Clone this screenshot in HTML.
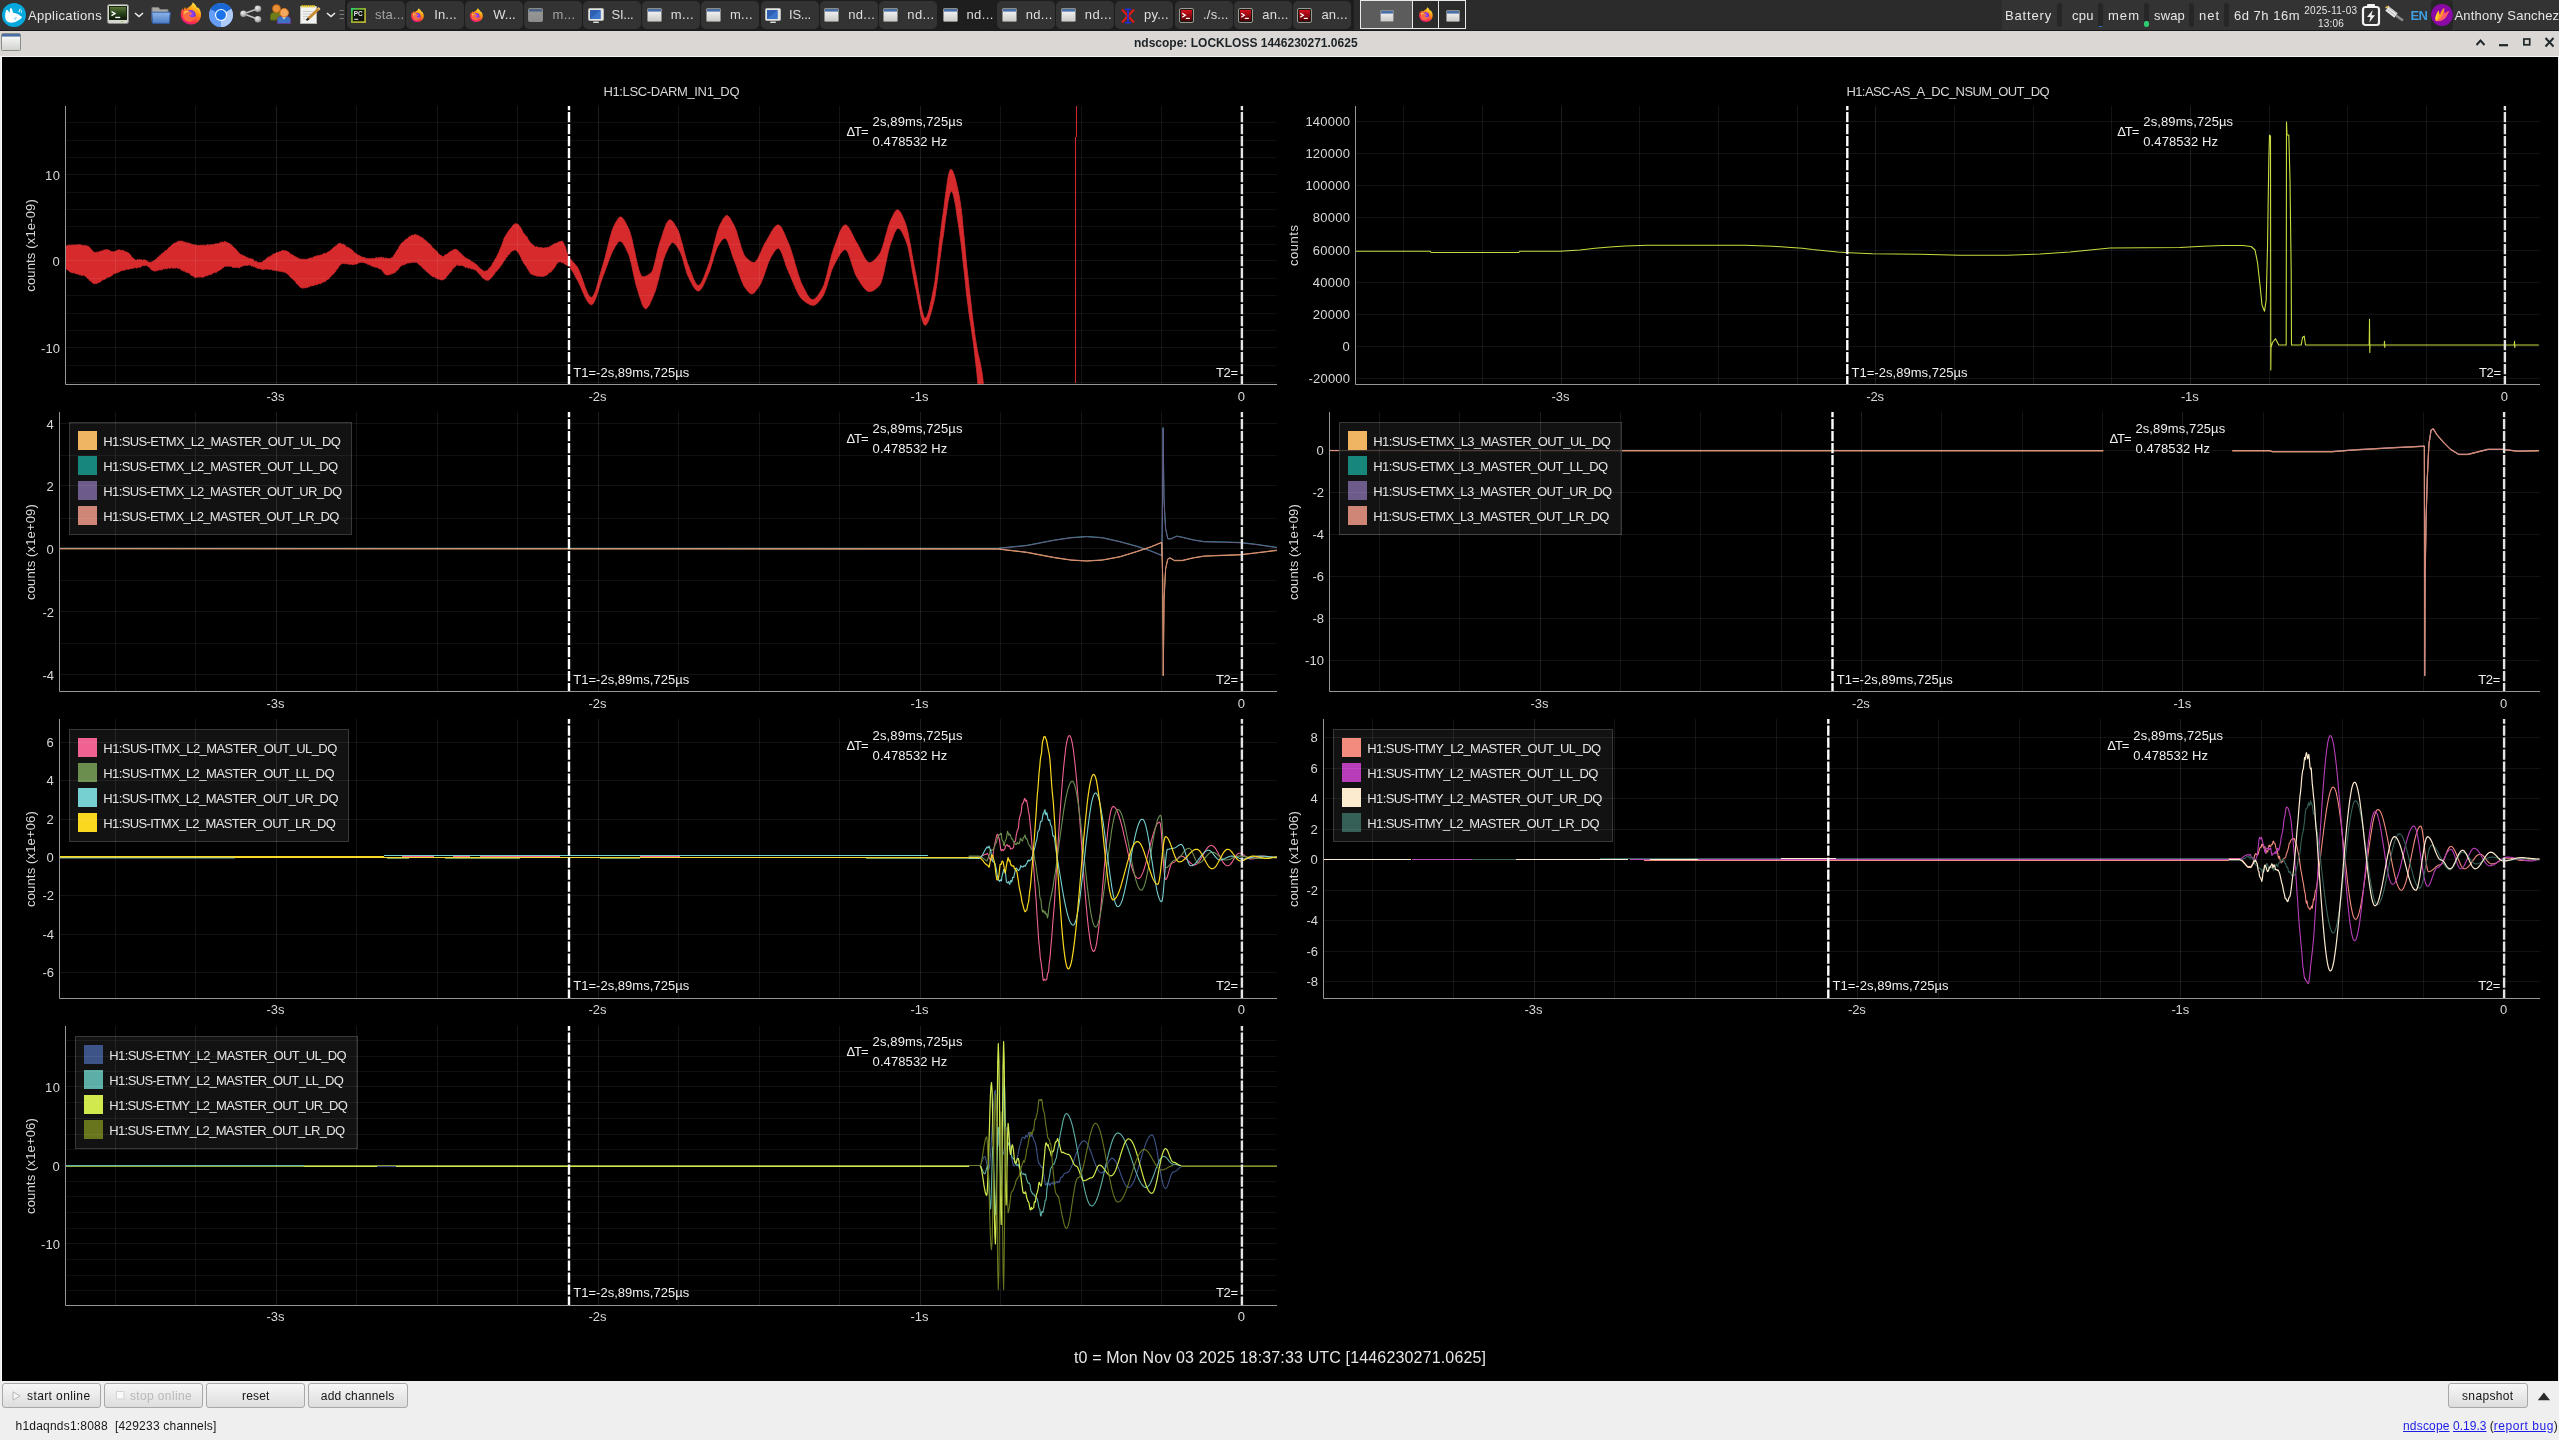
<!DOCTYPE html>
<html lang="en"><head><meta charset="utf-8"><title>ndscope: LOCKLOSS 1446230271.0625</title>
<style>
html,body{margin:0;padding:0;background:#efefef;}
body{width:2559px;height:1440px;position:relative;overflow:hidden;font-family:"Liberation Sans",Arial,sans-serif;}
#panel{will-change:transform;position:absolute;left:0;top:0;width:2559px;height:31px;background:#333;overflow:hidden;white-space:nowrap}
#panel .tl{position:absolute;left:345px;top:0;width:1657px;height:30px;background:#2b2b2b}
#panel .tl2{position:absolute;left:345px;top:0;width:1009px;height:30px;background:#1d1d1d}
.tb{position:absolute;top:1px;height:28px;width:58px;background:#333;border-radius:5px;box-sizing:border-box}
.tb.act{background:#1e1e1e}
.tb span{position:absolute;top:6px;color:#dedede;line-height:16px}

.pt{position:absolute;color:#e6e6e6;line-height:16px;white-space:nowrap}
.bar{position:absolute;top:3px;width:5px;height:24px;background:#262626;border-radius:2.5px;overflow:hidden}
#titlebar{will-change:transform;position:absolute;left:0;top:31px;width:2559px;height:26px;background:#dad7d4;border-bottom:1px solid #f6f5f4;box-sizing:border-box}
#titlebar .t{position:absolute;left:1134px;top:2.5px;line-height:16px;color:#1c2226;font-weight:bold;white-space:nowrap}
#bottom{will-change:transform;position:absolute;left:0;top:1381px;width:2559px;height:59px;background:#efefef}
.btn{position:absolute;top:2px;height:25px;box-sizing:border-box;border:1px solid #a8a8a8;border-radius:3px;background:linear-gradient(#f7f7f7,#dddddd);color:#111;line-height:16px}
.btn span{position:absolute;top:4px;white-space:nowrap}
.st{position:absolute;line-height:16px;white-space:nowrap;color:#161616}
a{color:#1c1ce8}
#edgeL{position:absolute;left:0;top:57px;width:2px;height:1324px;background:linear-gradient(90deg,#ededed 50%,#fbfbfb 50%)}
#edgeR{position:absolute;left:2558px;top:57px;width:1px;height:1324px;background:#e8e8e8}
</style></head>
<body>
<div id="panel">
<div class="tl"></div><div class="tl2"></div>
<svg style="position:absolute;left:2px;top:3px" width="24" height="24" viewBox="0 0 24 24"><circle cx="12" cy="12" r="12" fill="#05a9dd"/>
<path d="M3.200 13.500C3 11 3.600 8.200 4.400 7C5.200 6.400 6.400 7.600 7.200 9.600L7.800 9.200C7.600 7.400 7.800 5.400 8.800 5.100C10 4.900 10.600 7.400 11 9.800C14 10.200 17.500 11.600 20.100 14.100C19.600 16 16.500 17.200 14.200 18.600C12 19.800 8.600 20.200 6 18.900C4 17.800 3 15.600 3.200 13.500Z" fill="#fff"/>
<path d="M11.600 15.400l2.200-1.700 1 1-1.800 2.600z" fill="#2fb6e2" fill-opacity=".7"/><path d="M12.200 14.400l2.400 2M13.800 13.900l-1.800 2.500" stroke="#fff" stroke-width=".45"/>
<path d="M16.400 8.600l1.500-3.300.9.900-1.300 3.300zM18.600 9.700l.9-2.600.7.600-.8 2.500z" fill="#fff" fill-opacity=".8"/></svg>
<div class="pt" style="left:28px;top:7px"><span style="font-size:13px;letter-spacing:0.323px;">Applications</span></div>
<svg style="position:absolute;left:107px;top:4px" width="22" height="20" viewBox="0 0 22 20"><defs><linearGradient id="tg" x1="0" y1="0" x2="0" y2="1"><stop offset="0" stop-color="#5d7a3a"/><stop offset=".45" stop-color="#2f4a20"/><stop offset="1" stop-color="#0e1a08"/></linearGradient></defs>
<rect x="0.500" y="0.500" width="21" height="19" rx="2" fill="#d6d6d0" stroke="#8e8e88"/><rect x="2.500" y="2.500" width="17" height="13" fill="url(#tg)" stroke="#1c2414"/>
<path d="M4.500 7.500L8 9.600L4.500 11.700" stroke="#fff" stroke-width="1.400" fill="none"/><rect x="8.200" y="12.800" width="5" height="1.300" fill="#fff"/><rect x="14.500" y="17" width="1.200" height="1.200" fill="#7ad020"/></svg>
<svg style="position:absolute;left:134px;top:12px" width="10" height="6" viewBox="0 0 10 6"><path d="M1 1L5 4.600L9 1" stroke="#f0f0f0" stroke-width="1.500" fill="none"/></svg>
<svg style="position:absolute;left:151px;top:6px" width="20" height="18" viewBox="0 0 20 18"><defs><linearGradient id="fg" x1="0" y1="0" x2="0" y2="1"><stop offset="0" stop-color="#8fb4e8"/><stop offset="1" stop-color="#4f7fc8"/></linearGradient></defs>
<path d="M1 1.500h6.500l1.500 2H17v12H1z" fill="#a8a8a4" stroke="#7c7c78"/><path d="M.7 6.200H19.300L18.300 17.300H1.700z" fill="url(#fg)" stroke="#3560a8"/></svg>
<div style="position:absolute;left:179px;top:2px;width:24px;height:24px"><svg width="24" height="24" viewBox="0 0 24 24"><defs>
<linearGradient id="ffa" x1="0.8" y1="0.05" x2="0.25" y2="1"><stop offset="0" stop-color="#fff44f"/><stop offset="0.35" stop-color="#ff980e"/><stop offset="0.7" stop-color="#ff3647"/><stop offset="1" stop-color="#e31587"/></linearGradient>
<radialGradient id="ffb" cx="0.5" cy="0.4" r="0.6"><stop offset="0" stop-color="#b04cff"/><stop offset="1" stop-color="#5b2bd6"/></radialGradient></defs>
<path d="M12.3 3.2c1-1.2 1.2-2 1.3-2.9 2.2 1.4 3.6 3.3 4.2 5.2 1.5-.4 2.4.9 2.6 1.6 2.2 3.4 2.3 8.100-.2 11.4-2.3 3.200-6.600 4.700-10.500 3.800C5.600 21.400 2.200 18.200 1.800 13.800c-.3-3 .6-5.500 1.700-7.500.2 1 .500 1.600 1 2.200.2-1.600.8-2.700 1.700-3.600.1.900.5 1.500 1.200 2 1.200-1.200 2.900-2.400 4.900-3.700z" fill="url(#ffa)"/>
<circle cx="11.700" cy="13" r="5.100" fill="url(#ffb)"/>
<path d="M6 11c1.500-1.300 3.600-1.600 5.400-.9 1 .4 1.500 1 1.300 1.800-.3.900-1.600 1-2.400 1.100.4 1.400 1.600 2.300 3.100 2.300 1.300 0 2.500-.6 3.300-1.700-.2 3.400-2.700 6-6.200 6.200-3.400.1-6.300-2.400-6.500-5.700-.1-1.200.5-2.300 2-3.100z" fill="#ff7139" fill-opacity=".92"/>
<path d="M5 9.500c.9-.9 2.500-1 3.700-.6 1.300.4 2.100 1 2.700 1.200-1.800-.4-3.500-.2-5 .9-.8.6-1.400 1.400-1.600 2.300-.3-1.500-.4-2.900.2-3.800z" fill="#ffbd4f"/></svg></div>
<svg style="position:absolute;left:209px;top:3px" width="24" height="24" viewBox="0 0 24 24"><circle cx="12" cy="12" r="12" fill="#669df6"/>
<path d="M12 12L1.610 6A12 12 0 0 1 22.390 6z" fill="#1967d2"/><path d="M12 12L22.390 6A12 12 0 0 1 12 24z" fill="#aecbfa"/><path d="M12 12L12 24A12 12 0 0 1 1.610 6z" fill="#669df6"/>
<path d="M1.610 6H12V12z" fill="#1967d2"/><path d="M22.390 6L17.200 15 12 12z" fill="#aecbfa"/><path d="M12 24l-5.200-9L12 12z" fill="#669df6"/>
<circle cx="12" cy="12" r="6" fill="#fff"/><circle cx="12" cy="12" r="4.900" fill="#1a73e8"/></svg>
<svg style="position:absolute;left:239px;top:4px" width="24" height="22" viewBox="0 0 24 22"><defs><radialGradient id="sg" cx=".4" cy=".35" r=".7"><stop offset="0" stop-color="#f4f4f4"/><stop offset="1" stop-color="#8c8c8c"/></radialGradient></defs>
<path d="M18.900 4.800L4.500 9.700L18.900 15.300" stroke="#c4c4c4" stroke-width="1.500" fill="none"/><circle cx="4.500" cy="9.700" r="3.300" fill="url(#sg)"/><circle cx="18.900" cy="4.800" r="3.300" fill="url(#sg)"/><circle cx="18.900" cy="15.300" r="3.300" fill="url(#sg)"/></svg>
<svg style="position:absolute;left:269px;top:4px" width="23" height="21" viewBox="0 0 23 21"><path d="M1.500 16v-4.500c0-2 1.600-3 3.500-3h5c1.900 0 3.500 1 3.500 3V16z" fill="#6d7d1c" stroke="#56640f"/><circle cx="7.500" cy="4.600" r="3.900" fill="#e89038" stroke="#c86a10"/>
<path d="M8.500 19.500v-4c0-2 1.600-3 3.500-3h6c1.900 0 3.500 1 3.500 3v4z" fill="#3a74c0" stroke="#6a3a9a"/><path d="M13 12.500l2 3 2-3z" fill="#e8eef8"/><circle cx="15.200" cy="8.800" r="4.300" fill="#f4a860" stroke="#d87818"/></svg>
<svg style="position:absolute;left:299px;top:3px" width="22" height="22" viewBox="0 0 22 22"><rect x="1.500" y="3.500" width="16" height="17" fill="#f2f2f0" stroke="#b4b4b0"/><path d="M4 8.500h10M4 11h10M4 13.500h8M4 16h7" stroke="#c8c8c8" stroke-width=".9"/>
<path d="M2.500 3.200h14" stroke="#f0d020" stroke-width="2.600" stroke-dasharray="1.300 .7"/><path d="M20 5.500L9 16" stroke="#c88a30" stroke-width="2.800"/><path d="M20.600 4.900L19.300 6.200" stroke="#e8c078" stroke-width="2.800"/><path d="M9.600 15.400L7.600 17.400" stroke="#202020" stroke-width="2"/></svg>
<svg style="position:absolute;left:326px;top:12px" width="10" height="6" viewBox="0 0 10 6"><path d="M1 1L5 4.600L9 1" stroke="#f0f0f0" stroke-width="1.500" fill="none"/></svg>
<svg style="position:absolute;left:339px;top:9px" width="6" height="12"><path d="M.5 1.500h4.500M.5 5.500h4.500M.5 9.500h4.500" stroke="#7a7a7a" stroke-width="1.200"/></svg>
<div class="tb" style="left:346.5px"><div style="position:absolute;left:4.500px;top:6.500px;width:16px;height:16px"><svg width="15" height="15" viewBox="0 0 15 15"><defs><linearGradient id="pcg" x1="0" y1="0" x2="1" y2="1"><stop offset="0" stop-color="#21d789"/><stop offset=".25" stop-color="#5fb832"/><stop offset=".6" stop-color="#a8a82c"/><stop offset="1" stop-color="#b3b030"/></linearGradient></defs><rect width="15" height="15" fill="url(#pcg)"/><rect x="1.800" y="1.800" width="11.400" height="11.400" fill="#10160f"/><text x="2.800" y="8" font-size="6.400" font-weight="bold" fill="#e8e8e8" font-family="Liberation Sans, sans-serif" textLength="9" lengthAdjust="spacingAndGlyphs">PC</text><rect x="3.200" y="10.800" width="4" height="1" fill="#e8e8e8"/></svg></div><span style="font-size:13px;letter-spacing:0.178px;color:#a4a4a4;left:28.5px">sta...</span></div>
<div class="tb" style="left:405.65px"><div style="position:absolute;left:4.500px;top:6.500px;width:16px;height:16px"><svg width="15" height="15" viewBox="0 0 24 24"><defs>
<linearGradient id="ffa" x1="0.8" y1="0.05" x2="0.25" y2="1"><stop offset="0" stop-color="#fff44f"/><stop offset="0.35" stop-color="#ff980e"/><stop offset="0.7" stop-color="#ff3647"/><stop offset="1" stop-color="#e31587"/></linearGradient>
<radialGradient id="ffb" cx="0.5" cy="0.4" r="0.6"><stop offset="0" stop-color="#b04cff"/><stop offset="1" stop-color="#5b2bd6"/></radialGradient></defs>
<path d="M12.3 3.2c1-1.2 1.2-2 1.3-2.9 2.2 1.4 3.6 3.3 4.2 5.2 1.5-.4 2.4.9 2.6 1.6 2.2 3.4 2.3 8.100-.2 11.4-2.3 3.200-6.600 4.700-10.500 3.800C5.600 21.400 2.200 18.200 1.800 13.800c-.3-3 .6-5.500 1.700-7.500.2 1 .500 1.600 1 2.200.2-1.600.8-2.700 1.700-3.600.1.900.5 1.500 1.200 2 1.200-1.200 2.900-2.400 4.900-3.700z" fill="url(#ffa)"/>
<circle cx="11.700" cy="13" r="5.100" fill="url(#ffb)"/>
<path d="M6 11c1.500-1.300 3.600-1.600 5.400-.9 1 .4 1.500 1 1.300 1.800-.3.900-1.600 1-2.400 1.100.4 1.400 1.600 2.300 3.100 2.300 1.300 0 2.500-.6 3.300-1.700-.2 3.400-2.700 6-6.200 6.200-3.400.1-6.300-2.400-6.500-5.700-.1-1.200.5-2.300 2-3.100z" fill="#ff7139" fill-opacity=".92"/>
<path d="M5 9.500c.9-.9 2.500-1 3.700-.6 1.300.4 2.100 1 2.700 1.200-1.800-.4-3.500-.2-5 .9-.8.6-1.400 1.400-1.600 2.300-.3-1.500-.4-2.900.2-3.800z" fill="#ffbd4f"/></svg></div><span style="font-size:13px;letter-spacing:0.191px;left:28.5px">In...</span></div>
<div class="tb" style="left:464.8px"><div style="position:absolute;left:4.500px;top:6.500px;width:16px;height:16px"><svg width="15" height="15" viewBox="0 0 24 24"><defs>
<linearGradient id="ffa" x1="0.8" y1="0.05" x2="0.25" y2="1"><stop offset="0" stop-color="#fff44f"/><stop offset="0.35" stop-color="#ff980e"/><stop offset="0.7" stop-color="#ff3647"/><stop offset="1" stop-color="#e31587"/></linearGradient>
<radialGradient id="ffb" cx="0.5" cy="0.4" r="0.6"><stop offset="0" stop-color="#b04cff"/><stop offset="1" stop-color="#5b2bd6"/></radialGradient></defs>
<path d="M12.3 3.2c1-1.2 1.2-2 1.3-2.9 2.2 1.4 3.6 3.3 4.2 5.2 1.5-.4 2.4.9 2.6 1.6 2.2 3.4 2.3 8.100-.2 11.4-2.3 3.200-6.600 4.700-10.500 3.800C5.600 21.400 2.200 18.200 1.800 13.800c-.3-3 .6-5.500 1.700-7.500.2 1 .500 1.600 1 2.200.2-1.600.8-2.700 1.700-3.600.1.900.5 1.500 1.200 2 1.200-1.200 2.900-2.400 4.900-3.700z" fill="url(#ffa)"/>
<circle cx="11.700" cy="13" r="5.100" fill="url(#ffb)"/>
<path d="M6 11c1.500-1.300 3.600-1.600 5.400-.9 1 .4 1.500 1 1.300 1.800-.3.900-1.600 1-2.400 1.100.4 1.400 1.600 2.300 3.100 2.300 1.300 0 2.500-.6 3.300-1.700-.2 3.400-2.700 6-6.200 6.200-3.400.1-6.300-2.400-6.500-5.700-.1-1.200.5-2.300 2-3.100z" fill="#ff7139" fill-opacity=".92"/>
<path d="M5 9.500c.9-.9 2.500-1 3.700-.6 1.300.4 2.100 1 2.700 1.200-1.800-.4-3.500-.2-5 .9-.8.6-1.400 1.400-1.600 2.300-.3-1.500-.4-2.900.2-3.800z" fill="#ffbd4f"/></svg></div><span style="font-size:13px;letter-spacing:0.007px;left:28.5px">W...</span></div>
<div class="tb" style="left:523.95px"><div style="position:absolute;left:4.500px;top:6.500px;width:16px;height:16px"><svg width="15" height="14" viewBox="0 0 15 14"><defs><linearGradient id="wg15149a9a9a" x1="0" y1="0" x2="0" y2="1"><stop offset="0" stop-color="#9a9a9a"/><stop offset="1" stop-color="#8c8c8c"/></linearGradient></defs>
<rect x="0.5" y="0.5" width="14" height="13" rx="1" fill="url(#wg15149a9a9a)" stroke="#8a8c88"/><rect x="1" y="1" width="13" height="2.600" fill="#4f6388"/></svg></div><span style="font-size:13px;letter-spacing:0.368px;color:#a4a4a4;left:28.5px">m...</span></div>
<div class="tb" style="left:583.1px"><div style="position:absolute;left:4.500px;top:6.500px;width:16px;height:16px"><svg width="16" height="16" viewBox="0 0 16 16"><rect x="0.500" y="0.500" width="15" height="12" rx="1.200" fill="#e4e4e0" stroke="#b8b8b4"/><rect x="2" y="2" width="10.500" height="9" fill="#2f5fb0"/><path d="M2 11L12.500 2V11z" fill="#3c74cc"/><rect x="5" y="13.500" width="6" height="1.600" rx=".8" fill="#d8d8d4"/></svg></div><span style="font-size:13px;letter-spacing:-0.270px;left:28.5px">SI...</span></div>
<div class="tb" style="left:642.25px"><div style="position:absolute;left:4.500px;top:6.500px;width:16px;height:16px"><svg width="15" height="14" viewBox="0 0 15 14"><defs><linearGradient id="wg1514fafafa" x1="0" y1="0" x2="0" y2="1"><stop offset="0" stop-color="#fafafa"/><stop offset="1" stop-color="#c9cbc8"/></linearGradient></defs>
<rect x="0.5" y="0.5" width="14" height="13" rx="1" fill="url(#wg1514fafafa)" stroke="#8a8c88"/><rect x="1" y="1" width="13" height="2.600" fill="#4a6ea8"/></svg></div><span style="font-size:13px;letter-spacing:0.368px;left:28.5px">m...</span></div>
<div class="tb" style="left:701.4px"><div style="position:absolute;left:4.500px;top:6.500px;width:16px;height:16px"><svg width="15" height="14" viewBox="0 0 15 14"><defs><linearGradient id="wg1514fafafa" x1="0" y1="0" x2="0" y2="1"><stop offset="0" stop-color="#fafafa"/><stop offset="1" stop-color="#c9cbc8"/></linearGradient></defs>
<rect x="0.5" y="0.5" width="14" height="13" rx="1" fill="url(#wg1514fafafa)" stroke="#8a8c88"/><rect x="1" y="1" width="13" height="2.600" fill="#4a6ea8"/></svg></div><span style="font-size:13px;letter-spacing:0.368px;left:28.5px">m...</span></div>
<div class="tb" style="left:760.55px"><div style="position:absolute;left:4.500px;top:6.500px;width:16px;height:16px"><svg width="16" height="16" viewBox="0 0 16 16"><rect x="0.500" y="0.500" width="15" height="12" rx="1.200" fill="#e4e4e0" stroke="#b8b8b4"/><rect x="2" y="2" width="10.500" height="9" fill="#2f5fb0"/><path d="M2 11L12.500 2V11z" fill="#3c74cc"/><rect x="5" y="13.500" width="6" height="1.600" rx=".8" fill="#d8d8d4"/></svg></div><span style="font-size:13px;letter-spacing:-0.270px;left:28.5px">IS...</span></div>
<div class="tb" style="left:819.7px"><div style="position:absolute;left:4.500px;top:6.500px;width:16px;height:16px"><svg width="15" height="14" viewBox="0 0 15 14"><defs><linearGradient id="wg1514fafafa" x1="0" y1="0" x2="0" y2="1"><stop offset="0" stop-color="#fafafa"/><stop offset="1" stop-color="#c9cbc8"/></linearGradient></defs>
<rect x="0.5" y="0.5" width="14" height="13" rx="1" fill="url(#wg1514fafafa)" stroke="#8a8c88"/><rect x="1" y="1" width="13" height="2.600" fill="#4a6ea8"/></svg></div><span style="font-size:13px;letter-spacing:0.361px;left:28.5px">nd...</span></div>
<div class="tb" style="left:878.85px"><div style="position:absolute;left:4.500px;top:6.500px;width:16px;height:16px"><svg width="15" height="14" viewBox="0 0 15 14"><defs><linearGradient id="wg1514fafafa" x1="0" y1="0" x2="0" y2="1"><stop offset="0" stop-color="#fafafa"/><stop offset="1" stop-color="#c9cbc8"/></linearGradient></defs>
<rect x="0.5" y="0.5" width="14" height="13" rx="1" fill="url(#wg1514fafafa)" stroke="#8a8c88"/><rect x="1" y="1" width="13" height="2.600" fill="#4a6ea8"/></svg></div><span style="font-size:13px;letter-spacing:0.361px;left:28.5px">nd...</span></div>
<div class="tb act" style="left:938.0px"><div style="position:absolute;left:4.500px;top:6.500px;width:16px;height:16px"><svg width="15" height="14" viewBox="0 0 15 14"><defs><linearGradient id="wg1514fafafa" x1="0" y1="0" x2="0" y2="1"><stop offset="0" stop-color="#fafafa"/><stop offset="1" stop-color="#c9cbc8"/></linearGradient></defs>
<rect x="0.5" y="0.5" width="14" height="13" rx="1" fill="url(#wg1514fafafa)" stroke="#8a8c88"/><rect x="1" y="1" width="13" height="2.600" fill="#4a6ea8"/></svg></div><span style="font-size:13px;letter-spacing:0.361px;left:28.5px">nd...</span></div>
<div class="tb" style="left:997.15px"><div style="position:absolute;left:4.500px;top:6.500px;width:16px;height:16px"><svg width="15" height="14" viewBox="0 0 15 14"><defs><linearGradient id="wg1514fafafa" x1="0" y1="0" x2="0" y2="1"><stop offset="0" stop-color="#fafafa"/><stop offset="1" stop-color="#c9cbc8"/></linearGradient></defs>
<rect x="0.5" y="0.5" width="14" height="13" rx="1" fill="url(#wg1514fafafa)" stroke="#8a8c88"/><rect x="1" y="1" width="13" height="2.600" fill="#4a6ea8"/></svg></div><span style="font-size:13px;letter-spacing:0.361px;left:28.5px">nd...</span></div>
<div class="tb" style="left:1056.3px"><div style="position:absolute;left:4.500px;top:6.500px;width:16px;height:16px"><svg width="15" height="14" viewBox="0 0 15 14"><defs><linearGradient id="wg1514fafafa" x1="0" y1="0" x2="0" y2="1"><stop offset="0" stop-color="#fafafa"/><stop offset="1" stop-color="#c9cbc8"/></linearGradient></defs>
<rect x="0.5" y="0.5" width="14" height="13" rx="1" fill="url(#wg1514fafafa)" stroke="#8a8c88"/><rect x="1" y="1" width="13" height="2.600" fill="#4a6ea8"/></svg></div><span style="font-size:13px;letter-spacing:0.361px;left:28.5px">nd...</span></div>
<div class="tb" style="left:1115.4499999999998px"><div style="position:absolute;left:4.500px;top:6.500px;width:16px;height:16px"><svg width="16" height="16" viewBox="0 0 16 16"><path d="M2 1.500L14 14.500M14 1.500L2 14.500" stroke="#e01818" stroke-width="2.200"/><path d="M8 1V15M5 1.200H11M5 14.800H11" stroke="#2030d8" stroke-width="1.600"/></svg></div><span style="font-size:13px;letter-spacing:0.245px;left:28.5px">py...</span></div>
<div class="tb" style="left:1174.6px"><div style="position:absolute;left:4.500px;top:6.500px;width:16px;height:16px"><svg width="15" height="15" viewBox="0 0 15 15"><defs><linearGradient id="trg" x1="0" y1="0" x2="0" y2="1"><stop offset="0" stop-color="#d8101c"/><stop offset="1" stop-color="#4c0004"/></linearGradient></defs><rect x="0.500" y="0.500" width="14" height="14" rx="1.500" fill="#1a1a1a" stroke="#9a9a90"/><rect x="2" y="2" width="11" height="11" fill="url(#trg)"/><path d="M3.300 5.200L6.300 7.200L3.300 9.200" stroke="#fff" stroke-width="1.300" fill="none"/><rect x="6.800" y="9.800" width="4" height="1.200" fill="#fff"/></svg></div><span style="font-size:13px;letter-spacing:0.166px;left:28.5px">./s...</span></div>
<div class="tb" style="left:1233.75px"><div style="position:absolute;left:4.500px;top:6.500px;width:16px;height:16px"><svg width="15" height="15" viewBox="0 0 15 15"><defs><linearGradient id="trg" x1="0" y1="0" x2="0" y2="1"><stop offset="0" stop-color="#d8101c"/><stop offset="1" stop-color="#4c0004"/></linearGradient></defs><rect x="0.500" y="0.500" width="14" height="14" rx="1.500" fill="#1a1a1a" stroke="#9a9a90"/><rect x="2" y="2" width="11" height="11" fill="url(#trg)"/><path d="M3.300 5.200L6.300 7.200L3.300 9.200" stroke="#fff" stroke-width="1.300" fill="none"/><rect x="6.800" y="9.800" width="4" height="1.200" fill="#fff"/></svg></div><span style="font-size:13px;letter-spacing:0.210px;left:28.5px">an...</span></div>
<div class="tb" style="left:1292.9px"><div style="position:absolute;left:4.500px;top:6.500px;width:16px;height:16px"><svg width="15" height="15" viewBox="0 0 15 15"><defs><linearGradient id="trg" x1="0" y1="0" x2="0" y2="1"><stop offset="0" stop-color="#d8101c"/><stop offset="1" stop-color="#4c0004"/></linearGradient></defs><rect x="0.500" y="0.500" width="14" height="14" rx="1.500" fill="#1a1a1a" stroke="#9a9a90"/><rect x="2" y="2" width="11" height="11" fill="url(#trg)"/><path d="M3.300 5.200L6.300 7.200L3.300 9.200" stroke="#fff" stroke-width="1.300" fill="none"/><rect x="6.800" y="9.800" width="4" height="1.200" fill="#fff"/></svg></div><span style="font-size:13px;letter-spacing:0.210px;left:28.5px">an...</span></div>
<div style="position:absolute;left:1360px;top:0;width:106px;height:29px;box-sizing:border-box;border:1px solid #e8e8e8;background:#2b2b2b"><div style="position:absolute;left:0;top:0;width:51px;height:27px;background:#5c5c5c;border-right:1px solid #e8e8e8"></div><div style="position:absolute;left:52px;top:0;width:25px;height:27px;border-right:1px solid #e8e8e8"></div><div style="position:absolute;left:19px;top:6.500px"><svg width="14" height="12" viewBox="0 0 14 12"><defs><linearGradient id="wg1412fafafa" x1="0" y1="0" x2="0" y2="1"><stop offset="0" stop-color="#fafafa"/><stop offset="1" stop-color="#c9cbc8"/></linearGradient></defs>
<rect x="0.5" y="0.5" width="13" height="11" rx="1" fill="url(#wg1412fafafa)" stroke="#8a8c88"/><rect x="1" y="1" width="12" height="2.600" fill="#4a6ea8"/></svg></div><div style="position:absolute;left:57px;top:5.500px"><svg width="16" height="16" viewBox="0 0 24 24"><defs>
<linearGradient id="ffa" x1="0.8" y1="0.05" x2="0.25" y2="1"><stop offset="0" stop-color="#fff44f"/><stop offset="0.35" stop-color="#ff980e"/><stop offset="0.7" stop-color="#ff3647"/><stop offset="1" stop-color="#e31587"/></linearGradient>
<radialGradient id="ffb" cx="0.5" cy="0.4" r="0.6"><stop offset="0" stop-color="#b04cff"/><stop offset="1" stop-color="#5b2bd6"/></radialGradient></defs>
<path d="M12.3 3.2c1-1.2 1.2-2 1.3-2.9 2.2 1.4 3.6 3.3 4.2 5.2 1.5-.4 2.4.9 2.6 1.6 2.2 3.4 2.3 8.100-.2 11.4-2.3 3.200-6.600 4.700-10.500 3.800C5.600 21.400 2.200 18.200 1.800 13.800c-.3-3 .6-5.500 1.700-7.500.2 1 .500 1.600 1 2.200.2-1.600.8-2.700 1.700-3.600.1.900.5 1.500 1.200 2 1.200-1.200 2.900-2.400 4.900-3.700z" fill="url(#ffa)"/>
<circle cx="11.700" cy="13" r="5.100" fill="url(#ffb)"/>
<path d="M6 11c1.500-1.300 3.600-1.600 5.400-.9 1 .4 1.500 1 1.300 1.800-.3.900-1.600 1-2.400 1.100.4 1.400 1.600 2.300 3.100 2.300 1.300 0 2.500-.6 3.300-1.700-.2 3.400-2.700 6-6.200 6.200-3.400.1-6.300-2.400-6.500-5.700-.1-1.200.5-2.300 2-3.100z" fill="#ff7139" fill-opacity=".92"/>
<path d="M5 9.500c.9-.9 2.500-1 3.700-.6 1.300.4 2.100 1 2.700 1.200-1.800-.4-3.500-.2-5 .9-.8.6-1.400 1.400-1.600 2.300-.3-1.500-.4-2.900.2-3.800z" fill="#ffbd4f"/></svg></div><div style="position:absolute;left:85px;top:6.500px"><svg width="14" height="12" viewBox="0 0 14 12"><defs><linearGradient id="wg1412fafafa" x1="0" y1="0" x2="0" y2="1"><stop offset="0" stop-color="#fafafa"/><stop offset="1" stop-color="#c9cbc8"/></linearGradient></defs>
<rect x="0.5" y="0.5" width="13" height="11" rx="1" fill="url(#wg1412fafafa)" stroke="#8a8c88"/><rect x="1" y="1" width="12" height="2.600" fill="#4a6ea8"/></svg></div></div>
<div class="pt" style="left:2005px;top:7px"><span style="font-size:13px;letter-spacing:0.830px;">Battery</span></div>
<div class="bar" style="left:2056.500px"></div>
<div class="pt" style="left:2072px;top:7px"><span style="font-size:13px;letter-spacing:0.210px;">cpu</span></div>
<div class="bar" style="left:2097.500px"><div style="position:absolute;left:0;bottom:0;width:5px;height:1.500px;background:#2a7fe0"></div></div>
<div class="pt" style="left:2108px;top:7px"><span style="font-size:13px;letter-spacing:1.036px;">mem</span></div>
<div class="bar" style="left:2143.500px"><div style="position:absolute;left:0;bottom:0;width:5px;height:6.500px;background:#2ecc71;border-radius:2px 2px 0 0"></div></div>
<div class="pt" style="left:2154px;top:7px"><span style="font-size:13px;letter-spacing:0.160px;">swap</span></div>
<div class="bar" style="left:2188.500px"></div>
<div class="pt" style="left:2199px;top:7px"><span style="font-size:13px;letter-spacing:0.974px;">net</span></div>
<div class="bar" style="left:2223.500px"></div>
<div class="pt" style="left:2234px;top:7px"><span style="font-size:13px;letter-spacing:0.505px;">6d 7h 16m</span></div>
<div class="pt" style="left:2304.300px;top:1.500px;line-height:13px"><span style="font-size:10px;letter-spacing:0.258px;">2025-11-03</span></div>
<div class="pt" style="left:2318px;top:14.500px;line-height:13px"><span style="font-size:10px;letter-spacing:0.194px;">13:06</span></div>
<svg style="position:absolute;left:2361px;top:3px" width="20" height="24" viewBox="0 0 20 24"><rect x="6" y="1" width="8" height="3" rx="1" fill="#f4f4f4"/><rect x="2" y="4" width="16" height="18" rx="2.500" fill="none" stroke="#f4f4f4" stroke-width="2.200"/><path d="M11.800 7L6 14h3.600L8.200 19.500 14 12.300h-3.600z" fill="#f4f4f4"/></svg>
<svg style="position:absolute;left:2384px;top:5px" width="22" height="18" viewBox="0 0 22 18"><path d="M3 3.500L12 10.500" stroke="#e8e8e8" stroke-width="5.500"/><path d="M1.500 2.800L5 1.200" stroke="#e8c060" stroke-width="1.600"/><path d="M12 10.500L19 15.500" stroke="#8c8c8c" stroke-width="2.600"/><path d="M3.500 4.500L11 10.300M5 2.600L12.800 8.600" stroke="#a8a8a8" stroke-width=".8"/></svg>
<div class="pt" style="left:2410.500px;top:7px;color:#3d9ee0;font-weight:bold"><span style="font-size:13px;letter-spacing:-0.781px;">EN</span></div>
<div style="position:absolute;left:2431px;top:0;width:22px;height:30px;background:#262626;border-radius:4px"></div>
<svg style="position:absolute;left:2431px;top:4px" width="22" height="22" viewBox="0 0 22 22"><circle cx="11" cy="11" r="10.900" fill="#8a0aa8"/><path d="M5 17c-1.500-3.500.5-7 2.600-10.500.2 2.500.9 3.600 1.600 4.400C9.700 8 11 5.500 13.300 4c-.3 2.600.2 4.400.7 5.700 1.300-1.500 3-2.300 4.600-2.600-2 2.600-2.300 5.500-5.600 8.200-2 1.600-5 2.400-8 1.700z" fill="#ff5a6a"/><path d="M5 17c-1.500-3.500.5-7 2.600-10.500.2 2.500.9 3.600 1.600 4.400C9.700 8 11 5.500 13.300 4c-.6 3.600-.9 6.500-3.300 9.500C8.700 15.200 7 16.500 5 17z" fill="#ff9a2a"/><path d="M5 17c-1.500-3.500.5-7 2.600-10.500.3 3.300.3 6-.6 8C6.500 15.600 5.800 16.500 5 17z" fill="#ffd028"/></svg>
<div class="pt" style="left:2454.500px;top:7px"><span style="font-size:13px;letter-spacing:0.191px;">Anthony Sanchez</span></div>
<div style="position:absolute;left:0;top:30px;width:2559px;height:1px;background:#1a1a1a"></div>
</div>
<div id="titlebar">
<div style="position:absolute;left:1px;top:1.500px"><svg width="20" height="18" viewBox="0 0 20 18"><defs><linearGradient id="wg2018ffffff" x1="0" y1="0" x2="0" y2="1"><stop offset="0" stop-color="#ffffff"/><stop offset="1" stop-color="#d0d2ce"/></linearGradient></defs>
<rect x="0.5" y="0.5" width="19" height="17" rx="1" fill="url(#wg2018ffffff)" stroke="#8a8c88"/><rect x="1" y="1" width="18" height="2.600" fill="#4a6ea8"/></svg></div>
<div class="t"><span style="font-size:12px;letter-spacing:0.004px;">ndscope: LOCKLOSS 1446230271.0625</span></div>
<svg style="position:absolute;left:2470px;top:4.500px" width="89" height="14" viewBox="0 0 89 14"><g stroke="#1f272b" fill="none" stroke-width="1.900"><path d="M6.500 9L10.500 4.500L14.500 9"/><path d="M29 9.200H38" stroke-width="2.200"/><rect x="53.900" y="3" width="5.800" height="5.800" stroke-width="1.700"/><path d="M75.500 2L83.500 10.500M83.500 2L75.500 10.500" stroke-width="2"/></g></svg>
</div>
<div id="edgeL"></div><div id="edgeR"></div>
<svg width="2559" height="1440" viewBox="0 0 2559 1440" font-family="Liberation Sans, Arial, sans-serif" style="position:absolute;left:0;top:0;will-change:transform" shape-rendering="auto">
<rect x="2" y="57" width="2556" height="1324" fill="#000"/>
<g id="plot1">
<clipPath id="c0"><rect x="66" y="106" width="1211" height="278"/></clipPath>
<g clip-path="url(#c0)"><path d="M65.5 246.3L66.2 246.2L67.0 245.8L67.8 245.4L68.5 245.3L69.2 245.0L70.0 245.2L70.8 245.6L71.5 244.9L72.2 244.8L73.0 245.2L73.8 245.1L74.5 245.1L75.2 244.7L76.0 245.1L76.8 245.3L77.5 244.7L78.2 245.0L79.0 244.6L79.8 244.8L80.5 244.7L81.2 245.3L82.0 245.1L82.8 245.7L83.5 245.7L84.2 245.7L85.0 245.0L85.8 245.8L86.5 246.1L87.2 246.2L88.0 245.9L88.8 246.7L89.5 247.2L90.2 248.1L91.0 249.6L91.8 249.8L92.5 251.0L93.2 252.0L94.0 252.0L94.8 252.4L95.5 252.5L96.2 252.4L97.0 251.9L97.8 252.2L98.5 252.4L99.2 251.2L100.0 251.7L100.8 251.2L101.5 250.7L102.2 251.3L103.0 250.7L103.8 249.7L104.5 250.0L105.2 250.0L106.0 249.6L106.8 249.8L107.5 249.5L108.2 249.9L109.0 250.5L109.8 250.3L110.5 251.2L111.2 251.4L112.0 252.0L112.8 251.6L113.5 251.7L114.2 251.7L115.0 251.8L115.8 251.6L116.5 250.4L117.2 250.3L118.0 250.6L118.8 249.5L119.5 249.9L120.2 250.0L121.0 250.5L121.8 250.4L122.5 250.3L123.2 250.5L124.0 250.8L124.8 251.7L125.5 251.4L126.2 251.8L127.0 252.4L127.8 252.6L128.5 253.1L129.2 253.4L130.0 254.6L130.8 255.3L131.5 256.7L132.2 257.4L133.0 258.0L133.8 259.0L134.5 259.2L135.2 260.1L136.0 260.0L136.8 260.2L137.5 259.5L138.2 260.1L139.0 259.4L139.8 259.3L140.5 259.9L141.2 259.7L142.0 260.1L142.8 260.8L143.5 259.7L144.2 259.8L145.0 260.1L145.8 260.3L146.5 260.5L147.2 261.0L148.0 261.9L148.8 262.3L149.5 262.1L150.2 262.5L151.0 262.4L151.8 261.7L152.5 261.7L153.2 260.9L154.0 261.0L154.8 260.2L155.5 259.7L156.2 258.9L157.0 258.5L157.8 257.2L158.5 256.8L159.2 256.7L160.0 255.1L160.8 255.4L161.5 253.7L162.2 253.9L163.0 252.6L163.8 252.5L164.5 251.7L165.2 250.5L166.0 250.9L166.8 250.3L167.5 249.2L168.2 248.4L169.0 247.8L169.8 246.8L170.5 246.9L171.2 245.7L172.0 245.2L172.8 244.3L173.5 243.8L174.2 243.0L175.0 243.4L175.8 242.5L176.5 242.5L177.2 241.8L178.0 241.3L178.8 241.3L179.5 241.1L180.2 241.3L181.0 241.2L181.8 241.3L182.5 241.0L183.2 241.4L184.0 242.5L184.8 241.9L185.5 242.0L186.2 242.7L187.0 243.3L187.8 242.6L188.5 243.3L189.2 243.3L190.0 243.1L190.8 244.2L191.5 244.2L192.2 244.4L193.0 244.4L193.8 245.0L194.5 244.9L195.2 245.2L196.0 245.0L196.8 245.0L197.5 246.0L198.2 245.3L199.0 245.6L199.8 245.5L200.5 245.3L201.2 245.2L202.0 245.6L202.8 245.2L203.5 245.2L204.2 245.3L205.0 245.6L205.8 245.4L206.5 245.2L207.2 244.8L208.0 244.5L208.8 245.2L209.5 245.1L210.2 244.7L211.0 244.8L211.8 244.8L212.5 244.8L213.2 244.7L214.0 244.1L214.8 244.7L215.5 243.5L216.2 244.1L217.0 243.7L217.8 243.7L218.5 243.8L219.2 243.5L220.0 242.4L220.8 242.0L221.5 242.7L222.2 241.9L223.0 242.1L223.8 242.4L224.5 241.4L225.2 241.3L226.0 242.2L226.8 242.4L227.5 242.6L228.2 243.1L229.0 243.3L229.8 243.6L230.5 244.7L231.2 245.0L232.0 245.3L232.8 246.6L233.5 247.1L234.2 248.0L235.0 248.3L235.8 249.2L236.5 250.0L237.2 250.9L238.0 252.1L238.8 252.5L239.5 253.5L240.2 254.0L241.0 255.1L241.8 254.4L242.5 255.6L243.2 255.7L244.0 256.1L244.8 255.9L245.5 256.6L246.2 257.4L247.0 257.4L247.8 257.8L248.5 258.0L249.2 258.8L250.0 258.7L250.8 258.3L251.5 259.2L252.2 259.1L253.0 259.1L253.8 260.4L254.5 261.4L255.2 261.3L256.0 261.2L256.8 261.5L257.5 262.5L258.2 262.4L259.0 262.5L259.8 262.5L260.5 262.5L261.2 262.6L262.0 262.2L262.8 261.7L263.5 260.8L264.2 260.8L265.0 259.7L265.8 259.7L266.5 258.3L267.2 258.1L268.0 257.5L268.8 256.5L269.5 257.1L270.2 256.6L271.0 255.6L271.8 255.6L272.5 255.1L273.2 253.7L274.0 254.3L274.8 253.8L275.5 253.5L276.2 252.7L277.0 252.6L277.8 252.3L278.5 252.4L279.2 251.8L280.0 251.5L280.8 251.7L281.5 250.8L282.2 250.7L283.0 250.0L283.8 251.1L284.5 250.8L285.2 250.8L286.0 250.9L286.8 251.0L287.5 251.5L288.2 251.8L289.0 252.4L289.8 253.1L290.5 254.2L291.2 254.4L292.0 254.7L292.8 254.9L293.5 255.3L294.2 256.5L295.0 256.6L295.8 256.9L296.5 257.2L297.2 257.4L298.0 258.1L298.8 258.8L299.5 258.7L300.2 259.0L301.0 259.2L301.8 259.5L302.5 258.9L303.2 259.4L304.0 259.1L304.8 259.7L305.5 259.0L306.2 259.4L307.0 259.5L307.8 258.7L308.5 258.5L309.2 258.5L310.0 258.3L310.8 257.7L311.5 258.0L312.2 258.3L313.0 257.2L313.8 257.0L314.5 256.5L315.2 256.7L316.0 255.9L316.8 255.7L317.5 256.2L318.2 255.2L319.0 255.7L319.8 255.6L320.5 254.9L321.2 254.8L322.0 255.1L322.8 254.1L323.5 253.8L324.2 253.2L325.0 253.5L325.8 253.7L326.5 253.3L327.2 252.3L328.0 252.0L328.8 251.6L329.5 251.4L330.2 250.6L331.0 250.1L331.8 249.4L332.5 248.5L333.2 247.9L334.0 247.3L334.8 246.5L335.5 246.1L336.2 245.9L337.0 245.0L337.8 244.4L338.5 243.4L339.2 244.0L340.0 243.1L340.8 243.3L341.5 244.2L342.2 244.4L343.0 244.4L343.8 244.2L344.5 245.1L345.2 245.4L346.0 246.3L346.8 247.4L347.5 247.2L348.2 247.4L349.0 247.7L349.8 248.6L350.5 249.0L351.2 249.2L352.0 250.2L352.8 250.4L353.5 251.8L354.2 252.5L355.0 253.2L355.8 253.3L356.5 254.2L357.2 254.6L358.0 255.0L358.8 255.5L359.5 255.6L360.2 255.8L361.0 256.9L361.8 256.8L362.5 257.2L363.2 257.8L364.0 257.1L364.8 257.6L365.5 258.2L366.2 258.4L367.0 258.3L367.8 258.9L368.5 258.7L369.2 258.3L370.0 258.4L370.8 259.0L371.5 258.8L372.2 257.9L373.0 259.0L373.8 258.6L374.5 258.7L375.2 257.9L376.0 257.8L376.8 257.4L377.5 258.6L378.2 257.5L379.0 258.1L379.8 257.3L380.5 257.6L381.2 257.0L382.0 257.5L382.8 258.1L383.5 257.4L384.2 258.4L385.0 258.2L385.8 257.9L386.5 258.2L387.2 258.4L388.0 258.6L388.8 258.5L389.5 258.5L390.2 258.6L391.0 258.2L391.8 257.6L392.5 257.4L393.2 256.8L394.0 255.0L394.8 254.4L395.5 253.0L396.2 251.6L397.0 250.9L397.8 249.1L398.5 248.5L399.2 246.4L400.0 245.6L400.8 244.3L401.5 243.2L402.2 242.9L403.0 242.0L403.8 241.7L404.5 240.8L405.2 239.8L406.0 239.5L406.8 239.0L407.5 238.7L408.2 237.5L409.0 237.3L409.8 236.2L410.5 236.6L411.2 235.6L412.0 235.0L412.8 235.3L413.5 235.6L414.2 234.5L415.0 234.6L415.8 234.8L416.5 234.8L417.2 235.5L418.0 235.4L418.8 235.7L419.5 236.6L420.2 236.6L421.0 237.4L421.8 237.4L422.5 237.9L423.2 238.2L424.0 240.0L424.8 239.7L425.5 240.4L426.2 240.9L427.0 241.7L427.8 242.3L428.5 243.8L429.2 243.5L430.0 244.2L430.8 245.2L431.5 245.9L432.2 247.5L433.0 248.3L433.8 248.5L434.5 249.0L435.2 250.1L436.0 251.5L436.8 250.8L437.5 252.8L438.2 253.1L439.0 254.6L439.8 254.5L440.5 255.4L441.2 255.4L442.0 255.9L442.8 256.7L443.5 256.4L444.2 255.7L445.0 255.2L445.8 254.5L446.5 254.5L447.2 254.1L448.0 253.5L448.8 252.8L449.5 251.9L450.2 251.7L451.0 251.1L451.8 251.1L452.5 250.9L453.2 249.8L454.0 249.4L454.8 249.5L455.5 249.3L456.2 249.5L457.0 250.1L457.8 250.2L458.5 251.4L459.2 251.8L460.0 252.7L460.8 253.3L461.5 254.0L462.2 254.7L463.0 255.7L463.8 256.3L464.5 257.2L465.2 257.7L466.0 257.7L466.8 258.7L467.5 258.7L468.2 259.4L469.0 260.0L469.8 259.8L470.5 261.0L471.2 261.4L472.0 261.8L472.8 262.1L473.5 262.6L474.2 262.9L475.0 263.7L475.8 264.1L476.5 265.0L477.2 265.2L478.0 266.5L478.8 267.2L479.5 267.8L480.2 268.4L481.0 269.5L481.8 269.3L482.5 270.6L483.2 270.9L484.0 271.2L484.8 271.4L485.5 271.0L486.2 270.9L487.0 270.8L487.8 270.1L488.5 269.3L489.2 267.9L490.0 267.7L490.8 266.8L491.5 265.7L492.2 264.3L493.0 262.5L493.8 262.2L494.5 260.7L495.2 258.7L496.0 258.5L496.8 256.4L497.5 254.9L498.2 253.4L499.0 252.2L499.8 249.8L500.5 248.1L501.2 246.7L502.0 244.7L502.8 242.2L503.5 240.3L504.2 238.1L505.0 236.7L505.8 235.5L506.5 234.2L507.2 232.9L508.0 232.2L508.8 230.5L509.5 229.7L510.2 229.0L511.0 227.9L511.8 227.2L512.5 226.1L513.2 225.1L514.0 224.7L514.8 223.8L515.5 223.3L516.2 224.0L517.0 223.9L517.8 224.5L518.5 224.5L519.2 225.9L520.0 226.9L520.8 228.0L521.5 228.7L522.2 230.7L523.0 232.4L523.8 233.4L524.5 234.1L525.2 235.3L526.0 236.5L526.8 236.3L527.5 238.3L528.2 239.5L529.0 240.6L529.8 242.0L530.5 242.8L531.2 243.4L532.0 244.2L532.8 245.1L533.5 245.3L534.2 245.9L535.0 246.6L535.8 247.2L536.5 246.6L537.2 246.9L538.0 247.1L538.8 247.7L539.5 247.4L540.2 248.1L541.0 247.3L541.8 247.7L542.5 247.8L543.2 248.2L544.0 248.3L544.8 247.5L545.5 247.7L546.2 248.0L547.0 247.4L547.8 246.9L548.5 247.5L549.2 246.9L550.0 246.5L550.8 245.8L551.5 245.9L552.2 245.0L553.0 245.1L553.8 244.0L554.5 243.6L555.2 243.7L556.0 243.1L556.8 243.3L557.5 242.8L558.2 242.0L559.0 242.1L559.8 241.7L560.5 241.9L561.2 241.1L562.0 241.1L562.8 241.7L563.5 242.9L564.2 244.5L565.0 246.0L565.8 248.6L566.5 251.7L567.2 253.6L568.0 255.4L568.8 257.2L569.5 258.4L570.2 259.0L571.0 259.5L571.8 260.4L572.5 261.9L573.2 262.1L574.0 263.1L574.8 264.0L575.5 264.7L576.2 265.6L577.0 266.6L577.8 267.8L578.5 269.3L579.2 270.9L580.0 272.8L580.8 274.7L581.5 276.8L582.2 278.9L583.0 281.1L583.8 283.3L584.5 285.4L585.2 287.5L586.0 289.5L586.8 291.3L587.5 292.9L588.2 294.4L589.0 295.6L589.8 296.5L590.5 297.1L591.2 297.3L592.0 297.2L592.8 296.5L593.5 295.4L594.2 294.0L595.0 292.2L595.8 290.1L596.5 287.8L597.2 285.2L598.0 282.6L598.8 279.8L599.5 277.0L600.2 274.2L601.0 271.5L601.8 268.8L602.5 266.3L603.2 263.9L604.0 261.3L604.8 258.6L605.5 255.7L606.2 252.8L607.0 249.7L607.8 246.7L608.5 243.7L609.2 240.7L610.0 237.8L610.8 235.1L611.5 232.6L612.2 230.2L613.0 228.1L613.8 226.4L614.5 224.9L615.2 223.4L616.0 222.0L616.8 220.7L617.5 219.4L618.2 218.4L619.0 217.6L619.8 217.1L620.5 216.9L621.2 217.1L622.0 217.5L622.8 218.2L623.5 219.2L624.2 220.3L625.0 221.6L625.8 223.0L626.5 224.4L627.2 225.9L628.0 227.4L628.8 228.9L629.5 230.8L630.2 233.0L631.0 235.7L631.8 238.6L632.5 241.8L633.2 245.1L634.0 248.6L634.8 252.1L635.5 255.6L636.2 259.0L637.0 262.3L637.8 265.4L638.5 268.3L639.2 270.8L640.0 273.0L640.8 274.7L641.5 276.0L642.2 276.7L643.0 276.8L643.8 276.7L644.5 276.6L645.2 276.4L646.0 276.1L646.8 275.7L647.5 275.3L648.2 274.9L649.0 274.3L649.8 273.8L650.5 273.2L651.2 272.6L652.0 271.6L652.8 269.9L653.5 267.7L654.2 265.0L655.0 262.0L655.8 258.8L656.5 255.5L657.2 252.2L658.0 249.0L658.8 246.1L659.5 243.6L660.2 241.4L661.0 239.2L661.8 236.9L662.5 234.6L663.2 232.3L664.0 230.1L664.8 227.9L665.5 225.9L666.2 224.2L667.0 222.6L667.8 221.4L668.5 220.4L669.2 219.9L670.0 219.8L670.8 220.0L671.5 220.4L672.2 221.1L673.0 222.0L673.8 223.0L674.5 224.2L675.2 225.4L676.0 226.7L676.8 228.0L677.5 229.3L678.2 231.0L679.0 233.0L679.8 235.3L680.5 237.8L681.2 240.4L682.0 243.2L682.8 246.1L683.5 249.0L684.2 251.8L685.0 254.7L685.8 257.4L686.5 259.9L687.2 262.3L688.0 264.4L688.8 266.3L689.5 268.3L690.2 270.3L691.0 272.3L691.8 274.4L692.5 276.3L693.2 278.2L694.0 279.9L694.8 281.5L695.5 282.8L696.2 283.9L697.0 284.7L697.8 285.2L698.5 285.4L699.2 285.1L700.0 284.5L700.8 283.6L701.5 282.4L702.2 281.0L703.0 279.3L703.8 277.6L704.5 275.7L705.2 273.7L706.0 271.6L706.8 269.6L707.5 267.6L708.2 265.6L709.0 263.6L709.8 261.3L710.5 258.7L711.2 255.9L712.0 253.0L712.8 249.9L713.5 246.8L714.2 243.7L715.0 240.7L715.8 237.7L716.5 234.9L717.2 232.2L718.0 229.8L718.8 227.7L719.5 226.0L720.2 224.5L721.0 223.0L721.8 221.5L722.5 220.1L723.2 218.8L724.0 217.7L724.8 216.7L725.5 216.0L726.2 215.6L727.0 215.5L727.8 215.7L728.5 216.3L729.2 217.1L730.0 218.1L730.8 219.4L731.5 220.7L732.2 222.1L733.0 223.6L733.8 225.0L734.5 226.4L735.2 228.1L736.0 230.1L736.8 232.3L737.5 234.7L738.2 237.2L739.0 239.8L739.8 242.3L740.5 244.9L741.2 247.3L742.0 249.6L742.8 251.7L743.5 253.6L744.2 255.1L745.0 256.3L745.8 257.2L746.5 257.9L747.2 258.7L748.0 259.4L748.8 260.0L749.5 260.7L750.2 261.2L751.0 261.7L751.8 262.0L752.5 262.3L753.2 262.5L754.0 262.5L754.8 262.4L755.5 261.8L756.2 261.0L757.0 260.0L757.8 258.7L758.5 257.3L759.2 255.7L760.0 254.1L760.8 252.3L761.5 250.6L762.2 248.8L763.0 247.1L763.8 245.6L764.5 244.1L765.2 242.8L766.0 241.6L766.8 240.3L767.5 239.0L768.2 237.7L769.0 236.3L769.8 234.9L770.5 233.5L771.2 232.2L772.0 230.9L772.8 229.7L773.5 228.6L774.2 227.6L775.0 226.7L775.8 226.0L776.5 225.4L777.2 225.1L778.0 224.9L778.8 225.0L779.5 225.4L780.2 226.0L781.0 227.0L781.8 228.2L782.5 229.5L783.2 231.1L784.0 232.7L784.8 234.4L785.5 236.2L786.2 238.0L787.0 239.8L787.8 241.5L788.5 243.2L789.2 245.0L790.0 247.0L790.8 249.2L791.5 251.5L792.2 253.9L793.0 256.4L793.8 259.0L794.5 261.6L795.2 264.2L796.0 266.8L796.8 269.3L797.5 271.9L798.2 274.3L799.0 276.6L799.8 278.8L800.5 280.9L801.2 282.7L802.0 284.4L802.8 285.9L803.5 287.3L804.2 288.8L805.0 290.3L805.8 291.8L806.5 293.2L807.2 294.5L808.0 295.7L808.8 296.8L809.5 297.8L810.2 298.6L811.0 299.1L811.8 299.5L812.5 299.6L813.2 299.5L814.0 299.2L814.8 298.8L815.5 298.2L816.2 297.5L817.0 296.6L817.8 295.7L818.5 294.6L819.2 293.5L820.0 292.3L820.8 291.1L821.5 289.8L822.2 288.5L823.0 287.1L823.8 285.4L824.5 283.2L825.2 280.8L826.0 278.1L826.8 275.2L827.5 272.2L828.2 269.1L829.0 265.9L829.8 262.8L830.5 259.7L831.2 256.8L832.0 254.0L832.8 251.5L833.5 249.2L834.2 247.2L835.0 245.2L835.8 243.1L836.5 241.1L837.2 239.0L838.0 236.9L838.8 234.9L839.5 233.0L840.2 231.3L841.0 229.7L841.8 228.2L842.5 227.0L843.2 226.1L844.0 225.4L844.8 225.0L845.5 224.9L846.2 225.1L847.0 225.6L847.8 226.4L848.5 227.3L849.2 228.4L850.0 229.7L850.8 231.1L851.5 232.6L852.2 234.1L853.0 235.6L853.8 237.2L854.5 238.7L855.2 240.1L856.0 241.5L856.8 242.7L857.5 243.9L858.2 245.3L859.0 246.7L859.8 248.2L860.5 249.8L861.2 251.3L862.0 252.9L862.8 254.4L863.5 255.8L864.2 257.2L865.0 258.5L865.8 259.6L866.5 260.6L867.2 261.4L868.0 262.0L868.8 262.4L869.5 262.5L870.2 262.5L871.0 262.3L871.8 262.0L872.5 261.5L873.2 261.0L874.0 260.4L874.8 259.7L875.5 258.9L876.2 258.1L877.0 257.2L877.8 256.2L878.5 255.3L879.2 254.3L880.0 253.2L880.8 251.8L881.5 250.0L882.2 247.9L883.0 245.5L883.8 243.0L884.5 240.4L885.2 237.6L886.0 234.8L886.8 232.1L887.5 229.4L888.2 226.9L889.0 224.5L889.8 222.4L890.5 220.6L891.2 219.1L892.0 217.5L892.8 216.0L893.5 214.4L894.2 213.0L895.0 211.8L895.8 210.8L896.5 210.1L897.2 209.8L898.0 209.9L898.8 210.3L899.5 211.0L900.2 212.0L901.0 213.3L901.8 214.7L902.5 216.3L903.2 218.0L904.0 219.8L904.8 221.6L905.5 223.5L906.2 225.8L907.0 228.5L907.8 231.7L908.5 235.2L909.2 239.0L910.0 243.0L910.8 247.2L911.5 251.4L912.2 255.6L913.0 259.8L913.8 263.9L914.5 267.9L915.2 271.5L916.0 275.4L916.8 279.7L917.5 284.2L918.2 288.9L919.0 293.6L919.8 298.2L920.5 302.6L921.2 306.7L922.0 310.4L922.8 313.4L923.5 315.8L924.2 317.5L925.0 318.1L925.8 317.9L926.5 317.0L927.2 315.5L928.0 313.5L928.8 311.0L929.5 308.1L930.2 304.9L931.0 301.4L931.8 297.8L932.5 294.1L933.2 290.4L934.0 286.7L934.8 282.2L935.5 277.0L936.2 271.1L937.0 264.8L937.8 258.1L938.5 251.3L939.2 244.4L940.0 237.7L940.8 231.2L941.5 225.2L942.2 219.8L943.0 214.5L943.8 208.8L944.5 202.9L945.2 196.9L946.0 191.2L946.8 185.7L947.5 180.8L948.2 176.5L949.0 173.0L949.8 170.6L950.5 169.4L951.2 169.4L952.0 170.0L952.8 171.2L953.5 172.9L954.2 175.1L955.0 177.6L955.8 180.5L956.5 183.6L957.2 186.9L958.0 190.4L958.8 193.9L959.5 197.6L960.2 202.0L961.0 207.5L961.8 213.8L962.5 220.9L963.2 228.6L964.0 236.5L964.8 244.7L965.5 252.8L966.2 260.7L967.0 268.2L967.8 275.2L968.5 281.7L969.2 288.3L970.0 294.8L970.8 301.3L971.5 307.8L972.2 314.1L973.0 320.3L973.8 326.2L974.5 331.8L975.2 337.2L976.0 342.2L976.8 346.8L977.5 350.8L978.2 354.3L979.0 357.6L979.8 360.8L980.5 364.2L981.2 368.0L982.0 372.5L982.8 378.3L983.3 383.8L977.9 383.8L977.5 379.7L976.8 372.5L976.0 365.5L975.2 358.8L974.5 352.3L973.8 346.2L973.0 340.4L972.2 335.0L971.5 329.9L970.8 324.9L970.0 320.0L969.2 314.9L968.5 309.6L967.8 303.9L967.0 297.8L966.2 291.2L965.5 284.3L964.8 277.3L964.0 270.1L963.2 263.0L962.5 256.0L961.8 249.3L961.0 243.0L960.2 237.2L959.5 232.0L958.8 227.1L958.0 222.1L957.2 217.0L956.5 211.9L955.8 207.1L955.0 202.7L954.2 198.8L953.5 195.5L952.8 193.1L952.0 191.6L951.2 191.2L950.5 192.1L949.8 194.1L949.0 197.0L948.2 200.8L947.5 205.3L946.8 210.3L946.0 215.6L945.2 221.2L944.5 226.8L943.8 232.4L943.0 237.7L942.2 242.6L941.5 247.6L940.8 253.0L940.0 258.8L939.2 264.8L938.5 270.9L937.8 276.9L937.0 282.7L936.2 288.2L935.5 293.2L934.8 297.6L934.0 301.2L933.2 304.2L932.5 307.1L931.8 310.0L931.0 312.7L930.2 315.4L929.5 317.8L928.8 319.9L928.0 321.8L927.2 323.3L926.5 324.5L925.8 325.1L925.0 325.3L924.2 324.7L923.5 323.4L922.8 321.5L922.0 318.9L921.2 316.0L920.5 312.6L919.8 308.9L919.0 305.0L918.2 301.1L917.5 297.0L916.8 293.1L916.0 289.3L915.2 285.8L914.5 282.3L913.8 278.4L913.0 274.2L912.2 269.9L911.5 265.5L910.8 261.1L910.0 256.9L909.2 253.0L908.5 249.4L907.8 246.2L907.0 243.7L906.2 241.7L905.5 239.8L904.8 238.0L904.0 236.3L903.2 234.6L902.5 233.1L901.8 231.7L901.0 230.6L900.2 229.6L899.5 228.9L898.8 228.5L898.0 228.3L897.2 228.6L896.5 229.4L895.8 230.5L895.0 232.0L894.2 233.7L893.5 235.6L892.8 237.6L892.0 239.7L891.2 241.7L890.5 243.7L889.8 246.1L889.0 248.9L888.2 251.9L887.5 255.3L886.8 258.7L886.0 262.3L885.2 265.9L884.5 269.4L883.8 272.7L883.0 275.9L882.2 278.7L881.5 281.2L880.8 283.2L880.0 284.7L879.2 285.6L878.5 286.4L877.8 287.1L877.0 287.8L876.2 288.5L875.5 289.1L874.8 289.7L874.0 290.1L873.2 290.6L872.5 291.0L871.8 291.2L871.0 291.5L870.2 291.6L869.5 291.6L868.8 291.6L868.0 291.3L867.2 290.9L866.5 290.4L865.8 289.8L865.0 289.0L864.2 288.2L863.5 287.3L862.8 286.3L862.0 285.2L861.2 284.1L860.5 282.9L859.8 281.7L859.0 280.5L858.2 279.3L857.5 278.1L856.8 276.9L856.0 275.6L855.2 273.9L854.5 272.0L853.8 269.8L853.0 267.5L852.2 265.1L851.5 262.7L850.8 260.3L850.0 258.0L849.2 255.9L848.5 254.0L847.8 252.3L847.0 251.0L846.2 250.2L845.5 249.7L844.8 249.8L844.0 250.0L843.2 250.5L842.5 251.1L841.8 251.9L841.0 252.8L840.2 253.9L839.5 255.0L838.8 256.3L838.0 257.6L837.2 259.0L836.5 260.4L835.8 261.8L835.0 263.3L834.2 264.7L833.5 266.1L832.8 267.7L832.0 269.6L831.2 271.8L830.5 274.0L829.8 276.4L829.0 278.9L828.2 281.4L827.5 283.9L826.8 286.3L826.0 288.6L825.2 290.8L824.5 292.7L823.8 294.5L823.0 295.9L822.2 297.0L821.5 298.1L820.8 299.1L820.0 300.1L819.2 301.0L818.5 301.9L817.8 302.8L817.0 303.5L816.2 304.1L815.5 304.6L814.8 305.0L814.0 305.3L813.2 305.3L812.5 305.3L811.8 305.2L811.0 305.0L810.2 304.7L809.5 304.4L808.8 304.0L808.0 303.6L807.2 303.2L806.5 302.7L805.8 302.2L805.0 301.6L804.2 301.0L803.5 300.4L802.8 299.8L802.0 299.2L801.2 298.4L800.5 297.4L799.8 296.4L799.0 295.1L798.2 293.8L797.5 292.3L796.8 290.8L796.0 289.2L795.2 287.5L794.5 285.8L793.8 284.0L793.0 282.2L792.2 280.4L791.5 278.6L790.8 276.9L790.0 275.1L789.2 273.4L788.5 271.7L787.8 270.1L787.0 268.2L786.2 266.1L785.5 263.9L784.8 261.6L784.0 259.3L783.2 257.1L782.5 255.0L781.8 253.1L781.0 251.4L780.2 250.0L779.5 249.0L778.8 248.4L778.0 248.3L777.2 248.5L776.5 249.0L775.8 249.8L775.0 250.7L774.2 251.7L773.5 252.9L772.8 254.1L772.0 255.4L771.2 256.6L770.5 257.9L769.8 259.4L769.0 261.1L768.2 263.0L767.5 265.1L766.8 267.2L766.0 269.4L765.2 271.7L764.5 273.9L763.8 276.1L763.0 278.2L762.2 280.1L761.5 281.9L760.8 283.5L760.0 284.9L759.2 286.0L758.5 287.1L757.8 288.3L757.0 289.3L756.2 290.4L755.5 291.3L754.8 292.2L754.0 292.9L753.2 293.4L752.5 293.8L751.8 293.9L751.0 293.8L750.2 293.5L749.5 292.9L748.8 292.3L748.0 291.5L747.2 290.6L746.5 289.6L745.8 288.6L745.0 287.6L744.2 286.4L743.5 285.0L742.8 283.4L742.0 281.6L741.2 279.8L740.5 277.8L739.8 275.7L739.0 273.5L738.2 271.4L737.5 269.2L736.8 267.0L736.0 264.9L735.2 262.8L734.5 260.9L733.8 259.0L733.0 257.0L732.2 254.8L731.5 252.5L730.8 250.2L730.0 247.9L729.2 245.7L728.5 243.6L727.8 241.8L727.0 240.3L726.2 239.2L725.5 238.5L724.8 238.3L724.0 238.5L723.2 238.9L722.5 239.6L721.8 240.4L721.0 241.4L720.2 242.5L719.5 243.6L718.8 244.8L718.0 246.0L717.2 247.4L716.5 249.2L715.8 251.2L715.0 253.5L714.2 255.9L713.5 258.3L712.8 260.9L712.0 263.4L711.2 265.9L710.5 268.2L709.8 270.4L709.0 272.4L708.2 274.1L707.5 275.8L706.8 277.5L706.0 279.3L705.2 281.0L704.5 282.7L703.8 284.3L703.0 285.9L702.2 287.3L701.5 288.5L700.8 289.5L700.0 290.3L699.2 290.8L698.5 291.1L697.8 291.0L697.0 290.7L696.2 290.1L695.5 289.4L694.8 288.5L694.0 287.4L693.2 286.2L692.5 284.9L691.8 283.5L691.0 282.0L690.2 280.5L689.5 279.0L688.8 277.5L688.0 276.0L687.2 274.2L686.5 272.0L685.8 269.5L685.0 266.9L684.2 264.3L683.5 261.6L682.8 259.0L682.0 256.5L681.2 254.4L680.5 252.5L679.8 251.0L679.0 249.7L678.2 248.5L677.5 247.2L676.8 246.1L676.0 245.0L675.2 244.1L674.5 243.4L673.8 242.9L673.0 242.6L672.2 242.6L671.5 243.1L670.8 243.8L670.0 244.9L669.2 246.1L668.5 247.6L667.8 249.1L667.0 250.8L666.2 252.5L665.5 254.1L664.8 255.9L664.0 258.0L663.2 260.5L662.5 263.1L661.8 266.0L661.0 269.0L660.2 272.1L659.5 275.2L658.8 278.3L658.0 281.3L657.2 284.2L656.5 286.9L655.8 289.5L655.0 291.7L654.2 293.7L653.5 295.4L652.8 297.2L652.0 299.0L651.2 300.7L650.5 302.4L649.8 304.0L649.0 305.4L648.2 306.6L647.5 307.6L646.8 308.3L646.0 308.7L645.2 308.7L644.5 308.2L643.8 307.3L643.0 305.9L642.2 304.2L641.5 302.3L640.8 300.1L640.0 297.7L639.2 295.3L638.5 292.9L637.8 290.5L637.0 288.1L636.2 285.6L635.5 282.7L634.8 279.5L634.0 276.1L633.2 272.6L632.5 269.1L631.8 265.6L631.0 262.4L630.2 259.4L629.5 256.8L628.8 254.6L628.0 253.0L627.2 251.3L626.5 249.7L625.8 248.2L625.0 246.7L624.2 245.3L623.5 244.1L622.8 243.1L622.0 242.2L621.2 241.6L620.5 241.2L619.8 241.2L619.0 241.4L618.2 242.0L617.5 242.9L616.8 244.0L616.0 245.2L615.2 246.5L614.5 247.8L613.8 249.0L613.0 250.4L612.2 252.0L611.5 253.6L610.8 255.4L610.0 257.3L609.2 259.3L608.5 261.3L607.8 263.4L607.0 265.4L606.2 267.5L605.5 269.6L604.8 271.7L604.0 273.7L603.2 275.6L602.5 277.5L601.8 279.6L601.0 281.8L600.2 284.1L599.5 286.6L598.8 289.0L598.0 291.4L597.2 293.8L596.5 296.1L595.8 298.2L595.0 300.0L594.2 301.7L593.5 303.0L592.8 304.0L592.0 304.6L591.2 304.8L590.5 304.6L589.8 304.1L589.0 303.4L588.2 302.6L587.5 301.5L586.8 300.2L586.0 298.8L585.2 297.3L584.5 295.7L583.8 294.1L583.0 292.3L582.2 290.6L581.5 288.8L580.8 287.1L580.0 285.4L579.2 283.7L578.5 282.2L577.8 280.8L577.0 279.5L576.2 278.1L575.5 276.8L574.8 275.5L574.0 273.8L573.2 272.4L572.5 271.2L571.8 270.2L571.0 268.7L570.2 267.6L569.5 266.7L568.8 266.0L568.0 265.9L567.2 264.9L566.5 265.1L565.8 264.6L565.0 263.9L564.2 263.9L563.5 262.6L562.8 262.6L562.0 262.7L561.2 262.5L560.5 261.3L559.8 261.9L559.0 262.0L558.2 261.9L557.5 263.0L556.8 264.0L556.0 264.7L555.2 266.8L554.5 267.6L553.8 268.7L553.0 269.2L552.2 270.5L551.5 270.9L550.8 272.3L550.0 272.1L549.2 272.6L548.5 273.0L547.8 273.9L547.0 275.2L546.2 274.9L545.5 275.4L544.8 276.1L544.0 276.0L543.2 276.8L542.5 276.1L541.8 276.6L541.0 276.3L540.2 276.2L539.5 276.2L538.8 276.2L538.0 276.1L537.2 276.0L536.5 276.0L535.8 275.4L535.0 275.6L534.2 275.1L533.5 275.2L532.8 274.2L532.0 274.2L531.2 274.3L530.5 273.4L529.8 272.5L529.0 271.1L528.2 269.6L527.5 268.9L526.8 267.2L526.0 266.0L525.2 265.1L524.5 264.2L523.8 263.3L523.0 261.3L522.2 260.4L521.5 258.7L520.8 257.1L520.0 255.6L519.2 253.7L518.5 253.3L517.8 251.7L517.0 251.1L516.2 250.5L515.5 249.9L514.8 249.8L514.0 250.6L513.2 250.8L512.5 250.4L511.8 251.5L511.0 251.6L510.2 252.7L509.5 254.2L508.8 254.3L508.0 255.3L507.2 256.9L506.5 257.1L505.8 258.1L505.0 259.9L504.2 260.3L503.5 262.1L502.8 262.7L502.0 264.5L501.2 265.2L500.5 266.3L499.8 266.9L499.0 268.9L498.2 268.6L497.5 270.0L496.8 271.1L496.0 271.4L495.2 272.4L494.5 274.1L493.8 274.1L493.0 276.1L492.2 276.8L491.5 277.4L490.8 278.2L490.0 278.9L489.2 279.8L488.5 280.1L487.8 280.8L487.0 279.7L486.2 279.9L485.5 280.2L484.8 279.1L484.0 278.6L483.2 278.5L482.5 277.5L481.8 276.9L481.0 275.8L480.2 274.3L479.5 274.2L478.8 273.5L478.0 272.4L477.2 271.7L476.5 270.7L475.8 270.3L475.0 269.6L474.2 269.7L473.5 269.7L472.8 268.8L472.0 268.7L471.2 269.1L470.5 268.5L469.8 267.7L469.0 268.1L468.2 268.3L467.5 267.8L466.8 267.1L466.0 267.1L465.2 267.6L464.5 266.3L463.8 266.6L463.0 265.5L462.2 265.3L461.5 265.5L460.8 265.1L460.0 265.7L459.2 265.4L458.5 265.4L457.8 265.4L457.0 264.5L456.2 265.1L455.5 266.5L454.8 267.1L454.0 267.1L453.2 268.4L452.5 269.2L451.8 270.1L451.0 272.2L450.2 272.0L449.5 272.7L448.8 274.2L448.0 274.8L447.2 276.1L446.5 276.2L445.8 278.1L445.0 278.4L444.2 279.5L443.5 278.9L442.8 280.0L442.0 279.7L441.2 280.1L440.5 279.7L439.8 278.8L439.0 279.4L438.2 279.1L437.5 278.9L436.8 277.9L436.0 278.2L435.2 277.5L434.5 276.9L433.8 276.9L433.0 276.4L432.2 276.4L431.5 275.3L430.8 275.2L430.0 274.6L429.2 273.5L428.5 273.2L427.8 272.3L427.0 272.0L426.2 271.1L425.5 270.1L424.8 269.6L424.0 269.6L423.2 267.8L422.5 267.9L421.8 266.7L421.0 266.0L420.2 265.2L419.5 265.1L418.8 264.4L418.0 263.6L417.2 262.8L416.5 262.3L415.8 262.2L415.0 262.4L414.2 262.3L413.5 262.0L412.8 262.8L412.0 261.9L411.2 262.8L410.5 262.7L409.8 262.9L409.0 263.0L408.2 262.9L407.5 262.9L406.8 263.2L406.0 264.2L405.2 263.9L404.5 264.6L403.8 265.1L403.0 264.5L402.2 265.5L401.5 265.6L400.8 265.9L400.0 266.9L399.2 267.8L398.5 269.0L397.8 270.0L397.0 270.5L396.2 271.1L395.5 272.3L394.8 272.5L394.0 272.9L393.2 273.2L392.5 273.6L391.8 274.3L391.0 273.6L390.2 274.5L389.5 274.7L388.8 274.9L388.0 274.5L387.2 275.2L386.5 274.8L385.8 274.8L385.0 273.7L384.2 273.6L383.5 272.1L382.8 271.4L382.0 270.3L381.2 269.4L380.5 268.9L379.8 268.5L379.0 269.1L378.2 267.8L377.5 267.5L376.8 267.2L376.0 267.4L375.2 266.9L374.5 267.3L373.8 266.6L373.0 266.1L372.2 266.5L371.5 266.0L370.8 265.2L370.0 265.1L369.2 264.6L368.5 264.5L367.8 264.6L367.0 263.7L366.2 263.1L365.5 263.2L364.8 262.9L364.0 262.3L363.2 262.7L362.5 262.2L361.8 262.2L361.0 262.2L360.2 262.4L359.5 262.6L358.8 262.3L358.0 263.7L357.2 263.7L356.5 263.7L355.8 263.9L355.0 264.6L354.2 264.2L353.5 264.2L352.8 265.0L352.0 264.4L351.2 264.0L350.5 264.6L349.8 264.0L349.0 264.3L348.2 264.2L347.5 264.0L346.8 263.4L346.0 263.8L345.2 263.8L344.5 263.8L343.8 263.1L343.0 263.7L342.2 263.8L341.5 263.7L340.8 264.6L340.0 265.3L339.2 265.7L338.5 267.0L337.8 268.6L337.0 268.9L336.2 270.3L335.5 271.6L334.8 272.4L334.0 273.1L333.2 274.5L332.5 274.5L331.8 275.1L331.0 276.4L330.2 276.9L329.5 277.8L328.8 278.8L328.0 279.4L327.2 279.6L326.5 279.9L325.8 280.8L325.0 281.9L324.2 281.4L323.5 282.0L322.8 282.3L322.0 282.6L321.2 283.3L320.5 283.7L319.8 283.5L319.0 283.4L318.2 284.1L317.5 284.8L316.8 284.5L316.0 285.2L315.2 284.5L314.5 284.7L313.8 285.9L313.0 285.5L312.2 285.5L311.5 286.1L310.8 285.4L310.0 286.5L309.2 287.1L308.5 286.6L307.8 287.5L307.0 287.1L306.2 288.1L305.5 287.6L304.8 287.9L304.0 287.8L303.2 287.9L302.5 288.5L301.8 287.9L301.0 287.1L300.2 287.5L299.5 286.2L298.8 285.6L298.0 284.9L297.2 283.0L296.5 283.9L295.8 282.2L295.0 280.6L294.2 280.7L293.5 280.0L292.8 279.0L292.0 278.2L291.2 277.8L290.5 277.2L289.8 276.7L289.0 274.8L288.2 274.8L287.5 274.1L286.8 273.4L286.0 272.8L285.2 272.4L284.5 272.0L283.8 272.2L283.0 271.5L282.2 272.0L281.5 271.6L280.8 271.3L280.0 271.5L279.2 271.2L278.5 270.2L277.8 271.4L277.0 270.6L276.2 270.1L275.5 270.6L274.8 270.2L274.0 270.5L273.2 270.0L272.5 270.3L271.8 269.2L271.0 269.5L270.2 269.4L269.5 269.8L268.8 269.3L268.0 269.3L267.2 269.0L266.5 269.0L265.8 269.0L265.0 269.2L264.2 269.2L263.5 269.4L262.8 270.0L262.0 269.3L261.2 268.9L260.5 268.9L259.8 268.4L259.0 268.4L258.2 268.6L257.5 268.4L256.8 267.7L256.0 267.4L255.2 267.2L254.5 266.6L253.8 266.6L253.0 266.5L252.2 265.7L251.5 266.3L250.8 265.1L250.0 264.7L249.2 265.3L248.5 264.8L247.8 265.8L247.0 265.0L246.2 265.5L245.5 265.3L244.8 265.6L244.0 265.5L243.2 265.5L242.5 266.3L241.8 266.5L241.0 266.9L240.2 266.7L239.5 267.8L238.8 268.3L238.0 266.5L237.2 267.3L236.5 268.0L235.8 266.9L235.0 267.8L234.2 267.1L233.5 267.4L232.8 267.5L232.0 267.0L231.2 266.3L230.5 266.2L229.8 265.9L229.0 266.5L228.2 266.3L227.5 265.9L226.8 266.3L226.0 266.0L225.2 266.6L224.5 266.4L223.8 267.3L223.0 267.7L222.2 268.5L221.5 268.9L220.8 269.4L220.0 270.1L219.2 270.2L218.5 271.0L217.8 270.9L217.0 271.7L216.2 272.7L215.5 272.7L214.8 272.1L214.0 272.5L213.2 272.9L212.5 273.7L211.8 273.7L211.0 274.8L210.2 274.6L209.5 274.4L208.8 275.0L208.0 274.9L207.2 275.9L206.5 275.7L205.8 275.7L205.0 276.6L204.2 276.4L203.5 277.0L202.8 277.5L202.0 276.9L201.2 277.0L200.5 276.9L199.8 277.4L199.0 276.8L198.2 276.7L197.5 277.4L196.8 277.0L196.0 277.3L195.2 277.6L194.5 277.2L193.8 276.8L193.0 275.5L192.2 276.0L191.5 275.1L190.8 275.4L190.0 273.0L189.2 273.2L188.5 273.2L187.8 272.2L187.0 272.3L186.2 272.3L185.5 272.0L184.8 271.6L184.0 270.5L183.2 271.4L182.5 269.4L181.8 270.4L181.0 269.7L180.2 269.1L179.5 268.1L178.8 268.4L178.0 268.6L177.2 268.1L176.5 267.5L175.8 268.2L175.0 268.2L174.2 267.8L173.5 268.2L172.8 268.2L172.0 267.7L171.2 267.7L170.5 268.3L169.8 268.4L169.0 267.9L168.2 268.0L167.5 268.4L166.8 269.1L166.0 268.5L165.2 268.6L164.5 269.1L163.8 268.7L163.0 268.6L162.2 270.1L161.5 269.8L160.8 269.9L160.0 269.6L159.2 269.9L158.5 270.0L157.8 270.7L157.0 270.6L156.2 270.7L155.5 271.0L154.8 271.3L154.0 270.6L153.2 270.5L152.5 270.4L151.8 269.8L151.0 269.4L150.2 268.5L149.5 267.6L148.8 266.5L148.0 266.8L147.2 265.5L146.5 265.6L145.8 265.5L145.0 265.3L144.2 266.0L143.5 265.7L142.8 265.1L142.0 266.0L141.2 266.5L140.5 267.5L139.8 267.6L139.0 266.7L138.2 267.5L137.5 267.6L136.8 268.2L136.0 267.9L135.2 267.6L134.5 267.1L133.8 268.2L133.0 268.4L132.2 268.1L131.5 268.9L130.8 268.0L130.0 269.0L129.2 268.9L128.5 269.4L127.8 269.3L127.0 269.1L126.2 269.6L125.5 269.1L124.8 270.5L124.0 270.1L123.2 270.1L122.5 270.5L121.8 270.7L121.0 270.9L120.2 271.1L119.5 271.8L118.8 272.3L118.0 272.2L117.2 272.8L116.5 272.5L115.8 273.7L115.0 273.0L114.2 273.5L113.5 273.8L112.8 274.8L112.0 275.7L111.2 276.0L110.5 276.1L109.8 276.9L109.0 277.0L108.2 277.3L107.5 277.3L106.8 277.7L106.0 278.4L105.2 279.1L104.5 279.3L103.8 279.6L103.0 279.7L102.2 280.1L101.5 281.0L100.8 280.8L100.0 282.5L99.2 282.0L98.5 282.6L97.8 282.7L97.0 283.6L96.2 283.6L95.5 283.4L94.8 283.6L94.0 283.9L93.2 283.0L92.5 282.9L91.8 282.3L91.0 281.1L90.2 280.6L89.5 280.7L88.8 278.9L88.0 278.3L87.2 278.2L86.5 277.2L85.8 276.3L85.0 276.1L84.2 275.7L83.5 274.8L82.8 275.5L82.0 275.5L81.2 275.3L80.5 274.8L79.8 274.8L79.0 274.9L78.2 273.9L77.5 273.9L76.8 274.1L76.0 273.5L75.2 273.5L74.5 273.2L73.8 272.4L73.0 272.9L72.2 272.9L71.5 272.5L70.8 272.2L70.0 271.8L69.2 271.2L68.5 270.6L67.8 270.0L67.0 269.4L66.2 269.1L65.5 269.2Z" fill="#d62a2c" stroke="#d62a2c" stroke-width="0.8" stroke-linejoin="round"/>
<path d="M1076.5 106V137M1075.5 137V383" stroke="#c8262a" stroke-width="1.1"/></g>

<path d="M569.0 106V384" stroke="#fff" stroke-width="2.4" stroke-dasharray="10.2 1.8" stroke-dashoffset="6"/>
<path d="M1241.9 106V384" stroke="#e2e2e2" stroke-width="2.4" stroke-dasharray="10.2 1.8" stroke-dashoffset="6"/>
<rect x="571.0" y="364" width="122" height="17" fill="#000"/>
<text x="573.2" y="376.8" font-size="13" fill="#f0f0f0" textLength="116.0" lengthAdjust="spacing">T1=-2s,89ms,725µs</text>
<text x="1216.0" y="376.8" font-size="13" fill="#f0f0f0" textLength="22.1" lengthAdjust="spacing">T2=</text>
<rect x="840.5" y="117" width="128.8" height="35" fill="#000"/>
<text x="846.5" y="136.3" font-size="13" fill="#f0f0f0" textLength="22.1" lengthAdjust="spacing">ΔT=</text>
<text x="872.6" y="126.2" font-size="13" fill="#f0f0f0" textLength="89.8" lengthAdjust="spacing">2s,89ms,725µs</text>
<text x="872.6" y="146.2" font-size="13" fill="#f0f0f0" textLength="74.6" lengthAdjust="spacing">0.478532 Hz</text>
<g shape-rendering="crispEdges"><path d="M115.5 106V384" stroke="#fff" stroke-opacity="0.078"/>
<path d="M195.5 106V384" stroke="#fff" stroke-opacity="0.078"/>
<path d="M276.5 106V384" stroke="#fff" stroke-opacity="0.115"/>
<path d="M356.5 106V384" stroke="#fff" stroke-opacity="0.078"/>
<path d="M437.5 106V384" stroke="#fff" stroke-opacity="0.078"/>
<path d="M517.5 106V384" stroke="#fff" stroke-opacity="0.078"/>
<path d="M598.5 106V384" stroke="#fff" stroke-opacity="0.115"/>
<path d="M678.5 106V384" stroke="#fff" stroke-opacity="0.078"/>
<path d="M759.5 106V384" stroke="#fff" stroke-opacity="0.078"/>
<path d="M839.5 106V384" stroke="#fff" stroke-opacity="0.078"/>
<path d="M920.5 106V384" stroke="#fff" stroke-opacity="0.115"/>
<path d="M1000.5 106V384" stroke="#fff" stroke-opacity="0.078"/>
<path d="M1081.5 106V384" stroke="#fff" stroke-opacity="0.078"/>
<path d="M1161.5 106V384" stroke="#fff" stroke-opacity="0.078"/>
<path d="M1242.5 106V384" stroke="#fff" stroke-opacity="0.115"/>
<path d="M66 174.5H1277" stroke="#fff" stroke-opacity="0.072"/>
<path d="M66 260.5H1277" stroke="#fff" stroke-opacity="0.072"/>
<path d="M66 347.5H1277" stroke="#fff" stroke-opacity="0.072"/>
<path d="M66 122.5H1277" stroke="#fff" stroke-opacity="0.058"/>
<path d="M66 140.5H1277" stroke="#fff" stroke-opacity="0.058"/>
<path d="M66 157.5H1277" stroke="#fff" stroke-opacity="0.058"/>
<path d="M66 192.5H1277" stroke="#fff" stroke-opacity="0.058"/>
<path d="M66 209.5H1277" stroke="#fff" stroke-opacity="0.058"/>
<path d="M66 226.5H1277" stroke="#fff" stroke-opacity="0.058"/>
<path d="M66 244.5H1277" stroke="#fff" stroke-opacity="0.058"/>
<path d="M66 278.5H1277" stroke="#fff" stroke-opacity="0.058"/>
<path d="M66 295.5H1277" stroke="#fff" stroke-opacity="0.058"/>
<path d="M66 313.5H1277" stroke="#fff" stroke-opacity="0.058"/>
<path d="M66 330.5H1277" stroke="#fff" stroke-opacity="0.058"/>
<path d="M66 365.5H1277" stroke="#fff" stroke-opacity="0.058"/>
<path d="M66 382.5H1277" stroke="#fff" stroke-opacity="0.058"/></g>
<g><path d="M65.5 106V384.5H1277" stroke="#969696" fill="none"/>
<text x="266.6" y="400.8" font-size="13" fill="#d8d8d8" textLength="17.8" lengthAdjust="spacing">-3s</text>
<text x="588.6" y="400.8" font-size="13" fill="#d8d8d8" textLength="17.8" lengthAdjust="spacing">-2s</text>
<text x="910.6" y="400.8" font-size="13" fill="#d8d8d8" textLength="17.8" lengthAdjust="spacing">-1s</text>
<text x="1237.8" y="400.8" font-size="13" fill="#d8d8d8">0</text>
<text x="45.1" y="180.2" font-size="13" fill="#d8d8d8" textLength="14.9" lengthAdjust="spacing">10</text>
<text x="52.6" y="266.2" font-size="13" fill="#d8d8d8">0</text>
<text x="40.9" y="353.2" font-size="13" fill="#d8d8d8" textLength="19.1" lengthAdjust="spacing">-10</text>
<text x="-11.6" y="245.5" font-size="13" fill="#d8d8d8" textLength="92.5" lengthAdjust="spacing" transform="rotate(-90 34.6 245.5)">counts (x1e-09)</text>
<text x="603.4" y="96.2" font-size="13" fill="#d8d8d8" textLength="136.1" lengthAdjust="spacing">H1:LSC-DARM_IN1_DQ</text></g>
</g>
<g id="plot2">
<clipPath id="c1"><rect x="1356" y="106" width="1184" height="278"/></clipPath>
<g clip-path="url(#c1)"><path d="M1355.5 251.2L1430.0 251.2L1431.2 252.5L1518.8 252.5L1520.0 251.2L1560.0 251.2L1580.0 250.0L1595.0 248.2L1610.0 247.0L1625.0 246.0L1647.5 245.2L1745.0 245.2L1772.5 246.2L1787.5 247.2L1802.5 248.2L1812.5 249.5L1825.0 250.8L1837.5 252.0L1850.0 252.8L1872.5 253.8L1919.8 254.2L1960.0 255.2L2007.5 255.2L2040.0 254.0L2070.0 252.0L2110.0 248.0L2180.0 247.5L2202.5 246.2L2222.5 245.5L2242.5 245.5L2251.2 246.5L2255.0 250.0L2257.5 262.5L2260.0 285.0L2262.0 305.0L2264.5 311.2L2266.2 300.0L2267.5 247.5L2268.8 160.0L2269.5 135.0L2270.5 136.2L2270.8 370.0L2271.0 347.5L2272.5 342.5L2275.5 338.8L2278.8 345.0L2286.2 345.0L2286.5 122.0L2287.0 135.0L2288.8 135.0L2290.0 180.0L2291.2 272.5L2291.5 345.0L2301.2 345.0L2302.5 337.5L2304.2 336.2L2305.5 345.0L2369.2 345.0L2369.5 319.2L2369.8 352.5L2370.0 345.0L2384.2 345.0L2384.5 341.2L2384.8 347.5L2385.0 345.0L2514.2 345.0L2514.5 341.2L2514.8 347.5L2515.0 345.0L2538.8 345.0" stroke="#c9dc3e" stroke-width="1.1" fill="none" stroke-linejoin="round" /></g>

<path d="M1847.3 106V384" stroke="#fff" stroke-width="2.4" stroke-dasharray="10.2 1.8" stroke-dashoffset="6"/>
<path d="M2504.9 106V384" stroke="#e2e2e2" stroke-width="2.4" stroke-dasharray="10.2 1.8" stroke-dashoffset="6"/>
<rect x="1849.3" y="364" width="122" height="17" fill="#000"/>
<text x="1851.5" y="376.8" font-size="13" fill="#f0f0f0" textLength="116.0" lengthAdjust="spacing">T1=-2s,89ms,725µs</text>
<text x="2479.0" y="376.8" font-size="13" fill="#f0f0f0" textLength="22.1" lengthAdjust="spacing">T2=</text>
<rect x="2111.2" y="117" width="128.8" height="35" fill="#000"/>
<text x="2117.2" y="136.3" font-size="13" fill="#f0f0f0" textLength="22.1" lengthAdjust="spacing">ΔT=</text>
<text x="2143.3" y="126.2" font-size="13" fill="#f0f0f0" textLength="89.8" lengthAdjust="spacing">2s,89ms,725µs</text>
<text x="2143.3" y="146.2" font-size="13" fill="#f0f0f0" textLength="74.6" lengthAdjust="spacing">0.478532 Hz</text>
<g shape-rendering="crispEdges"><path d="M1403.5 106V384" stroke="#fff" stroke-opacity="0.078"/>
<path d="M1482.5 106V384" stroke="#fff" stroke-opacity="0.078"/>
<path d="M1561.5 106V384" stroke="#fff" stroke-opacity="0.115"/>
<path d="M1639.5 106V384" stroke="#fff" stroke-opacity="0.078"/>
<path d="M1718.5 106V384" stroke="#fff" stroke-opacity="0.078"/>
<path d="M1797.5 106V384" stroke="#fff" stroke-opacity="0.078"/>
<path d="M1875.5 106V384" stroke="#fff" stroke-opacity="0.115"/>
<path d="M1954.5 106V384" stroke="#fff" stroke-opacity="0.078"/>
<path d="M2033.5 106V384" stroke="#fff" stroke-opacity="0.078"/>
<path d="M2111.5 106V384" stroke="#fff" stroke-opacity="0.078"/>
<path d="M2190.5 106V384" stroke="#fff" stroke-opacity="0.115"/>
<path d="M2269.5 106V384" stroke="#fff" stroke-opacity="0.078"/>
<path d="M2347.5 106V384" stroke="#fff" stroke-opacity="0.078"/>
<path d="M2426.5 106V384" stroke="#fff" stroke-opacity="0.078"/>
<path d="M2505.5 106V384" stroke="#fff" stroke-opacity="0.115"/>
<path d="M1356 121.5H2540" stroke="#fff" stroke-opacity="0.072"/>
<path d="M1356 153.5H2540" stroke="#fff" stroke-opacity="0.072"/>
<path d="M1356 185.5H2540" stroke="#fff" stroke-opacity="0.072"/>
<path d="M1356 217.5H2540" stroke="#fff" stroke-opacity="0.072"/>
<path d="M1356 250.5H2540" stroke="#fff" stroke-opacity="0.072"/>
<path d="M1356 282.5H2540" stroke="#fff" stroke-opacity="0.072"/>
<path d="M1356 314.5H2540" stroke="#fff" stroke-opacity="0.072"/>
<path d="M1356 346.5H2540" stroke="#fff" stroke-opacity="0.072"/>
<path d="M1356 378.5H2540" stroke="#fff" stroke-opacity="0.072"/></g>
<g><path d="M1355.5 106V384.5H2540" stroke="#969696" fill="none"/>
<text x="1551.6" y="400.8" font-size="13" fill="#d8d8d8" textLength="17.8" lengthAdjust="spacing">-3s</text>
<text x="1866.3" y="400.8" font-size="13" fill="#d8d8d8" textLength="17.8" lengthAdjust="spacing">-2s</text>
<text x="2180.9" y="400.8" font-size="13" fill="#d8d8d8" textLength="17.8" lengthAdjust="spacing">-1s</text>
<text x="2500.8" y="400.8" font-size="13" fill="#d8d8d8">0</text>
<text x="1305.4" y="126.2" font-size="13" fill="#d8d8d8" textLength="44.6" lengthAdjust="spacing">140000</text>
<text x="1305.4" y="158.2" font-size="13" fill="#d8d8d8" textLength="44.6" lengthAdjust="spacing">120000</text>
<text x="1305.4" y="190.2" font-size="13" fill="#d8d8d8" textLength="44.6" lengthAdjust="spacing">100000</text>
<text x="1312.8" y="222.2" font-size="13" fill="#d8d8d8" textLength="37.2" lengthAdjust="spacing">80000</text>
<text x="1312.8" y="255.2" font-size="13" fill="#d8d8d8" textLength="37.2" lengthAdjust="spacing">60000</text>
<text x="1312.8" y="287.2" font-size="13" fill="#d8d8d8" textLength="37.2" lengthAdjust="spacing">40000</text>
<text x="1312.8" y="319.2" font-size="13" fill="#d8d8d8" textLength="37.2" lengthAdjust="spacing">20000</text>
<text x="1342.6" y="351.2" font-size="13" fill="#d8d8d8">0</text>
<text x="1308.6" y="383.2" font-size="13" fill="#d8d8d8" textLength="41.4" lengthAdjust="spacing">-20000</text>
<text x="1277.2" y="245.5" font-size="13" fill="#d8d8d8" textLength="40.8" lengthAdjust="spacing" transform="rotate(-90 1297.6 245.5)">counts</text>
<text x="1846.4" y="96.2" font-size="13" fill="#d8d8d8" textLength="203.2" lengthAdjust="spacing">H1:ASC-AS_A_DC_NSUM_OUT_DQ</text></g>
</g>
<g id="plot3">
<clipPath id="c2"><rect x="60" y="412" width="1217" height="279"/></clipPath>
<g clip-path="url(#c2)"><path d="M59.5 548.2L997.8 548.2L1026.7 545.3L1053.3 540.2L1071.1 537.5L1086.7 536.4L1102.2 537.5L1120.0 541.5L1137.8 546.4L1151.1 550.9L1161.8 555.3L1162.2 533.1L1163.1 427.5L1164.0 499.8L1165.6 528.6L1167.8 538.6L1171.1 538.6L1176.7 536.0L1182.2 537.1L1193.3 539.8L1204.4 541.5L1226.7 542.0L1240.0 542.4L1255.6 544.2L1276.9 547.3" stroke="#17877b" stroke-width="1.0" fill="none" stroke-linejoin="round" />
<path d="M59.5 548.6L997.8 548.5L1026.7 545.7L1053.3 540.5L1071.1 537.9L1086.7 536.8L1102.2 537.9L1120.0 541.9L1137.8 546.8L1151.1 551.2L1161.8 555.7L1162.2 533.4L1163.1 427.9L1164.0 500.1L1165.6 529.0L1167.8 539.0L1171.1 539.0L1176.7 536.3L1182.2 537.4L1193.3 540.1L1204.4 541.9L1226.7 542.3L1240.0 542.8L1255.6 544.5L1276.9 547.7" stroke="#6c5b8b" stroke-width="1.0" fill="none" stroke-linejoin="round" />
<path d="M59.5 548.8L997.8 549.1L1026.7 552.5L1053.3 557.6L1071.1 560.2L1086.7 561.1L1102.2 560.2L1120.0 556.9L1137.8 551.4L1151.1 546.9L1161.8 542.5L1162.7 578.0L1163.3 675.8L1164.0 600.2L1165.6 569.1L1167.8 559.1L1170.0 558.0L1174.4 560.7L1182.2 560.7L1193.3 558.0L1204.4 556.2L1226.7 555.4L1240.0 554.9L1255.6 553.1L1276.9 550.5" stroke="#f0b563" stroke-width="1.0" fill="none" stroke-linejoin="round" />
<path d="M59.5 548.4L997.8 548.8L1026.7 552.1L1053.3 557.2L1071.1 559.9L1086.7 560.8L1102.2 559.9L1120.0 556.6L1137.8 551.0L1151.1 546.6L1161.8 542.1L1162.7 577.7L1163.3 675.5L1164.0 599.9L1165.6 568.8L1167.8 558.8L1170.0 557.7L1174.4 560.3L1182.2 560.3L1193.3 557.7L1204.4 555.9L1226.7 555.0L1240.0 554.6L1255.6 552.8L1276.9 550.1" stroke="#cf8676" stroke-width="1.0" fill="none" stroke-linejoin="round" /></g>
<rect x="69.5" y="422.5" width="282" height="112" fill="#161616" fill-opacity="0.8" stroke="#383838"/>
<rect x="78" y="431" width="19" height="19" fill="#f0b563"/>
<text x="103.3" y="445.7" font-size="13" fill="#e4e4e4" textLength="237.6" lengthAdjust="spacing">H1:SUS-ETMX_L2_MASTER_OUT_UL_DQ</text>
<rect x="78" y="456" width="19" height="19" fill="#17877b"/>
<text x="103.3" y="470.7" font-size="13" fill="#e4e4e4" textLength="234.9" lengthAdjust="spacing">H1:SUS-ETMX_L2_MASTER_OUT_LL_DQ</text>
<rect x="78" y="481" width="19" height="19" fill="#6c5b8b"/>
<text x="103.3" y="495.7" font-size="13" fill="#e4e4e4" textLength="238.9" lengthAdjust="spacing">H1:SUS-ETMX_L2_MASTER_OUT_UR_DQ</text>
<rect x="78" y="506" width="19" height="19" fill="#cf8676"/>
<text x="103.3" y="520.7" font-size="13" fill="#e4e4e4" textLength="236.1" lengthAdjust="spacing">H1:SUS-ETMX_L2_MASTER_OUT_LR_DQ</text>
<path d="M569.0 412V691" stroke="#fff" stroke-width="2.4" stroke-dasharray="10.2 1.8" stroke-dashoffset="5"/>
<path d="M1241.9 412V691" stroke="#e2e2e2" stroke-width="2.4" stroke-dasharray="10.2 1.8" stroke-dashoffset="5"/>
<rect x="571.0" y="671" width="122" height="17" fill="#000"/>
<text x="573.2" y="683.8" font-size="13" fill="#f0f0f0" textLength="116.0" lengthAdjust="spacing">T1=-2s,89ms,725µs</text>
<text x="1216.0" y="683.8" font-size="13" fill="#f0f0f0" textLength="22.1" lengthAdjust="spacing">T2=</text>
<rect x="840.5" y="423" width="128.8" height="35" fill="#000"/>
<text x="846.5" y="443.3" font-size="13" fill="#f0f0f0" textLength="22.1" lengthAdjust="spacing">ΔT=</text>
<text x="872.6" y="433.2" font-size="13" fill="#f0f0f0" textLength="89.8" lengthAdjust="spacing">2s,89ms,725µs</text>
<text x="872.6" y="453.2" font-size="13" fill="#f0f0f0" textLength="74.6" lengthAdjust="spacing">0.478532 Hz</text>
<g shape-rendering="crispEdges"><path d="M115.5 412V691" stroke="#fff" stroke-opacity="0.078"/>
<path d="M195.5 412V691" stroke="#fff" stroke-opacity="0.078"/>
<path d="M276.5 412V691" stroke="#fff" stroke-opacity="0.115"/>
<path d="M356.5 412V691" stroke="#fff" stroke-opacity="0.078"/>
<path d="M437.5 412V691" stroke="#fff" stroke-opacity="0.078"/>
<path d="M517.5 412V691" stroke="#fff" stroke-opacity="0.078"/>
<path d="M598.5 412V691" stroke="#fff" stroke-opacity="0.115"/>
<path d="M678.5 412V691" stroke="#fff" stroke-opacity="0.078"/>
<path d="M759.5 412V691" stroke="#fff" stroke-opacity="0.078"/>
<path d="M839.5 412V691" stroke="#fff" stroke-opacity="0.078"/>
<path d="M920.5 412V691" stroke="#fff" stroke-opacity="0.115"/>
<path d="M1000.5 412V691" stroke="#fff" stroke-opacity="0.078"/>
<path d="M1081.5 412V691" stroke="#fff" stroke-opacity="0.078"/>
<path d="M1161.5 412V691" stroke="#fff" stroke-opacity="0.078"/>
<path d="M1242.5 412V691" stroke="#fff" stroke-opacity="0.115"/>
<path d="M60 423.5H1277" stroke="#fff" stroke-opacity="0.072"/>
<path d="M60 485.5H1277" stroke="#fff" stroke-opacity="0.072"/>
<path d="M60 548.5H1277" stroke="#fff" stroke-opacity="0.072"/>
<path d="M60 611.5H1277" stroke="#fff" stroke-opacity="0.072"/>
<path d="M60 674.5H1277" stroke="#fff" stroke-opacity="0.072"/>
<path d="M60 455.5H1277" stroke="#fff" stroke-opacity="0.058"/>
<path d="M60 518.5H1277" stroke="#fff" stroke-opacity="0.058"/>
<path d="M60 580.5H1277" stroke="#fff" stroke-opacity="0.058"/>
<path d="M60 643.5H1277" stroke="#fff" stroke-opacity="0.058"/></g>
<g><path d="M59.5 412V691.5H1277" stroke="#969696" fill="none"/>
<text x="266.6" y="707.8" font-size="13" fill="#d8d8d8" textLength="17.8" lengthAdjust="spacing">-3s</text>
<text x="588.6" y="707.8" font-size="13" fill="#d8d8d8" textLength="17.8" lengthAdjust="spacing">-2s</text>
<text x="910.6" y="707.8" font-size="13" fill="#d8d8d8" textLength="17.8" lengthAdjust="spacing">-1s</text>
<text x="1237.8" y="707.8" font-size="13" fill="#d8d8d8">0</text>
<text x="46.6" y="429.2" font-size="13" fill="#d8d8d8">4</text>
<text x="46.6" y="491.2" font-size="13" fill="#d8d8d8">2</text>
<text x="46.6" y="554.2" font-size="13" fill="#d8d8d8">0</text>
<text x="42.4" y="617.2" font-size="13" fill="#d8d8d8" textLength="11.6" lengthAdjust="spacing">-2</text>
<text x="42.4" y="680.2" font-size="13" fill="#d8d8d8" textLength="11.6" lengthAdjust="spacing">-4</text>
<text x="-13.3" y="552.0" font-size="13" fill="#d8d8d8" textLength="95.7" lengthAdjust="spacing" transform="rotate(-90 34.6 552.0)">counts (x1e+09)</text></g>
</g>
<g id="plot4">
<clipPath id="c3"><rect x="1330" y="412" width="1210" height="279"/></clipPath>
<g clip-path="url(#c3)"><path d="M1329.5 450.7L2270.0 450.9L2272.2 451.8L2332.2 451.8L2354.4 450.0L2372.2 449.1L2390.0 448.0L2414.4 446.9L2424.4 446.4L2424.7 675.8L2425.1 582.4L2426.0 522.4L2427.3 478.0L2428.9 444.6L2431.1 430.2L2433.3 429.1L2436.7 434.6L2443.3 442.4L2450.0 449.1L2458.9 454.6L2467.8 454.6L2476.7 452.4L2487.8 449.5L2503.3 449.5L2516.7 451.3L2538.9 450.9" stroke="#f0b563" stroke-width="1.0" fill="none" stroke-linejoin="round" />
<path d="M1329.5 450.3L2270.0 450.5L2272.2 451.4L2332.2 451.4L2354.4 449.6L2372.2 448.7L2390.0 447.6L2414.4 446.5L2424.4 446.0L2424.7 675.4L2425.1 582.0L2426.0 522.0L2427.3 477.6L2428.9 444.2L2431.1 429.8L2433.3 428.7L2436.7 434.2L2443.3 442.0L2450.0 448.7L2458.9 454.2L2467.8 454.2L2476.7 452.0L2487.8 449.1L2503.3 449.1L2516.7 450.9L2538.9 450.5" stroke="#6c5b8b" stroke-width="1.0" fill="none" stroke-linejoin="round" />
<path d="M1329.5 450.5L2270.0 450.7L2272.2 451.6L2332.2 451.6L2354.4 449.8L2372.2 448.9L2390.0 447.8L2414.4 446.7L2424.4 446.2L2424.7 675.6L2425.1 582.2L2426.0 522.2L2427.3 477.8L2428.9 444.4L2431.1 430.0L2433.3 428.9L2436.7 434.4L2443.3 442.2L2450.0 448.9L2458.9 454.4L2467.8 454.4L2476.7 452.2L2487.8 449.3L2503.3 449.3L2516.7 451.1L2538.9 450.7" stroke="#d58a79" stroke-width="1.2" fill="none" stroke-linejoin="round" /></g>
<rect x="1339.5" y="422.5" width="282" height="112" fill="#161616" fill-opacity="0.8" stroke="#383838"/>
<rect x="1348" y="431" width="19" height="19" fill="#f0b563"/>
<text x="1373.3" y="445.7" font-size="13" fill="#e4e4e4" textLength="237.6" lengthAdjust="spacing">H1:SUS-ETMX_L3_MASTER_OUT_UL_DQ</text>
<rect x="1348" y="456" width="19" height="19" fill="#17877b"/>
<text x="1373.3" y="470.7" font-size="13" fill="#e4e4e4" textLength="234.9" lengthAdjust="spacing">H1:SUS-ETMX_L3_MASTER_OUT_LL_DQ</text>
<rect x="1348" y="481" width="19" height="19" fill="#6c5b8b"/>
<text x="1373.3" y="495.7" font-size="13" fill="#e4e4e4" textLength="238.9" lengthAdjust="spacing">H1:SUS-ETMX_L3_MASTER_OUT_UR_DQ</text>
<rect x="1348" y="506" width="19" height="19" fill="#cf8676"/>
<text x="1373.3" y="520.7" font-size="13" fill="#e4e4e4" textLength="236.1" lengthAdjust="spacing">H1:SUS-ETMX_L3_MASTER_OUT_LR_DQ</text>
<path d="M1832.5 412V691" stroke="#fff" stroke-width="2.4" stroke-dasharray="10.2 1.8" stroke-dashoffset="5"/>
<path d="M2504.1 412V691" stroke="#e2e2e2" stroke-width="2.4" stroke-dasharray="10.2 1.8" stroke-dashoffset="5"/>
<rect x="1834.5" y="671" width="122" height="17" fill="#000"/>
<text x="1836.7" y="683.8" font-size="13" fill="#f0f0f0" textLength="116.0" lengthAdjust="spacing">T1=-2s,89ms,725µs</text>
<text x="2478.2" y="683.8" font-size="13" fill="#f0f0f0" textLength="22.1" lengthAdjust="spacing">T2=</text>
<rect x="2103.4" y="423" width="128.8" height="35" fill="#000"/>
<text x="2109.4" y="443.3" font-size="13" fill="#f0f0f0" textLength="22.1" lengthAdjust="spacing">ΔT=</text>
<text x="2135.4" y="433.2" font-size="13" fill="#f0f0f0" textLength="89.8" lengthAdjust="spacing">2s,89ms,725µs</text>
<text x="2135.4" y="453.2" font-size="13" fill="#f0f0f0" textLength="74.6" lengthAdjust="spacing">0.478532 Hz</text>
<g shape-rendering="crispEdges"><path d="M1379.5 412V691" stroke="#fff" stroke-opacity="0.078"/>
<path d="M1459.5 412V691" stroke="#fff" stroke-opacity="0.078"/>
<path d="M1540.5 412V691" stroke="#fff" stroke-opacity="0.115"/>
<path d="M1620.5 412V691" stroke="#fff" stroke-opacity="0.078"/>
<path d="M1700.5 412V691" stroke="#fff" stroke-opacity="0.078"/>
<path d="M1781.5 412V691" stroke="#fff" stroke-opacity="0.078"/>
<path d="M1861.5 412V691" stroke="#fff" stroke-opacity="0.115"/>
<path d="M1941.5 412V691" stroke="#fff" stroke-opacity="0.078"/>
<path d="M2022.5 412V691" stroke="#fff" stroke-opacity="0.078"/>
<path d="M2102.5 412V691" stroke="#fff" stroke-opacity="0.078"/>
<path d="M2182.5 412V691" stroke="#fff" stroke-opacity="0.115"/>
<path d="M2263.5 412V691" stroke="#fff" stroke-opacity="0.078"/>
<path d="M2343.5 412V691" stroke="#fff" stroke-opacity="0.078"/>
<path d="M2423.5 412V691" stroke="#fff" stroke-opacity="0.078"/>
<path d="M2504.5 412V691" stroke="#fff" stroke-opacity="0.115"/>
<path d="M1330 450.5H2540" stroke="#fff" stroke-opacity="0.072"/>
<path d="M1330 492.5H2540" stroke="#fff" stroke-opacity="0.072"/>
<path d="M1330 534.5H2540" stroke="#fff" stroke-opacity="0.072"/>
<path d="M1330 576.5H2540" stroke="#fff" stroke-opacity="0.072"/>
<path d="M1330 618.5H2540" stroke="#fff" stroke-opacity="0.072"/>
<path d="M1330 660.5H2540" stroke="#fff" stroke-opacity="0.072"/></g>
<g><path d="M1329.5 412V691.5H2540" stroke="#969696" fill="none"/>
<text x="1530.6" y="707.8" font-size="13" fill="#d8d8d8" textLength="17.8" lengthAdjust="spacing">-3s</text>
<text x="1852.0" y="707.8" font-size="13" fill="#d8d8d8" textLength="17.8" lengthAdjust="spacing">-2s</text>
<text x="2173.4" y="707.8" font-size="13" fill="#d8d8d8" textLength="17.8" lengthAdjust="spacing">-1s</text>
<text x="2500.0" y="707.8" font-size="13" fill="#d8d8d8">0</text>
<text x="1316.6" y="455.2" font-size="13" fill="#d8d8d8">0</text>
<text x="1312.4" y="497.2" font-size="13" fill="#d8d8d8" textLength="11.6" lengthAdjust="spacing">-2</text>
<text x="1312.4" y="539.2" font-size="13" fill="#d8d8d8" textLength="11.6" lengthAdjust="spacing">-4</text>
<text x="1312.4" y="581.2" font-size="13" fill="#d8d8d8" textLength="11.6" lengthAdjust="spacing">-6</text>
<text x="1312.4" y="623.2" font-size="13" fill="#d8d8d8" textLength="11.6" lengthAdjust="spacing">-8</text>
<text x="1304.9" y="665.2" font-size="13" fill="#d8d8d8" textLength="19.1" lengthAdjust="spacing">-10</text>
<text x="1249.7" y="552.0" font-size="13" fill="#d8d8d8" textLength="95.7" lengthAdjust="spacing" transform="rotate(-90 1297.6 552.0)">counts (x1e+09)</text></g>
</g>
<g id="plot5">
<clipPath id="c4"><rect x="60" y="719" width="1217" height="279"/></clipPath>
<g clip-path="url(#c4)"><path d="M59.5 856.5H384M59.5 857.5H969" stroke="#fad81f" stroke-width="1"/>
<path d="M59.5 858H235" stroke="#76cfd0" stroke-width="0.8"/>
<path d="M384 855.5H928" stroke="#76cfd0" stroke-width="1"/>
<path d="M402 856.5H434M453 856.5H470M480 856.5H560M640 856.5H680" stroke="#f06292" stroke-width="1"/>
<path d="M387 858.5H409M445 858.5H520M600 858.5H640M866 858.5H969" stroke="#6b8e4e" stroke-width="1"/>
<path d="M969.0 857.3L969.2 857.1L969.7 857.1L970.3 857.1L970.9 857.1L971.5 857.1L972.0 857.1L972.6 857.1L973.2 857.1L973.7 857.1L974.3 857.1L974.9 857.1L975.5 857.1L976.0 857.1L976.6 857.1L977.2 857.1L977.7 857.1L978.3 857.1L978.9 857.1L979.5 857.0L980.1 856.9L980.7 856.7L981.3 856.4L981.9 856.1L982.5 855.8L983.1 855.4L983.7 855.1L984.3 854.8L984.9 854.6L985.5 854.4L986.1 854.4L986.7 854.0L987.2 853.3L987.8 854.0L988.3 855.1L988.9 856.7L989.4 858.9L990.0 858.7L990.6 859.4L991.1 860.6L991.7 859.0L992.3 857.7L992.8 856.6L993.4 851.5L994.0 847.7L994.5 845.9L995.1 842.5L995.7 840.4L996.2 837.5L996.8 834.9L997.4 834.4L997.9 834.7L998.4 836.8L999.0 838.3L999.5 840.0L1000.1 844.9L1000.6 848.6L1001.1 850.6L1001.7 850.1L1002.2 849.4L1002.8 850.5L1003.3 850.7L1003.8 849.7L1004.4 849.4L1004.9 848.6L1005.5 846.3L1006.0 845.4L1006.5 845.5L1007.1 844.7L1007.6 845.3L1008.2 846.6L1008.7 845.9L1009.2 845.9L1009.8 846.8L1010.3 848.4L1010.9 849.2L1011.4 848.7L1011.9 848.8L1012.5 848.2L1013.1 848.0L1013.7 846.7L1014.3 841.6L1014.9 841.2L1015.5 841.3L1016.1 836.2L1016.7 833.1L1017.3 830.4L1017.9 829.6L1018.5 827.7L1019.0 820.9L1019.6 817.7L1020.2 815.7L1020.8 814.0L1021.4 810.6L1022.0 804.4L1022.6 803.2L1023.2 803.0L1023.8 801.1L1024.4 798.6L1025.0 798.6L1025.6 801.3L1026.1 800.0L1026.7 800.9L1027.3 803.8L1027.9 807.3L1028.5 811.4L1029.1 814.3L1029.7 819.6L1030.3 825.6L1030.9 831.1L1031.4 837.9L1032.0 845.2L1032.6 852.3L1033.2 860.9L1033.8 869.1L1034.4 877.2L1035.0 886.1L1035.6 894.0L1036.2 901.0L1036.7 910.3L1037.3 919.3L1037.9 927.9L1038.5 937.5L1039.1 944.2L1039.7 950.2L1040.3 957.9L1040.9 961.4L1041.5 965.8L1042.1 970.4L1042.6 975.2L1043.2 980.2L1043.8 980.6L1044.4 979.1L1045.0 979.6L1045.6 980.1L1046.2 980.0L1046.8 979.2L1047.4 974.4L1048.0 972.8L1048.6 971.1L1049.1 964.4L1049.7 959.9L1050.3 954.6L1050.9 946.4L1051.5 940.1L1052.1 932.4L1052.7 924.1L1053.3 916.7L1053.9 910.0L1054.5 902.4L1055.1 891.9L1055.7 882.6L1056.3 873.2L1056.9 863.2L1057.4 853.8L1058.0 844.4L1058.6 835.1L1059.2 825.9L1059.8 817.0L1060.4 808.2L1061.0 799.8L1061.6 791.7L1062.2 784.0L1062.8 776.7L1063.4 769.9L1064.0 763.7L1064.6 757.9L1065.2 752.8L1065.7 748.3L1066.3 744.5L1066.9 741.3L1067.5 738.8L1068.1 737.0L1068.7 735.9L1069.3 735.6L1069.9 735.9L1070.5 736.8L1071.1 738.4L1071.7 740.6L1072.3 743.4L1072.9 746.8L1073.5 750.7L1074.0 755.2L1074.6 760.2L1075.2 765.7L1075.8 771.7L1076.4 778.0L1077.0 784.8L1077.6 791.9L1078.2 799.3L1078.8 807.0L1079.4 814.9L1080.0 822.9L1080.6 831.1L1081.2 839.3L1081.8 847.6L1082.3 855.8L1082.9 864.0L1083.5 872.1L1084.1 879.9L1084.7 887.6L1085.3 895.0L1085.9 902.1L1086.5 908.9L1087.1 915.3L1087.7 921.2L1088.3 926.7L1088.9 931.7L1089.5 936.2L1090.1 940.2L1090.6 943.6L1091.2 946.4L1091.8 948.5L1092.4 950.1L1093.0 951.1L1093.6 951.4L1094.2 951.1L1094.8 950.1L1095.4 948.4L1096.0 946.2L1096.6 943.3L1097.1 939.9L1097.7 935.9L1098.3 931.4L1098.9 926.4L1099.5 921.0L1100.1 915.2L1100.7 909.0L1101.3 902.6L1101.9 896.0L1102.4 889.3L1103.0 882.4L1103.6 875.5L1104.2 868.6L1104.8 861.9L1105.4 855.3L1106.0 848.9L1106.6 842.7L1107.2 836.9L1107.7 831.5L1108.3 826.5L1108.9 822.0L1109.5 818.0L1110.1 814.6L1110.7 811.7L1111.3 809.5L1111.9 807.8L1112.5 806.9L1113.1 806.5L1113.6 806.6L1114.2 806.9L1114.8 807.4L1115.4 808.1L1116.0 808.9L1116.6 809.9L1117.2 811.1L1117.8 812.5L1118.3 814.0L1118.9 815.7L1119.5 817.5L1120.1 819.5L1120.7 821.6L1121.3 823.8L1121.9 826.0L1122.5 828.4L1123.0 830.9L1123.6 833.4L1124.2 836.0L1124.8 838.6L1125.4 841.2L1126.0 843.8L1126.6 846.4L1127.2 849.0L1127.7 851.6L1128.3 854.1L1128.9 856.6L1129.5 858.9L1130.1 861.2L1130.7 863.4L1131.3 865.5L1131.9 867.5L1132.4 869.3L1133.0 871.0L1133.6 872.5L1134.2 873.9L1134.8 875.1L1135.4 876.1L1136.0 876.9L1136.6 877.6L1137.2 878.1L1137.7 878.4L1138.3 878.5L1138.9 878.4L1139.5 878.0L1140.1 877.5L1140.7 876.8L1141.3 875.8L1141.9 874.7L1142.5 873.4L1143.1 871.9L1143.7 870.2L1144.3 868.4L1144.9 866.4L1145.5 864.4L1146.1 862.2L1146.6 859.9L1147.2 857.6L1147.8 855.2L1148.4 852.7L1149.0 850.3L1149.6 847.8L1150.2 845.4L1150.8 843.0L1151.4 840.6L1152.0 838.4L1152.6 836.2L1153.2 834.1L1153.8 832.2L1154.4 830.3L1155.0 828.7L1155.6 827.2L1156.2 825.9L1156.7 824.7L1157.3 823.8L1157.9 823.0L1158.5 822.5L1159.1 822.2L1159.7 822.1L1160.3 823.5L1160.9 827.6L1161.5 833.9L1162.0 841.9L1162.6 850.8L1163.2 859.6L1163.8 867.6L1164.4 874.0L1165.0 878.0L1165.5 879.4L1166.1 879.2L1166.7 878.3L1167.3 877.0L1167.8 875.3L1168.4 873.3L1169.0 871.2L1169.5 869.0L1170.1 867.0L1170.7 865.3L1171.2 864.0L1171.8 863.2L1172.4 862.9L1172.9 862.8L1173.5 862.6L1174.1 862.3L1174.7 861.8L1175.3 861.2L1175.9 860.6L1176.4 859.9L1177.0 859.2L1177.6 858.5L1178.2 857.8L1178.8 857.2L1179.4 856.8L1179.9 856.4L1180.5 856.2L1181.1 856.1L1181.7 856.1L1182.3 856.3L1182.9 856.5L1183.5 856.7L1184.1 857.1L1184.7 857.5L1185.2 858.0L1185.8 858.5L1186.4 859.0L1187.0 859.6L1187.6 860.2L1188.2 860.8L1188.8 861.4L1189.4 861.9L1190.0 862.5L1190.6 863.0L1191.2 863.5L1191.8 863.9L1192.3 864.2L1192.9 864.5L1193.5 864.7L1194.1 864.8L1194.7 864.9L1195.3 864.8L1195.9 864.6L1196.5 864.3L1197.1 863.9L1197.7 863.4L1198.3 862.7L1198.8 862.0L1199.4 861.2L1200.0 860.3L1200.6 859.4L1201.2 858.3L1201.8 857.3L1202.4 856.2L1203.0 855.1L1203.6 854.0L1204.2 853.0L1204.7 851.9L1205.3 850.9L1205.9 850.0L1206.5 849.1L1207.1 848.3L1207.7 847.5L1208.3 846.9L1208.9 846.4L1209.5 846.0L1210.1 845.7L1210.7 845.5L1211.2 845.4L1211.8 845.5L1212.4 845.7L1213.0 846.0L1213.6 846.4L1214.2 847.0L1214.8 847.6L1215.4 848.4L1216.0 849.3L1216.6 850.2L1217.1 851.2L1217.7 852.2L1218.3 853.3L1218.9 854.5L1219.5 855.6L1220.1 856.8L1220.7 857.9L1221.3 859.0L1221.9 860.1L1222.5 861.1L1223.0 862.0L1223.6 862.8L1224.2 863.6L1224.8 864.3L1225.4 864.8L1226.0 865.3L1226.6 865.6L1227.2 865.8L1227.8 865.8L1228.4 865.8L1228.9 865.5L1229.5 865.1L1230.1 864.6L1230.7 864.0L1231.3 863.2L1231.9 862.4L1232.4 861.5L1233.0 860.5L1233.6 859.5L1234.2 858.5L1234.8 857.6L1235.4 856.6L1235.9 855.8L1236.5 855.0L1237.1 854.4L1237.7 853.9L1238.3 853.5L1238.9 853.3L1239.4 853.2L1240.0 853.2L1240.6 853.3L1241.2 853.5L1241.8 853.7L1242.4 854.0L1242.9 854.4L1243.5 854.8L1244.1 855.2L1244.7 855.7L1245.3 856.1L1245.9 856.6L1246.4 857.0L1247.0 857.4L1247.6 857.8L1248.2 858.2L1248.8 858.5L1249.4 858.7L1249.9 858.9L1250.5 859.0L1251.1 859.0L1251.7 859.0L1252.3 859.0L1252.9 858.9L1253.4 858.7L1254.0 858.6L1254.6 858.4L1255.2 858.2L1255.8 858.0L1256.4 857.8L1256.9 857.6L1257.5 857.3L1258.1 857.1L1258.7 856.9L1259.3 856.7L1259.9 856.5L1260.4 856.4L1261.0 856.3L1261.6 856.2L1262.2 856.1L1262.8 856.1L1263.4 856.1L1264.0 856.1L1264.5 856.2L1265.1 856.2L1265.7 856.3L1266.3 856.3L1266.9 856.4L1267.5 856.5L1268.1 856.6L1268.7 856.7L1269.3 856.8L1269.9 856.9L1270.5 857.0L1271.0 857.1L1271.6 857.2L1272.2 857.3L1272.8 857.4L1273.4 857.4L1274.0 857.5L1274.6 857.6L1275.2 857.6L1275.8 857.6L1276.4 857.7L1277.0 857.7" stroke="#f06292" stroke-width="1.1" fill="none" stroke-linejoin="round" />
<path d="M969.0 857.3L969.2 856.1L969.7 856.1L970.3 856.1L970.9 856.1L971.5 856.1L972.0 856.1L972.6 856.1L973.2 856.1L973.7 856.1L974.3 856.1L974.9 856.1L975.5 856.1L976.0 856.1L976.6 856.1L977.2 856.1L977.7 856.1L978.3 856.1L978.9 856.1L979.5 856.2L980.1 856.3L980.7 856.6L981.3 856.9L981.9 857.4L982.5 857.8L983.1 858.3L983.7 858.7L984.3 859.2L984.9 859.6L985.5 860.1L986.1 860.3L986.7 861.0L987.2 860.8L987.8 858.4L988.4 857.6L989.0 856.4L989.6 853.7L990.2 850.3L990.7 849.4L991.3 850.7L991.9 849.8L992.5 849.6L993.1 850.2L993.7 848.9L994.3 847.4L994.9 845.6L995.5 843.0L996.1 843.0L996.7 842.0L997.3 838.2L997.9 836.7L998.5 836.6L999.1 834.5L999.7 834.5L1000.3 834.7L1000.8 833.2L1001.4 833.7L1001.9 839.2L1002.5 840.9L1003.1 841.2L1003.6 844.9L1004.2 845.8L1004.7 843.2L1005.3 840.5L1005.8 839.7L1006.4 838.4L1006.9 835.1L1007.5 831.3L1008.1 832.6L1008.7 835.3L1009.3 835.1L1009.8 834.0L1010.4 835.1L1011.0 837.1L1011.6 839.0L1012.2 838.9L1012.8 839.4L1013.4 841.9L1014.0 841.6L1014.6 842.8L1015.2 844.5L1015.8 844.0L1016.4 844.4L1017.0 843.1L1017.5 842.3L1018.1 843.8L1018.7 843.6L1019.3 843.6L1019.8 841.5L1020.4 838.3L1021.0 839.0L1021.6 840.1L1022.1 841.1L1022.7 840.6L1023.3 837.5L1023.8 837.2L1024.4 836.9L1025.0 834.9L1025.6 837.5L1026.1 839.0L1026.7 838.5L1027.3 839.9L1027.9 842.2L1028.5 843.7L1029.1 845.1L1029.6 846.0L1030.2 846.1L1030.8 848.1L1031.4 849.4L1032.0 849.2L1032.6 849.7L1033.2 851.1L1033.8 852.9L1034.3 856.2L1034.9 860.3L1035.5 863.2L1036.1 866.9L1036.7 871.7L1037.3 876.3L1037.9 880.5L1038.5 883.1L1039.1 887.3L1039.7 896.0L1040.3 898.9L1040.9 899.5L1041.4 905.1L1042.0 909.8L1042.6 912.0L1043.2 910.2L1043.8 911.5L1044.4 913.1L1045.0 911.3L1045.6 913.9L1046.2 914.2L1046.8 913.8L1047.4 917.9L1048.0 916.4L1048.5 911.1L1049.1 906.7L1049.7 902.6L1050.3 900.0L1050.9 897.5L1051.5 894.6L1052.1 891.3L1052.7 889.0L1053.3 885.1L1053.9 880.3L1054.5 876.3L1055.1 873.8L1055.6 870.4L1056.2 866.2L1056.8 861.4L1057.4 856.9L1058.0 852.4L1058.6 847.8L1059.2 843.3L1059.8 838.8L1060.4 834.3L1061.0 829.9L1061.6 825.5L1062.2 821.3L1062.8 817.2L1063.3 813.2L1063.9 809.4L1064.5 805.8L1065.1 802.4L1065.7 799.2L1066.3 796.2L1066.9 793.4L1067.5 790.9L1068.1 788.7L1068.7 786.8L1069.3 785.1L1069.9 783.7L1070.4 782.6L1071.0 781.9L1071.6 781.4L1072.2 781.2L1072.8 781.5L1073.4 782.2L1074.0 783.4L1074.6 785.0L1075.2 787.1L1075.8 789.6L1076.4 792.5L1077.0 795.9L1077.6 799.6L1078.2 803.7L1078.8 808.0L1079.4 812.7L1080.0 817.7L1080.6 822.9L1081.2 828.3L1081.8 833.9L1082.4 839.6L1083.0 845.4L1083.6 851.2L1084.2 857.1L1084.8 863.0L1085.4 868.7L1086.0 874.4L1086.6 880.0L1087.2 885.4L1087.8 890.6L1088.4 895.6L1089.0 900.3L1089.6 904.7L1090.2 908.7L1090.8 912.5L1091.4 915.8L1092.0 918.7L1092.6 921.2L1093.2 923.3L1093.8 925.0L1094.4 926.1L1095.0 926.8L1095.6 927.1L1096.1 926.9L1096.7 926.3L1097.3 925.3L1097.9 923.9L1098.5 922.1L1099.1 920.0L1099.7 917.5L1100.3 914.7L1100.8 911.5L1101.4 908.1L1102.0 904.4L1102.6 900.4L1103.2 896.3L1103.8 891.9L1104.4 887.4L1105.0 882.7L1105.6 877.9L1106.1 873.1L1106.7 868.3L1107.3 863.4L1107.9 858.6L1108.5 853.8L1109.1 849.2L1109.7 844.6L1110.3 840.3L1110.9 836.1L1111.4 832.1L1112.0 828.4L1112.6 825.0L1113.2 821.8L1113.8 819.0L1114.4 816.5L1115.0 814.4L1115.6 812.6L1116.1 811.2L1116.7 810.2L1117.3 809.6L1117.9 809.4L1118.5 809.6L1119.1 810.0L1119.7 810.6L1120.3 811.5L1120.9 812.7L1121.5 814.1L1122.1 815.7L1122.7 817.5L1123.3 819.6L1123.9 821.8L1124.5 824.3L1125.1 826.9L1125.7 829.6L1126.3 832.5L1126.9 835.5L1127.5 838.6L1128.1 841.7L1128.7 844.9L1129.3 848.2L1129.9 851.4L1130.5 854.7L1131.1 857.9L1131.7 861.0L1132.3 864.1L1132.9 867.1L1133.5 870.0L1134.1 872.7L1134.7 875.3L1135.3 877.7L1135.9 880.0L1136.5 882.0L1137.1 883.9L1137.7 885.5L1138.3 886.9L1138.9 888.1L1139.4 889.0L1140.0 889.6L1140.6 890.0L1141.2 890.1L1141.8 890.0L1142.4 889.5L1143.0 888.6L1143.6 887.5L1144.2 886.0L1144.8 884.2L1145.4 882.1L1146.0 879.8L1146.5 877.2L1147.1 874.4L1147.7 871.4L1148.3 868.3L1148.9 864.9L1149.5 861.5L1150.1 858.0L1150.7 854.5L1151.3 850.9L1151.9 847.4L1152.4 843.9L1153.0 840.5L1153.6 837.2L1154.2 834.0L1154.8 831.0L1155.4 828.2L1156.0 825.6L1156.6 823.3L1157.2 821.2L1157.7 819.4L1158.3 818.0L1158.9 816.8L1159.5 816.0L1160.1 815.4L1160.7 815.3L1161.2 816.9L1161.8 821.4L1162.3 828.4L1162.8 837.0L1163.4 846.1L1163.9 854.6L1164.5 861.6L1165.0 866.2L1165.5 867.8L1166.1 867.7L1166.7 867.5L1167.3 867.2L1167.8 866.8L1168.4 866.2L1169.0 865.6L1169.6 864.9L1170.1 864.2L1170.7 863.5L1171.3 862.8L1171.8 862.2L1172.4 861.5L1173.0 861.0L1173.6 860.6L1174.1 860.3L1174.7 860.1L1175.3 860.0L1175.9 859.9L1176.5 859.8L1177.0 859.5L1177.6 859.1L1178.2 858.7L1178.8 858.1L1179.4 857.5L1180.0 856.8L1180.6 856.1L1181.2 855.3L1181.8 854.6L1182.4 853.8L1183.0 853.0L1183.6 852.2L1184.1 851.5L1184.7 850.8L1185.3 850.2L1185.9 849.6L1186.5 849.2L1187.1 848.8L1187.7 848.5L1188.3 848.4L1188.9 848.3L1189.5 848.5L1190.0 848.8L1190.6 849.4L1191.2 850.2L1191.7 851.2L1192.3 852.4L1192.9 853.6L1193.5 854.9L1194.0 856.3L1194.6 857.6L1195.2 858.9L1195.7 860.0L1196.3 861.0L1196.9 861.8L1197.5 862.4L1198.0 862.8L1198.6 862.9L1199.2 862.9L1199.8 862.7L1200.4 862.5L1201.0 862.1L1201.6 861.7L1202.2 861.2L1202.7 860.6L1203.3 860.0L1203.9 859.4L1204.5 858.7L1205.1 857.9L1205.7 857.2L1206.3 856.5L1206.9 855.8L1207.5 855.1L1208.1 854.5L1208.7 853.9L1209.3 853.4L1209.8 853.0L1210.4 852.7L1211.0 852.4L1211.6 852.3L1212.2 852.2L1212.8 852.3L1213.4 852.4L1214.0 852.5L1214.6 852.8L1215.2 853.1L1215.8 853.5L1216.4 853.9L1216.9 854.3L1217.5 854.8L1218.1 855.3L1218.7 855.8L1219.3 856.4L1219.9 856.9L1220.5 857.4L1221.1 857.9L1221.7 858.3L1222.3 858.8L1222.9 859.1L1223.5 859.4L1224.1 859.7L1224.6 859.9L1225.2 860.0L1225.8 860.0L1226.4 860.0L1227.0 859.9L1227.6 859.8L1228.2 859.7L1228.8 859.6L1229.4 859.4L1230.0 859.2L1230.6 858.9L1231.2 858.7L1231.7 858.4L1232.3 858.2L1232.9 857.9L1233.5 857.7L1234.1 857.4L1234.7 857.2L1235.3 856.9L1235.9 856.7L1236.5 856.5L1237.1 856.4L1237.7 856.3L1238.3 856.2L1238.8 856.1L1239.4 856.1L1240.0 856.1L1240.6 856.1L1241.2 856.2L1241.8 856.2L1242.4 856.2L1243.0 856.3L1243.6 856.4L1244.1 856.4L1244.7 856.5L1245.3 856.6L1245.9 856.7L1246.5 856.8L1247.1 856.9L1247.7 857.0L1248.3 857.1L1248.9 857.2L1249.5 857.3L1250.0 857.4L1250.6 857.5L1251.2 857.7L1251.8 857.8L1252.4 857.9L1253.0 858.0L1253.6 858.0L1254.2 858.1L1254.8 858.2L1255.3 858.3L1255.9 858.3L1256.5 858.4L1257.1 858.4L1257.7 858.4L1258.3 858.4L1258.9 858.4L1259.5 858.4L1260.0 858.4L1260.6 858.4L1261.2 858.4L1261.8 858.4L1262.4 858.4L1263.0 858.3L1263.5 858.3L1264.1 858.3L1264.7 858.3L1265.3 858.2L1265.9 858.2L1266.5 858.1L1267.0 858.1L1267.6 858.1L1268.2 858.0L1268.8 858.0L1269.4 858.0L1270.0 857.9L1270.5 857.9L1271.1 857.8L1271.7 857.8L1272.3 857.8L1272.9 857.8L1273.5 857.7L1274.0 857.7L1274.6 857.7L1275.2 857.7L1275.8 857.7L1276.4 857.7L1277.0 857.7" stroke="#6b8e4e" stroke-width="1.1" fill="none" stroke-linejoin="round" />
<path d="M969.0 857.3L969.2 858.4L969.7 858.4L970.3 858.4L970.9 858.4L971.5 858.4L972.0 858.4L972.6 858.4L973.2 858.4L973.7 858.4L974.3 858.4L974.9 858.4L975.5 858.4L976.0 858.4L976.6 858.4L977.2 858.4L977.7 858.4L978.3 858.4L978.9 858.4L979.5 858.3L980.0 858.0L980.6 857.5L981.2 856.9L981.7 856.0L982.3 855.1L982.9 854.1L983.5 853.0L984.0 851.9L984.6 850.8L985.2 849.9L985.8 848.9L986.3 848.1L986.9 847.0L987.5 847.1L988.0 848.1L988.6 846.9L989.1 846.1L989.7 847.8L990.2 849.4L990.8 851.1L991.3 855.5L991.9 858.6L992.4 859.8L992.9 861.8L993.5 861.9L994.0 861.7L994.6 863.1L995.2 863.8L995.7 866.7L996.3 869.0L996.9 873.0L997.4 876.0L998.0 878.6L998.6 880.2L999.1 880.5L999.7 881.4L1000.3 879.7L1000.8 880.5L1001.4 880.9L1001.9 876.8L1002.5 874.5L1003.1 872.5L1003.6 869.6L1004.2 870.3L1004.7 871.6L1005.3 871.3L1005.8 875.6L1006.4 881.7L1006.9 882.5L1007.5 882.9L1008.1 882.2L1008.6 881.7L1009.2 883.8L1009.8 884.3L1010.3 881.6L1010.9 880.3L1011.5 882.1L1012.1 881.0L1012.6 877.2L1013.2 877.6L1013.8 877.4L1014.3 874.6L1014.9 872.2L1015.5 869.4L1016.1 868.0L1016.6 868.5L1017.2 869.1L1017.8 869.9L1018.4 870.6L1018.9 870.3L1019.5 869.7L1020.1 868.3L1020.7 865.8L1021.3 866.0L1021.9 866.9L1022.4 866.6L1023.0 867.0L1023.6 866.5L1024.2 865.7L1024.8 866.1L1025.4 866.2L1025.9 864.7L1026.5 863.8L1027.1 862.9L1027.7 860.8L1028.3 860.2L1028.9 861.2L1029.4 860.6L1030.0 860.0L1030.6 860.4L1031.2 859.5L1031.8 857.5L1032.4 856.1L1033.0 854.5L1033.6 852.1L1034.2 849.7L1034.8 847.7L1035.4 845.4L1036.0 842.1L1036.6 840.5L1037.2 837.3L1037.8 831.9L1038.4 830.8L1039.0 830.3L1039.6 828.2L1040.2 823.4L1040.8 821.2L1041.4 821.5L1042.0 820.8L1042.6 816.8L1043.2 813.3L1043.8 813.9L1044.4 810.6L1045.0 809.7L1045.6 814.1L1046.2 814.8L1046.8 812.6L1047.4 815.5L1048.0 819.2L1048.6 820.6L1049.2 819.6L1049.8 820.0L1050.4 824.4L1051.0 825.8L1051.6 826.1L1052.2 830.5L1052.8 835.7L1053.4 836.5L1054.0 835.9L1054.6 839.3L1055.2 844.1L1055.8 848.6L1056.4 852.8L1057.0 856.3L1057.6 859.9L1058.2 863.6L1058.8 867.4L1059.4 871.1L1060.0 874.8L1060.6 878.5L1061.2 882.2L1061.8 885.8L1062.4 889.3L1063.0 892.8L1063.6 896.1L1064.2 899.3L1064.8 902.4L1065.4 905.3L1066.0 908.1L1066.6 910.7L1067.2 913.1L1067.8 915.3L1068.4 917.3L1069.0 919.1L1069.6 920.7L1070.2 922.0L1070.8 923.1L1071.4 924.0L1072.0 924.6L1072.6 925.0L1073.2 925.1L1073.8 924.9L1074.4 924.2L1075.0 923.1L1075.5 921.6L1076.1 919.6L1076.7 917.2L1077.3 914.4L1077.9 911.2L1078.5 907.7L1079.1 903.8L1079.7 899.6L1080.3 895.2L1080.8 890.5L1081.4 885.6L1082.0 880.5L1082.6 875.3L1083.2 869.9L1083.8 864.5L1084.4 859.0L1085.0 853.6L1085.5 848.1L1086.1 842.8L1086.7 837.6L1087.3 832.5L1087.9 827.6L1088.5 822.9L1089.1 818.4L1089.7 814.2L1090.3 810.4L1090.8 806.9L1091.4 803.7L1092.0 800.9L1092.6 798.5L1093.2 796.5L1093.8 794.9L1094.4 793.8L1095.0 793.1L1095.6 792.9L1096.1 793.1L1096.7 793.7L1097.3 794.7L1097.9 796.0L1098.5 797.7L1099.1 799.8L1099.7 802.2L1100.3 804.9L1100.8 807.9L1101.4 811.3L1102.0 814.9L1102.6 818.7L1103.2 822.7L1103.8 826.9L1104.4 831.3L1105.0 835.8L1105.6 840.4L1106.1 845.1L1106.7 849.8L1107.3 854.5L1107.9 859.1L1108.5 863.7L1109.1 868.3L1109.7 872.6L1110.3 876.9L1110.9 880.9L1111.4 884.7L1112.0 888.3L1112.6 891.6L1113.2 894.7L1113.8 897.4L1114.4 899.8L1115.0 901.9L1115.6 903.6L1116.1 904.9L1116.7 905.9L1117.3 906.5L1117.9 906.7L1118.5 906.5L1119.1 906.1L1119.7 905.5L1120.3 904.6L1120.9 903.5L1121.5 902.1L1122.1 900.5L1122.7 898.7L1123.2 896.7L1123.8 894.4L1124.4 892.0L1125.0 889.4L1125.6 886.7L1126.2 883.8L1126.8 880.8L1127.4 877.7L1128.0 874.5L1128.6 871.2L1129.2 867.9L1129.8 864.6L1130.4 861.2L1131.0 857.9L1131.5 854.6L1132.1 851.3L1132.7 848.1L1133.3 845.0L1133.9 842.0L1134.5 839.1L1135.1 836.4L1135.7 833.8L1136.3 831.4L1136.9 829.2L1137.5 827.1L1138.1 825.3L1138.7 823.7L1139.3 822.3L1139.8 821.2L1140.4 820.3L1141.0 819.7L1141.6 819.3L1142.2 819.2L1142.8 819.4L1143.4 819.9L1144.0 820.8L1144.6 822.1L1145.2 823.8L1145.8 825.7L1146.3 828.0L1146.9 830.6L1147.5 833.4L1148.1 836.5L1148.7 839.8L1149.3 843.3L1149.9 847.0L1150.5 850.7L1151.1 854.6L1151.6 858.5L1152.2 862.4L1152.8 866.4L1153.4 870.2L1154.0 874.0L1154.6 877.6L1155.2 881.1L1155.8 884.4L1156.4 887.5L1156.9 890.4L1157.5 893.0L1158.1 895.2L1158.7 897.2L1159.3 898.8L1159.9 900.1L1160.5 901.1L1161.1 901.6L1161.7 901.8L1162.2 900.5L1162.8 896.8L1163.4 891.0L1164.0 883.7L1164.6 875.6L1165.2 867.4L1165.7 860.1L1166.3 854.3L1166.9 850.6L1167.5 849.3L1168.1 849.3L1168.7 849.2L1169.2 849.1L1169.8 849.0L1170.4 848.8L1171.0 848.7L1171.6 848.5L1172.2 848.4L1172.7 848.4L1173.3 848.3L1173.9 848.3L1174.5 848.1L1175.1 847.8L1175.7 847.5L1176.3 847.1L1176.9 846.6L1177.5 846.2L1178.1 845.7L1178.7 845.3L1179.3 844.9L1179.9 844.7L1180.5 844.5L1181.1 844.4L1181.7 844.6L1182.2 845.2L1182.8 846.0L1183.4 847.2L1184.0 848.7L1184.5 850.4L1185.1 852.2L1185.7 854.1L1186.3 856.1L1186.8 858.1L1187.4 859.9L1188.0 861.6L1188.5 863.0L1189.1 864.2L1189.7 865.1L1190.3 865.6L1190.8 865.8L1191.4 865.8L1192.0 865.7L1192.6 865.4L1193.2 865.2L1193.7 864.8L1194.3 864.3L1194.9 863.8L1195.5 863.3L1196.1 862.6L1196.7 861.9L1197.2 861.2L1197.8 860.5L1198.4 859.7L1199.0 858.9L1199.6 858.1L1200.2 857.2L1200.7 856.4L1201.3 855.6L1201.9 854.9L1202.5 854.2L1203.1 853.5L1203.7 852.8L1204.2 852.3L1204.8 851.8L1205.4 851.3L1206.0 850.9L1206.6 850.7L1207.2 850.4L1207.7 850.3L1208.3 850.3L1208.9 850.3L1209.5 850.5L1210.1 850.8L1210.7 851.2L1211.2 851.7L1211.8 852.3L1212.4 852.9L1213.0 853.6L1213.6 854.4L1214.2 855.1L1214.7 855.9L1215.3 856.6L1215.9 857.3L1216.5 858.0L1217.1 858.6L1217.7 859.1L1218.2 859.5L1218.8 859.8L1219.4 859.9L1220.0 860.0L1220.6 860.0L1221.2 859.9L1221.7 859.8L1222.3 859.6L1222.9 859.4L1223.5 859.2L1224.1 858.9L1224.7 858.7L1225.2 858.4L1225.8 858.1L1226.4 857.7L1227.0 857.5L1227.6 857.2L1228.2 856.9L1228.7 856.7L1229.3 856.5L1229.9 856.3L1230.5 856.2L1231.1 856.1L1231.7 856.1L1232.2 856.1L1232.8 856.2L1233.4 856.3L1234.0 856.4L1234.6 856.5L1235.2 856.7L1235.7 856.9L1236.3 857.1L1236.9 857.3L1237.5 857.6L1238.1 857.8L1238.7 858.0L1239.2 858.2L1239.8 858.4L1240.4 858.6L1241.0 858.7L1241.6 858.9L1242.2 859.0L1242.7 859.0L1243.3 859.0L1243.9 859.0L1244.5 859.0L1245.1 858.9L1245.7 858.9L1246.3 858.8L1246.9 858.7L1247.5 858.5L1248.1 858.4L1248.7 858.2L1249.3 858.1L1249.9 857.9L1250.5 857.7L1251.1 857.6L1251.7 857.4L1252.3 857.2L1252.9 857.0L1253.5 856.9L1254.1 856.7L1254.7 856.6L1255.3 856.5L1255.9 856.4L1256.5 856.3L1257.1 856.2L1257.7 856.1L1258.3 856.1L1258.9 856.1L1259.5 856.1L1260.0 856.1L1260.6 856.1L1261.2 856.1L1261.8 856.2L1262.4 856.2L1263.0 856.2L1263.5 856.3L1264.1 856.3L1264.7 856.3L1265.3 856.4L1265.9 856.4L1266.5 856.5L1267.0 856.5L1267.6 856.6L1268.2 856.6L1268.8 856.7L1269.4 856.7L1270.0 856.8L1270.5 856.8L1271.1 856.9L1271.7 856.9L1272.3 856.9L1272.9 857.0L1273.5 857.0L1274.0 857.0L1274.6 857.0L1275.2 857.1L1275.8 857.1L1276.4 857.1L1277.0 857.1" stroke="#76cfd0" stroke-width="1.1" fill="none" stroke-linejoin="round" />
<path d="M969.0 857.3L969.2 857.7L969.7 857.7L970.3 857.7L970.9 857.7L971.5 857.7L972.0 857.7L972.6 857.7L973.2 857.7L973.7 857.7L974.3 857.7L974.9 857.7L975.5 857.7L976.0 857.7L976.6 857.7L977.2 857.7L977.7 857.7L978.3 857.7L978.9 857.7L979.5 857.7L980.0 857.9L980.6 858.3L981.2 858.7L981.7 859.3L982.3 859.9L982.9 860.6L983.5 861.4L984.0 862.1L984.6 862.9L985.2 863.5L985.8 864.0L986.3 864.6L986.9 864.9L987.5 865.1L988.0 865.4L988.6 866.8L989.2 867.2L989.7 864.0L990.3 860.9L990.8 859.0L991.4 856.5L991.9 854.9L992.5 855.0L993.0 856.9L993.6 859.2L994.1 860.9L994.7 864.0L995.2 867.6L995.7 872.5L996.3 876.5L996.8 879.6L997.4 879.9L997.9 879.3L998.4 878.5L999.0 874.8L999.5 869.4L1000.1 864.6L1000.6 864.3L1001.1 864.5L1001.7 862.3L1002.2 861.0L1002.8 861.5L1003.4 863.2L1004.0 866.5L1004.6 870.9L1005.1 873.1L1005.7 870.5L1006.3 866.3L1006.9 863.0L1007.5 860.3L1008.1 857.5L1008.6 859.3L1009.2 861.1L1009.8 860.1L1010.3 862.6L1010.9 865.2L1011.5 864.9L1012.0 865.9L1012.6 866.2L1013.2 866.1L1013.7 865.8L1014.3 868.4L1014.9 869.0L1015.5 868.7L1016.0 870.8L1016.6 870.6L1017.2 873.4L1017.8 877.3L1018.4 881.0L1019.0 885.8L1019.6 889.0L1020.2 891.8L1020.8 894.5L1021.4 897.9L1022.0 901.8L1022.6 903.8L1023.2 906.2L1023.8 908.6L1024.4 910.4L1025.0 911.7L1025.6 911.4L1026.1 910.2L1026.7 910.0L1027.3 907.4L1027.9 903.9L1028.5 902.4L1029.1 897.1L1029.7 891.2L1030.3 887.5L1030.9 881.1L1031.4 875.3L1032.0 868.0L1032.6 860.4L1033.2 853.4L1033.8 845.3L1034.4 837.2L1035.0 828.7L1035.6 820.0L1036.2 812.1L1036.7 803.7L1037.3 794.6L1037.9 789.2L1038.5 780.9L1039.1 772.2L1039.7 767.3L1040.3 759.9L1040.9 755.9L1041.5 753.5L1042.1 745.4L1042.6 741.4L1043.2 739.8L1043.8 736.9L1044.4 737.0L1045.0 736.5L1045.6 738.3L1046.2 739.4L1046.8 741.3L1047.4 744.9L1048.0 748.0L1048.6 751.2L1049.2 753.9L1049.8 758.4L1050.4 765.8L1051.0 775.0L1051.6 783.7L1052.2 791.3L1052.8 797.0L1053.4 803.6L1054.0 812.3L1054.6 821.3L1055.2 831.0L1055.8 840.5L1056.4 848.6L1057.0 857.8L1057.6 867.1L1058.2 876.3L1058.8 885.4L1059.4 894.2L1060.0 902.8L1060.6 911.0L1061.2 918.9L1061.7 926.4L1062.3 933.3L1062.9 939.8L1063.5 945.7L1064.1 951.0L1064.7 955.6L1065.3 959.6L1065.9 962.9L1066.5 965.5L1067.1 967.4L1067.7 968.5L1068.3 968.9L1068.9 968.6L1069.5 967.8L1070.1 966.6L1070.7 964.8L1071.3 962.5L1071.9 959.7L1072.4 956.4L1073.0 952.7L1073.6 948.6L1074.2 944.1L1074.8 939.1L1075.4 933.9L1076.0 928.2L1076.6 922.3L1077.1 916.1L1077.7 909.7L1078.3 903.1L1078.9 896.3L1079.5 889.3L1080.1 882.3L1080.7 875.2L1081.3 868.1L1081.9 861.0L1082.4 854.0L1083.0 847.1L1083.6 840.3L1084.2 833.6L1084.8 827.2L1085.4 821.0L1086.0 815.1L1086.6 809.5L1087.1 804.2L1087.7 799.3L1088.3 794.7L1088.9 790.6L1089.5 786.9L1090.1 783.6L1090.7 780.9L1091.3 778.6L1091.8 776.8L1092.4 775.5L1093.0 774.7L1093.6 774.4L1094.2 774.7L1094.8 775.6L1095.4 777.0L1096.0 778.9L1096.6 781.4L1097.1 784.4L1097.7 787.9L1098.3 791.8L1098.9 796.1L1099.5 800.8L1100.1 805.8L1100.7 811.1L1101.3 816.6L1101.9 822.4L1102.4 828.2L1103.0 834.2L1103.6 840.1L1104.2 846.1L1104.8 851.9L1105.4 857.7L1106.0 863.2L1106.6 868.5L1107.2 873.5L1107.7 878.2L1108.3 882.5L1108.9 886.4L1109.5 889.9L1110.1 892.9L1110.7 895.4L1111.3 897.3L1111.9 898.7L1112.5 899.6L1113.1 899.9L1113.6 899.8L1114.2 899.5L1114.8 899.1L1115.4 898.5L1116.0 897.7L1116.6 896.8L1117.2 895.8L1117.8 894.5L1118.4 893.2L1119.0 891.7L1119.6 890.1L1120.2 888.4L1120.8 886.5L1121.3 884.6L1121.9 882.6L1122.5 880.5L1123.1 878.4L1123.7 876.2L1124.3 874.0L1124.9 871.8L1125.5 869.6L1126.1 867.3L1126.7 865.1L1127.3 863.0L1127.9 860.8L1128.5 858.8L1129.1 856.8L1129.6 854.8L1130.2 853.0L1130.8 851.3L1131.4 849.7L1132.0 848.2L1132.6 846.8L1133.2 845.6L1133.8 844.6L1134.4 843.6L1135.0 842.9L1135.6 842.3L1136.2 841.9L1136.8 841.6L1137.4 841.5L1137.9 841.6L1138.5 841.9L1139.1 842.3L1139.7 842.9L1140.3 843.6L1140.9 844.6L1141.4 845.6L1142.0 846.8L1142.6 848.1L1143.2 849.6L1143.8 851.1L1144.4 852.8L1144.9 854.5L1145.5 856.3L1146.1 858.2L1146.7 860.0L1147.3 862.0L1147.9 863.9L1148.4 865.8L1149.0 867.7L1149.6 869.5L1150.2 871.3L1150.8 873.0L1151.4 874.7L1151.9 876.2L1152.5 877.7L1153.1 879.0L1153.7 880.2L1154.3 881.3L1154.9 882.2L1155.4 882.9L1156.0 883.5L1156.6 884.0L1157.2 884.2L1157.8 884.3L1158.4 883.6L1159.0 881.6L1159.6 878.3L1160.2 874.0L1160.8 868.9L1161.4 863.4L1162.0 857.6L1162.6 852.0L1163.2 847.0L1163.8 842.7L1164.4 839.4L1165.0 837.4L1165.5 836.7L1166.1 836.8L1166.7 837.1L1167.3 837.7L1167.9 838.5L1168.5 839.5L1169.1 840.7L1169.7 842.0L1170.3 843.5L1170.9 845.1L1171.5 846.7L1172.1 848.4L1172.7 850.2L1173.2 851.9L1173.8 853.5L1174.4 855.1L1175.0 856.6L1175.6 857.9L1176.2 859.1L1176.8 860.1L1177.4 860.9L1178.0 861.5L1178.6 861.8L1179.2 861.9L1179.7 861.9L1180.3 861.8L1180.9 861.6L1181.5 861.4L1182.1 861.1L1182.7 860.7L1183.2 860.3L1183.8 859.8L1184.4 859.3L1185.0 858.8L1185.6 858.2L1186.2 857.6L1186.7 856.9L1187.3 856.3L1187.9 855.6L1188.5 855.0L1189.1 854.3L1189.7 853.7L1190.2 853.1L1190.8 852.5L1191.4 851.9L1192.0 851.4L1192.6 850.9L1193.2 850.5L1193.7 850.1L1194.3 849.8L1194.9 849.6L1195.5 849.4L1196.1 849.3L1196.7 849.3L1197.3 849.4L1197.9 849.6L1198.5 849.9L1199.1 850.4L1199.7 851.0L1200.2 851.7L1200.8 852.6L1201.4 853.5L1202.0 854.5L1202.6 855.6L1203.2 856.7L1203.8 857.9L1204.4 859.0L1205.0 860.2L1205.6 861.4L1206.2 862.5L1206.8 863.5L1207.4 864.5L1208.0 865.5L1208.6 866.3L1209.2 867.0L1209.8 867.6L1210.4 868.1L1211.0 868.5L1211.6 868.7L1212.2 868.7L1212.8 868.7L1213.4 868.5L1214.0 868.1L1214.6 867.6L1215.2 867.0L1215.8 866.3L1216.4 865.5L1217.0 864.5L1217.6 863.5L1218.2 862.5L1218.8 861.4L1219.4 860.2L1220.0 859.0L1220.6 857.9L1221.2 856.7L1221.8 855.6L1222.4 854.5L1223.0 853.5L1223.6 852.6L1224.2 851.7L1224.8 851.0L1225.4 850.4L1226.0 849.9L1226.6 849.6L1227.2 849.4L1227.8 849.3L1228.3 849.4L1228.9 849.5L1229.5 849.8L1230.1 850.2L1230.6 850.7L1231.2 851.3L1231.8 852.0L1232.4 852.7L1232.9 853.5L1233.5 854.3L1234.1 855.1L1234.7 856.0L1235.2 856.8L1235.8 857.6L1236.4 858.3L1237.0 859.0L1237.5 859.5L1238.1 860.0L1238.7 860.4L1239.3 860.7L1239.8 860.9L1240.4 861.0L1241.0 860.9L1241.6 860.9L1242.1 860.7L1242.7 860.6L1243.3 860.4L1243.9 860.1L1244.4 859.9L1245.0 859.5L1245.6 859.2L1246.2 858.9L1246.7 858.5L1247.3 858.2L1247.9 857.9L1248.5 857.5L1249.0 857.2L1249.6 856.9L1250.2 856.7L1250.7 856.5L1251.3 856.3L1251.9 856.2L1252.5 856.1L1253.0 856.1L1253.6 856.1L1254.2 856.2L1254.8 856.2L1255.4 856.3L1256.0 856.4L1256.6 856.5L1257.2 856.6L1257.8 856.7L1258.4 856.9L1259.0 857.0L1259.6 857.2L1260.1 857.4L1260.7 857.5L1261.3 857.7L1261.9 857.8L1262.5 857.9L1263.1 858.1L1263.7 858.2L1264.3 858.3L1264.9 858.3L1265.5 858.4L1266.1 858.4L1266.7 858.4L1267.2 858.4L1267.8 858.4L1268.4 858.3L1268.9 858.3L1269.5 858.2L1270.1 858.1L1270.7 858.0L1271.2 857.9L1271.8 857.8L1272.4 857.6L1273.0 857.5L1273.5 857.4L1274.1 857.3L1274.7 857.2L1275.2 857.2L1275.8 857.1L1276.4 857.1L1277.0 857.1" stroke="#fad81f" stroke-width="1.2" fill="none" stroke-linejoin="round" /></g>
<rect x="69.5" y="729.5" width="279" height="112" fill="#161616" fill-opacity="0.8" stroke="#383838"/>
<rect x="78" y="738" width="19" height="19" fill="#f06292"/>
<text x="103.3" y="752.7" font-size="13" fill="#e4e4e4" textLength="234.0" lengthAdjust="spacing">H1:SUS-ITMX_L2_MASTER_OUT_UL_DQ</text>
<rect x="78" y="763" width="19" height="19" fill="#6b8e4e"/>
<text x="103.3" y="777.7" font-size="13" fill="#e4e4e4" textLength="231.2" lengthAdjust="spacing">H1:SUS-ITMX_L2_MASTER_OUT_LL_DQ</text>
<rect x="78" y="788" width="19" height="19" fill="#76cfd0"/>
<text x="103.3" y="802.7" font-size="13" fill="#e4e4e4" textLength="235.2" lengthAdjust="spacing">H1:SUS-ITMX_L2_MASTER_OUT_UR_DQ</text>
<rect x="78" y="813" width="19" height="19" fill="#fad81f"/>
<text x="103.3" y="827.7" font-size="13" fill="#e4e4e4" textLength="232.5" lengthAdjust="spacing">H1:SUS-ITMX_L2_MASTER_OUT_LR_DQ</text>
<path d="M569.0 719V998" stroke="#fff" stroke-width="2.4" stroke-dasharray="10.2 1.8" stroke-dashoffset="5.5"/>
<path d="M1241.9 719V998" stroke="#e2e2e2" stroke-width="2.4" stroke-dasharray="10.2 1.8" stroke-dashoffset="5.5"/>
<rect x="571.0" y="978" width="122" height="17" fill="#000"/>
<text x="573.2" y="989.8" font-size="13" fill="#f0f0f0" textLength="116.0" lengthAdjust="spacing">T1=-2s,89ms,725µs</text>
<text x="1216.0" y="989.8" font-size="13" fill="#f0f0f0" textLength="22.1" lengthAdjust="spacing">T2=</text>
<rect x="840.5" y="730" width="128.8" height="35" fill="#000"/>
<text x="846.5" y="749.9" font-size="13" fill="#f0f0f0" textLength="22.1" lengthAdjust="spacing">ΔT=</text>
<text x="872.6" y="739.8" font-size="13" fill="#f0f0f0" textLength="89.8" lengthAdjust="spacing">2s,89ms,725µs</text>
<text x="872.6" y="759.8" font-size="13" fill="#f0f0f0" textLength="74.6" lengthAdjust="spacing">0.478532 Hz</text>
<g shape-rendering="crispEdges"><path d="M115.5 719V998" stroke="#fff" stroke-opacity="0.078"/>
<path d="M195.5 719V998" stroke="#fff" stroke-opacity="0.078"/>
<path d="M276.5 719V998" stroke="#fff" stroke-opacity="0.115"/>
<path d="M356.5 719V998" stroke="#fff" stroke-opacity="0.078"/>
<path d="M437.5 719V998" stroke="#fff" stroke-opacity="0.078"/>
<path d="M517.5 719V998" stroke="#fff" stroke-opacity="0.078"/>
<path d="M598.5 719V998" stroke="#fff" stroke-opacity="0.115"/>
<path d="M678.5 719V998" stroke="#fff" stroke-opacity="0.078"/>
<path d="M759.5 719V998" stroke="#fff" stroke-opacity="0.078"/>
<path d="M839.5 719V998" stroke="#fff" stroke-opacity="0.078"/>
<path d="M920.5 719V998" stroke="#fff" stroke-opacity="0.115"/>
<path d="M1000.5 719V998" stroke="#fff" stroke-opacity="0.078"/>
<path d="M1081.5 719V998" stroke="#fff" stroke-opacity="0.078"/>
<path d="M1161.5 719V998" stroke="#fff" stroke-opacity="0.078"/>
<path d="M1242.5 719V998" stroke="#fff" stroke-opacity="0.115"/>
<path d="M60 742.5H1277" stroke="#fff" stroke-opacity="0.072"/>
<path d="M60 780.5H1277" stroke="#fff" stroke-opacity="0.072"/>
<path d="M60 819.5H1277" stroke="#fff" stroke-opacity="0.072"/>
<path d="M60 857.5H1277" stroke="#fff" stroke-opacity="0.072"/>
<path d="M60 895.5H1277" stroke="#fff" stroke-opacity="0.072"/>
<path d="M60 934.5H1277" stroke="#fff" stroke-opacity="0.072"/>
<path d="M60 972.5H1277" stroke="#fff" stroke-opacity="0.072"/></g>
<g><path d="M59.5 719V998.5H1277" stroke="#969696" fill="none"/>
<text x="266.6" y="1013.8" font-size="13" fill="#d8d8d8" textLength="17.8" lengthAdjust="spacing">-3s</text>
<text x="588.6" y="1013.8" font-size="13" fill="#d8d8d8" textLength="17.8" lengthAdjust="spacing">-2s</text>
<text x="910.6" y="1013.8" font-size="13" fill="#d8d8d8" textLength="17.8" lengthAdjust="spacing">-1s</text>
<text x="1237.8" y="1013.8" font-size="13" fill="#d8d8d8">0</text>
<text x="46.6" y="747.2" font-size="13" fill="#d8d8d8">6</text>
<text x="46.6" y="785.2" font-size="13" fill="#d8d8d8">4</text>
<text x="46.6" y="824.2" font-size="13" fill="#d8d8d8">2</text>
<text x="46.6" y="862.2" font-size="13" fill="#d8d8d8">0</text>
<text x="42.4" y="900.2" font-size="13" fill="#d8d8d8" textLength="11.6" lengthAdjust="spacing">-2</text>
<text x="42.4" y="939.2" font-size="13" fill="#d8d8d8" textLength="11.6" lengthAdjust="spacing">-4</text>
<text x="42.4" y="977.2" font-size="13" fill="#d8d8d8" textLength="11.6" lengthAdjust="spacing">-6</text>
<text x="-13.3" y="859.0" font-size="13" fill="#d8d8d8" textLength="95.7" lengthAdjust="spacing" transform="rotate(-90 34.6 859.0)">counts (x1e+06)</text></g>
</g>
<g id="plot6">
<clipPath id="c5"><rect x="1324" y="719" width="1216" height="279"/></clipPath>
<g clip-path="url(#c5)"><path d="M1323.5 859.5H1411M1516 859.5H1628" stroke="#fdebd0" stroke-width="1"/>
<path d="M1412 859.5H1472M1630 859.5H2229" stroke="#b83db8" stroke-width="1"/>
<path d="M1472 859.5H1516M1600 858.5H2229" stroke="#356058" stroke-width="1"/>
<path d="M1644 860.5H2229" stroke="#f48b7f" stroke-width="1"/>
<path d="M1650 859.5H1698M1781 858.5H1836" stroke="#fdebd0" stroke-width="1"/>
<path d="M2229.0 859.2L2229.2 858.5L2229.7 858.5L2230.3 858.5L2230.9 858.5L2231.5 858.5L2232.0 858.5L2232.6 858.5L2233.2 858.5L2233.7 858.5L2234.3 858.5L2234.9 858.5L2235.5 858.5L2236.0 858.5L2236.6 858.5L2237.2 858.5L2237.8 858.5L2238.3 858.5L2238.9 858.5L2239.5 858.5L2240.1 858.7L2240.6 859.0L2241.2 859.4L2241.8 859.8L2242.4 860.4L2243.0 861.0L2243.6 861.7L2244.1 862.4L2244.7 863.0L2245.3 864.0L2245.9 865.0L2246.5 865.3L2247.1 866.2L2247.6 866.8L2248.2 866.6L2248.8 866.9L2249.4 866.3L2250.0 867.1L2250.6 867.6L2251.1 866.4L2251.7 865.7L2252.3 865.0L2252.9 863.6L2253.5 861.0L2254.1 857.7L2254.6 855.6L2255.2 854.3L2255.8 853.6L2256.4 854.7L2257.0 854.2L2257.6 855.0L2258.1 854.4L2258.7 851.8L2259.3 850.0L2259.9 847.8L2260.5 847.2L2261.1 847.4L2261.6 844.5L2262.2 844.2L2262.8 846.2L2263.3 846.8L2263.9 847.8L2264.4 846.9L2264.9 846.6L2265.5 851.0L2266.0 853.5L2266.6 850.8L2267.1 851.1L2267.7 852.0L2268.3 849.1L2268.8 846.1L2269.4 845.1L2270.0 846.5L2270.6 846.8L2271.2 845.0L2271.8 844.4L2272.3 844.6L2272.9 841.9L2273.5 841.2L2274.1 843.1L2274.7 843.1L2275.3 844.7L2275.8 847.4L2276.4 849.5L2277.0 850.0L2277.6 851.7L2278.2 857.1L2278.8 858.3L2279.3 856.2L2279.9 858.8L2280.5 862.0L2281.1 862.8L2281.7 861.4L2282.3 861.7L2282.8 861.6L2283.4 859.0L2284.0 858.2L2284.6 857.9L2285.2 857.7L2285.8 856.7L2286.3 854.4L2286.9 852.8L2287.5 851.0L2288.1 849.2L2288.7 846.3L2289.3 843.0L2289.8 842.9L2290.4 841.7L2291.0 839.9L2291.6 839.7L2292.2 838.9L2292.8 838.3L2293.3 839.1L2293.9 838.4L2294.5 838.9L2295.1 841.6L2295.7 842.7L2296.3 844.0L2296.9 846.4L2297.5 849.5L2298.1 852.2L2298.7 854.3L2299.3 858.4L2299.8 862.4L2300.4 866.6L2301.0 870.6L2301.6 873.9L2302.2 877.1L2302.8 880.6L2303.4 883.4L2304.0 887.7L2304.6 891.8L2305.2 893.5L2305.7 899.0L2306.3 903.2L2306.9 900.9L2307.5 904.7L2308.1 907.2L2308.7 907.4L2309.3 909.2L2309.9 909.0L2310.5 909.1L2311.1 907.3L2311.7 906.1L2312.3 908.3L2312.9 903.5L2313.5 899.0L2314.1 899.8L2314.7 895.8L2315.3 890.9L2315.9 890.7L2316.5 887.7L2317.1 883.6L2317.7 879.7L2318.3 874.1L2318.9 869.4L2319.5 864.8L2320.1 860.0L2320.7 855.2L2321.2 850.3L2321.8 845.4L2322.4 840.5L2323.0 835.7L2323.6 831.0L2324.2 826.3L2324.8 821.8L2325.4 817.5L2326.0 813.3L2326.6 809.4L2327.2 805.8L2327.8 802.4L2328.4 799.3L2329.0 796.5L2329.6 794.1L2330.2 792.0L2330.8 790.2L2331.4 788.9L2332.0 787.9L2332.6 787.3L2333.2 787.1L2333.8 787.3L2334.4 788.0L2335.0 789.1L2335.6 790.7L2336.2 792.7L2336.7 795.1L2337.3 797.9L2337.9 801.0L2338.5 804.6L2339.1 808.4L2339.7 812.6L2340.3 817.1L2340.9 821.7L2341.5 826.7L2342.0 831.7L2342.6 837.0L2343.2 842.3L2343.8 847.8L2344.4 853.2L2345.0 858.7L2345.6 864.1L2346.2 869.4L2346.8 874.7L2347.3 879.8L2347.9 884.7L2348.5 889.4L2349.1 893.8L2349.7 898.0L2350.3 901.9L2350.9 905.4L2351.5 908.6L2352.1 911.4L2352.6 913.8L2353.2 915.8L2353.8 917.3L2354.4 918.4L2355.0 919.1L2355.6 919.3L2356.2 919.2L2356.8 918.6L2357.3 917.7L2357.9 916.4L2358.5 914.7L2359.1 912.7L2359.7 910.4L2360.3 907.8L2360.9 904.8L2361.5 901.6L2362.1 898.1L2362.6 894.4L2363.2 890.5L2363.8 886.5L2364.4 882.2L2365.0 877.9L2365.6 873.4L2366.2 868.9L2366.8 864.4L2367.4 859.9L2367.9 855.4L2368.5 850.9L2369.1 846.6L2369.7 842.3L2370.3 838.3L2370.9 834.3L2371.5 830.7L2372.1 827.2L2372.6 824.0L2373.2 821.0L2373.8 818.4L2374.4 816.1L2375.0 814.1L2375.6 812.4L2376.2 811.1L2376.8 810.2L2377.4 809.6L2377.9 809.5L2378.5 809.6L2379.1 810.0L2379.7 810.6L2380.3 811.5L2380.9 812.7L2381.5 814.1L2382.1 815.7L2382.7 817.6L2383.3 819.6L2383.9 821.9L2384.5 824.3L2385.1 826.9L2385.7 829.6L2386.3 832.5L2386.9 835.5L2387.5 838.6L2388.1 841.7L2388.7 844.9L2389.3 848.2L2389.9 851.4L2390.5 854.7L2391.1 857.9L2391.7 861.0L2392.3 864.1L2392.9 867.1L2393.5 870.0L2394.1 872.7L2394.7 875.3L2395.3 877.8L2395.9 880.0L2396.5 882.1L2397.1 883.9L2397.7 885.5L2398.3 886.9L2398.9 888.1L2399.5 889.0L2400.1 889.6L2400.7 890.0L2401.3 890.2L2401.9 890.0L2402.5 889.6L2403.1 888.9L2403.6 887.9L2404.2 886.6L2404.8 885.1L2405.4 883.3L2406.0 881.3L2406.6 879.1L2407.2 876.7L2407.8 874.1L2408.4 871.4L2408.9 868.6L2409.5 865.6L2410.1 862.6L2410.7 859.6L2411.3 856.6L2411.9 853.5L2412.5 850.5L2413.1 847.6L2413.7 844.7L2414.2 842.0L2414.8 839.5L2415.4 837.1L2416.0 834.9L2416.6 832.9L2417.2 831.1L2417.8 829.6L2418.4 828.3L2419.0 827.3L2419.6 826.6L2420.1 826.1L2420.7 826.0L2421.3 826.7L2421.9 828.6L2422.5 831.7L2423.1 835.9L2423.7 840.7L2424.3 846.1L2424.9 851.6L2425.5 856.9L2426.1 861.8L2426.7 865.9L2427.3 869.1L2427.9 871.0L2428.5 871.7L2429.1 871.7L2429.7 871.5L2430.3 871.3L2430.8 871.0L2431.4 870.7L2432.0 870.3L2432.6 869.8L2433.2 869.3L2433.8 868.8L2434.3 868.3L2434.9 867.8L2435.5 867.2L2436.1 866.7L2436.7 866.3L2437.3 865.9L2437.8 865.5L2438.4 865.3L2439.0 865.1L2439.6 864.9L2440.2 864.9L2440.8 864.7L2441.4 864.3L2442.0 863.6L2442.6 862.7L2443.2 861.6L2443.7 860.3L2444.3 858.8L2444.9 857.3L2445.5 855.6L2446.1 854.0L2446.7 852.5L2447.3 851.0L2447.9 849.7L2448.5 848.6L2449.1 847.6L2449.7 847.0L2450.3 846.6L2450.9 846.4L2451.5 846.5L2452.1 846.8L2452.7 847.3L2453.2 848.0L2453.8 848.9L2454.4 850.0L2455.0 851.1L2455.6 852.4L2456.2 853.8L2456.8 855.3L2457.4 856.8L2458.0 858.4L2458.6 859.9L2459.2 861.3L2459.8 862.7L2460.3 864.0L2460.9 865.2L2461.5 866.3L2462.1 867.1L2462.7 867.8L2463.3 868.4L2463.9 868.7L2464.5 868.8L2465.1 868.7L2465.7 868.6L2466.3 868.3L2466.9 867.9L2467.5 867.5L2468.1 866.9L2468.7 866.3L2469.3 865.6L2469.9 864.9L2470.5 864.1L2471.1 863.2L2471.7 862.4L2472.3 861.5L2472.9 860.6L2473.5 859.7L2474.1 858.9L2474.7 858.1L2475.3 857.3L2475.9 856.6L2476.5 856.0L2477.1 855.5L2477.7 855.0L2478.3 854.7L2478.8 854.4L2479.4 854.2L2480.0 854.2L2480.6 854.2L2481.2 854.4L2481.8 854.7L2482.4 855.1L2483.0 855.6L2483.5 856.2L2484.1 856.8L2484.7 857.5L2485.3 858.3L2485.9 859.1L2486.5 859.8L2487.0 860.6L2487.6 861.3L2488.2 861.9L2488.8 862.5L2489.4 863.0L2490.0 863.4L2490.5 863.7L2491.1 863.9L2491.7 863.9L2492.3 863.9L2492.9 863.8L2493.5 863.7L2494.1 863.6L2494.7 863.4L2495.3 863.2L2495.9 862.9L2496.5 862.7L2497.1 862.4L2497.7 862.0L2498.3 861.7L2498.9 861.3L2499.5 861.0L2500.1 860.6L2500.7 860.3L2501.3 860.0L2501.9 859.6L2502.5 859.3L2503.1 859.1L2503.7 858.8L2504.3 858.6L2504.9 858.4L2505.5 858.3L2506.1 858.2L2506.7 858.1L2507.3 858.1L2507.9 858.1L2508.5 858.1L2509.1 858.2L2509.7 858.2L2510.3 858.3L2510.9 858.4L2511.5 858.5L2512.1 858.6L2512.7 858.7L2513.3 858.8L2513.9 859.0L2514.5 859.1L2515.1 859.2L2515.7 859.4L2516.2 859.5L2516.8 859.7L2517.4 859.8L2518.0 859.9L2518.6 860.0L2519.2 860.1L2519.8 860.2L2520.4 860.3L2521.0 860.3L2521.6 860.4L2522.2 860.4L2522.8 860.4L2523.4 860.4L2524.0 860.4L2524.6 860.4L2525.2 860.3L2525.8 860.3L2526.4 860.3L2527.0 860.2L2527.6 860.2L2528.1 860.1L2528.7 860.0L2529.3 860.0L2529.9 859.9L2530.5 859.8L2531.1 859.7L2531.7 859.7L2532.3 859.6L2532.9 859.5L2533.5 859.4L2534.0 859.4L2534.6 859.3L2535.2 859.3L2535.8 859.2L2536.4 859.2L2537.0 859.1L2537.6 859.1L2538.2 859.1L2538.8 859.1L2539.4 859.1" stroke="#f48b7f" stroke-width="1.1" fill="none" stroke-linejoin="round" />
<path d="M2229.0 859.2L2229.2 859.1L2229.7 859.1L2230.3 859.1L2230.9 859.1L2231.5 859.1L2232.0 859.1L2232.6 859.1L2233.2 859.1L2233.7 859.1L2234.3 859.1L2234.9 859.1L2235.5 859.1L2236.0 859.1L2236.6 859.1L2237.2 859.1L2237.8 859.1L2238.3 859.1L2238.9 859.1L2239.5 859.0L2240.0 858.9L2240.6 858.7L2241.2 858.4L2241.8 858.1L2242.3 857.7L2242.9 857.3L2243.5 856.8L2244.0 856.4L2244.6 856.0L2245.2 855.6L2245.8 855.4L2246.3 855.3L2246.9 855.1L2247.5 854.6L2248.0 854.4L2248.6 854.9L2249.2 855.4L2249.8 854.7L2250.4 854.5L2251.0 856.0L2251.5 856.9L2252.1 857.4L2252.7 857.9L2253.3 858.6L2253.9 860.0L2254.5 861.1L2255.0 860.4L2255.6 860.1L2256.2 858.2L2256.7 856.7L2257.3 854.9L2257.9 849.6L2258.4 845.3L2259.0 839.6L2259.6 837.4L2260.1 838.3L2260.7 839.0L2261.3 837.2L2261.8 838.0L2262.4 841.2L2262.9 843.2L2263.5 844.4L2264.0 846.9L2264.6 851.3L2265.1 852.6L2265.7 852.5L2266.3 849.1L2266.9 848.2L2267.5 848.7L2268.1 847.8L2268.6 848.3L2269.1 849.5L2269.7 849.5L2270.2 848.2L2270.8 848.1L2271.3 852.2L2271.8 855.5L2272.4 854.8L2272.9 853.8L2273.5 853.6L2274.0 853.8L2274.5 852.9L2275.1 851.5L2275.6 853.4L2276.2 853.7L2276.7 850.4L2277.3 848.5L2277.8 848.3L2278.4 849.9L2278.9 850.3L2279.5 847.6L2280.1 844.6L2280.7 841.6L2281.2 837.1L2281.8 834.9L2282.4 832.4L2282.9 829.5L2283.5 824.6L2284.1 818.6L2284.7 816.6L2285.2 813.6L2285.8 809.4L2286.4 807.1L2286.9 807.2L2287.5 807.8L2288.1 808.1L2288.7 809.7L2289.3 812.4L2289.9 814.6L2290.5 817.5L2291.1 821.3L2291.6 826.4L2292.2 832.4L2292.8 838.2L2293.4 844.5L2294.0 851.3L2294.6 858.0L2295.2 865.6L2295.8 874.3L2296.4 882.8L2296.9 891.1L2297.5 899.2L2298.1 908.0L2298.7 917.1L2299.3 925.5L2299.9 931.7L2300.5 938.0L2301.1 945.7L2301.7 951.3L2302.2 957.7L2302.8 965.8L2303.4 969.4L2304.0 974.9L2304.6 978.7L2305.2 978.3L2305.8 980.3L2306.4 980.7L2307.0 982.1L2307.6 982.8L2308.2 983.6L2308.8 982.5L2309.4 977.9L2310.0 973.1L2310.6 966.0L2311.2 961.2L2311.7 956.4L2312.3 951.6L2312.9 945.8L2313.5 939.2L2314.1 932.0L2314.7 922.5L2315.3 913.1L2315.9 903.2L2316.5 894.1L2317.1 884.8L2317.7 874.0L2318.3 863.9L2318.9 854.1L2319.5 844.2L2320.1 834.3L2320.7 824.7L2321.3 815.3L2321.9 806.1L2322.5 797.3L2323.1 788.9L2323.7 780.9L2324.3 773.5L2324.9 766.6L2325.5 760.3L2326.1 754.7L2326.7 749.7L2327.3 745.4L2327.9 741.9L2328.5 739.1L2329.1 737.2L2329.7 736.0L2330.3 735.6L2330.9 735.9L2331.5 736.8L2332.1 738.3L2332.7 740.3L2333.3 743.0L2333.9 746.2L2334.4 750.0L2335.0 754.2L2335.6 759.0L2336.2 764.2L2336.8 769.9L2337.4 776.0L2338.0 782.4L2338.6 789.1L2339.2 796.2L2339.8 803.5L2340.4 811.0L2341.0 818.6L2341.6 826.4L2342.2 834.2L2342.8 842.1L2343.3 849.9L2343.9 857.7L2344.5 865.3L2345.1 872.8L2345.7 880.1L2346.3 887.2L2346.9 893.9L2347.5 900.3L2348.1 906.4L2348.7 912.1L2349.3 917.3L2349.9 922.1L2350.5 926.3L2351.1 930.1L2351.6 933.3L2352.2 936.0L2352.8 938.0L2353.4 939.5L2354.0 940.4L2354.6 940.7L2355.2 940.5L2355.8 939.7L2356.4 938.4L2356.9 936.6L2357.5 934.3L2358.1 931.6L2358.7 928.4L2359.3 924.8L2359.9 920.8L2360.4 916.4L2361.0 911.7L2361.6 906.7L2362.2 901.5L2362.8 896.0L2363.4 890.5L2363.9 884.7L2364.5 879.0L2365.1 873.2L2365.7 867.4L2366.3 861.7L2366.9 856.1L2367.4 850.7L2368.0 845.4L2368.6 840.4L2369.2 835.8L2369.8 831.4L2370.4 827.4L2370.9 823.8L2371.5 820.6L2372.1 817.8L2372.7 815.5L2373.3 813.7L2373.9 812.4L2374.4 811.7L2375.0 811.4L2375.6 811.6L2376.2 812.2L2376.8 813.2L2377.4 814.6L2377.9 816.3L2378.5 818.4L2379.1 820.8L2379.7 823.5L2380.3 826.4L2380.9 829.6L2381.4 833.0L2382.0 836.6L2382.6 840.3L2383.2 844.1L2383.8 847.9L2384.4 851.7L2384.9 855.4L2385.5 859.1L2386.1 862.7L2386.7 866.1L2387.3 869.3L2387.9 872.3L2388.4 875.0L2389.0 877.4L2389.6 879.4L2390.2 881.2L2390.8 882.5L2391.4 883.5L2391.9 884.1L2392.5 884.3L2393.1 884.2L2393.7 883.9L2394.3 883.3L2394.9 882.6L2395.5 881.6L2396.1 880.4L2396.7 879.1L2397.3 877.5L2397.9 875.8L2398.5 873.9L2399.1 871.9L2399.7 869.7L2400.3 867.5L2400.9 865.1L2401.4 862.7L2402.0 860.2L2402.6 857.7L2403.2 855.2L2403.8 852.6L2404.4 850.1L2405.0 847.6L2405.6 845.2L2406.2 842.8L2406.8 840.6L2407.4 838.4L2408.0 836.4L2408.6 834.5L2409.2 832.8L2409.8 831.3L2410.4 829.9L2411.0 828.7L2411.5 827.7L2412.1 827.0L2412.7 826.4L2413.3 826.1L2413.9 826.0L2414.5 826.3L2415.1 827.1L2415.7 828.5L2416.3 830.4L2416.9 832.8L2417.5 835.6L2418.1 838.8L2418.7 842.3L2419.3 846.0L2419.8 850.0L2420.4 854.1L2421.0 858.2L2421.6 862.3L2422.2 866.2L2422.8 870.0L2423.4 873.5L2424.0 876.7L2424.6 879.5L2425.2 881.9L2425.8 883.8L2426.4 885.2L2426.9 886.0L2427.5 886.3L2428.1 886.1L2428.7 885.7L2429.3 884.9L2429.8 883.9L2430.4 882.6L2431.0 881.2L2431.5 879.6L2432.1 877.9L2432.7 876.2L2433.3 874.5L2433.8 872.9L2434.4 871.5L2435.0 870.2L2435.5 869.2L2436.1 868.4L2436.7 868.0L2437.3 867.8L2437.9 867.7L2438.4 867.5L2439.0 867.0L2439.6 866.5L2440.2 865.7L2440.8 864.9L2441.4 863.9L2442.0 862.8L2442.6 861.7L2443.2 860.4L2443.8 859.2L2444.4 857.9L2445.0 856.7L2445.5 855.5L2446.1 854.3L2446.7 853.2L2447.3 852.3L2447.9 851.4L2448.5 850.7L2449.1 850.1L2449.7 849.7L2450.3 849.4L2450.9 849.3L2451.4 849.5L2452.0 850.0L2452.6 850.8L2453.2 851.9L2453.7 853.2L2454.3 854.7L2454.9 856.4L2455.5 858.2L2456.0 859.9L2456.6 861.7L2457.2 863.4L2457.7 864.9L2458.3 866.2L2458.9 867.3L2459.5 868.1L2460.0 868.6L2460.6 868.8L2461.2 868.7L2461.8 868.4L2462.4 867.9L2463.0 867.3L2463.6 866.5L2464.2 865.5L2464.7 864.5L2465.3 863.3L2465.9 862.0L2466.5 860.6L2467.1 859.3L2467.7 857.9L2468.3 856.5L2468.9 855.1L2469.5 853.9L2470.1 852.7L2470.7 851.6L2471.3 850.6L2471.8 849.8L2472.4 849.2L2473.0 848.7L2473.6 848.4L2474.2 848.4L2474.8 848.4L2475.4 848.6L2476.0 848.9L2476.6 849.4L2477.2 849.9L2477.8 850.6L2478.4 851.3L2479.0 852.1L2479.6 853.0L2480.2 854.0L2480.8 855.0L2481.4 856.1L2482.0 857.1L2482.6 858.2L2483.2 859.2L2483.8 860.2L2484.4 861.2L2485.0 862.1L2485.6 862.9L2486.2 863.7L2486.8 864.3L2487.4 864.9L2488.0 865.3L2488.6 865.6L2489.2 865.8L2489.8 865.9L2490.4 865.8L2490.9 865.8L2491.5 865.6L2492.1 865.5L2492.7 865.3L2493.3 865.0L2493.9 864.7L2494.4 864.4L2495.0 864.1L2495.6 863.7L2496.2 863.3L2496.8 862.8L2497.4 862.4L2497.9 861.9L2498.5 861.5L2499.1 861.0L2499.7 860.6L2500.3 860.1L2500.9 859.7L2501.4 859.3L2502.0 858.9L2502.6 858.6L2503.2 858.2L2503.8 857.9L2504.4 857.7L2504.9 857.5L2505.5 857.3L2506.1 857.2L2506.7 857.1L2507.3 857.1L2507.9 857.1L2508.5 857.1L2509.1 857.2L2509.7 857.2L2510.3 857.3L2510.9 857.3L2511.5 857.4L2512.1 857.5L2512.7 857.6L2513.3 857.7L2513.9 857.8L2514.5 857.9L2515.1 858.1L2515.7 858.2L2516.2 858.4L2516.8 858.5L2517.4 858.7L2518.0 858.8L2518.6 859.0L2519.2 859.1L2519.8 859.3L2520.4 859.4L2521.0 859.6L2521.6 859.7L2522.2 859.9L2522.8 860.0L2523.4 860.2L2524.0 860.3L2524.6 860.4L2525.2 860.5L2525.8 860.6L2526.4 860.7L2527.0 860.8L2527.6 860.8L2528.2 860.9L2528.8 860.9L2529.4 861.0L2530.0 861.0L2530.6 861.0L2531.2 861.0L2531.8 860.9L2532.4 860.9L2532.9 860.8L2533.5 860.7L2534.1 860.5L2534.7 860.4L2535.3 860.2L2535.9 860.1L2536.4 860.0L2537.0 859.9L2537.6 859.8L2538.2 859.7L2538.8 859.6L2539.4 859.6" stroke="#b83db8" stroke-width="1.1" fill="none" stroke-linejoin="round" />
<path d="M2229.0 859.2L2229.2 860.0L2229.7 860.0L2230.3 860.0L2230.9 860.0L2231.5 860.0L2232.0 860.0L2232.6 860.0L2233.2 860.0L2233.7 860.0L2234.3 860.0L2234.9 860.0L2235.5 860.0L2236.0 860.0L2236.6 860.0L2237.2 860.0L2237.8 860.0L2238.3 860.0L2238.9 860.0L2239.5 860.0L2240.1 859.9L2240.6 859.8L2241.2 859.7L2241.8 859.5L2242.4 859.2L2243.0 859.0L2243.6 858.7L2244.1 858.4L2244.7 858.4L2245.3 858.3L2245.9 857.4L2246.5 856.9L2247.1 856.2L2247.6 856.6L2248.2 857.1L2248.8 856.5L2249.4 857.3L2250.0 858.6L2250.6 857.1L2251.1 856.4L2251.7 857.9L2252.3 858.4L2252.9 859.4L2253.5 860.4L2254.1 862.4L2254.6 864.0L2255.2 863.9L2255.8 865.0L2256.4 865.7L2257.0 865.3L2257.6 865.3L2258.1 867.4L2258.7 868.6L2259.3 868.2L2259.9 868.1L2260.5 869.0L2261.1 869.6L2261.6 870.6L2262.2 872.1L2262.8 869.8L2263.3 869.0L2263.9 870.9L2264.4 870.1L2264.9 867.5L2265.5 867.6L2266.0 867.1L2266.6 864.0L2267.1 863.4L2267.7 864.8L2268.3 867.3L2268.8 868.9L2269.4 868.7L2270.0 866.8L2270.6 866.4L2271.2 867.3L2271.8 868.2L2272.3 867.6L2272.9 868.0L2273.5 870.4L2274.1 869.8L2274.7 869.1L2275.3 867.6L2275.8 864.9L2276.4 864.2L2277.0 865.9L2277.6 866.6L2278.2 864.0L2278.8 863.2L2279.3 862.5L2279.9 862.1L2280.5 862.3L2281.1 860.2L2281.7 860.3L2282.3 860.1L2282.8 858.9L2283.4 858.8L2284.0 860.5L2284.6 862.5L2285.2 863.1L2285.8 863.9L2286.3 866.2L2286.9 867.4L2287.5 867.0L2288.1 869.4L2288.7 872.1L2289.3 872.5L2289.8 871.5L2290.4 871.9L2291.0 874.1L2291.6 875.1L2292.2 876.0L2292.8 875.6L2293.3 875.3L2293.9 875.4L2294.5 874.9L2295.1 874.0L2295.7 872.3L2296.3 870.1L2296.9 867.4L2297.5 864.7L2298.1 861.1L2298.7 857.6L2299.3 855.4L2299.8 853.8L2300.4 849.2L2301.0 842.8L2301.6 838.2L2302.2 834.6L2302.8 832.6L2303.4 830.1L2304.0 825.1L2304.6 820.6L2305.2 813.6L2305.7 809.9L2306.3 808.6L2306.9 808.0L2307.5 807.9L2308.1 804.5L2308.7 802.7L2309.3 805.7L2309.9 804.5L2310.5 801.0L2311.1 802.8L2311.7 804.2L2312.3 805.4L2312.9 808.9L2313.5 813.9L2314.1 813.6L2314.7 814.6L2315.3 819.9L2315.9 823.5L2316.5 827.2L2317.1 831.2L2317.7 836.3L2318.3 840.8L2318.9 845.4L2319.5 850.3L2320.1 855.4L2320.7 860.5L2321.2 865.7L2321.8 870.9L2322.4 876.1L2323.0 881.2L2323.6 886.3L2324.2 891.2L2324.8 896.0L2325.4 900.6L2326.0 905.0L2326.6 909.2L2327.2 913.1L2327.8 916.7L2328.4 920.0L2329.0 922.9L2329.6 925.5L2330.2 927.8L2330.8 929.6L2331.4 931.1L2332.0 932.1L2332.6 932.7L2333.2 933.0L2333.8 932.7L2334.4 932.1L2335.0 930.9L2335.6 929.4L2336.2 927.4L2336.7 925.0L2337.3 922.2L2337.9 919.0L2338.5 915.5L2339.1 911.6L2339.7 907.4L2340.3 903.0L2340.9 898.3L2341.5 893.4L2342.0 888.3L2342.6 883.1L2343.2 877.7L2343.8 872.3L2344.4 866.8L2345.0 861.4L2345.6 855.9L2346.2 850.6L2346.8 845.4L2347.3 840.3L2347.9 835.4L2348.5 830.7L2349.1 826.2L2349.7 822.0L2350.3 818.2L2350.9 814.7L2351.5 811.5L2352.1 808.7L2352.6 806.3L2353.2 804.3L2353.8 802.7L2354.4 801.6L2355.0 800.9L2355.6 800.7L2356.2 800.9L2356.8 801.5L2357.3 802.4L2357.9 803.7L2358.5 805.3L2359.1 807.3L2359.7 809.6L2360.3 812.3L2360.9 815.2L2361.5 818.4L2362.1 821.8L2362.6 825.5L2363.2 829.3L2363.8 833.3L2364.4 837.5L2365.0 841.8L2365.6 846.1L2366.2 850.5L2366.8 854.9L2367.4 859.3L2367.9 863.7L2368.5 868.0L2369.1 872.1L2369.7 876.2L2370.3 880.0L2370.9 883.7L2371.5 887.1L2372.1 890.3L2372.7 893.2L2373.2 895.8L2373.8 898.1L2374.4 900.1L2375.0 901.8L2375.6 903.1L2376.2 904.0L2376.8 904.6L2377.4 904.8L2378.0 904.6L2378.6 904.2L2379.1 903.6L2379.7 902.7L2380.3 901.6L2380.9 900.2L2381.5 898.7L2382.1 896.9L2382.7 894.9L2383.3 892.7L2383.9 890.4L2384.5 887.9L2385.1 885.2L2385.7 882.5L2386.3 879.7L2386.9 876.7L2387.5 873.8L2388.1 870.8L2388.6 867.8L2389.2 864.8L2389.8 861.8L2390.4 858.9L2391.0 856.0L2391.6 853.3L2392.2 850.7L2392.8 848.2L2393.4 845.8L2394.0 843.6L2394.6 841.6L2395.2 839.9L2395.8 838.3L2396.4 836.9L2397.0 835.8L2397.6 834.9L2398.2 834.3L2398.7 833.9L2399.3 833.8L2399.9 833.9L2400.5 834.2L2401.1 834.8L2401.7 835.5L2402.3 836.5L2402.8 837.6L2403.4 839.0L2404.0 840.5L2404.6 842.2L2405.2 844.0L2405.8 846.0L2406.3 848.1L2406.9 850.3L2407.5 852.6L2408.1 854.9L2408.7 857.3L2409.3 859.8L2409.8 862.2L2410.4 864.7L2411.0 867.1L2411.6 869.4L2412.2 871.7L2412.8 873.9L2413.3 876.0L2413.9 878.0L2414.5 879.8L2415.1 881.5L2415.7 883.0L2416.3 884.4L2416.8 885.5L2417.4 886.5L2418.0 887.2L2418.6 887.8L2419.2 888.1L2419.8 888.2L2420.3 888.0L2420.9 887.2L2421.5 885.9L2422.1 884.1L2422.7 882.0L2423.3 879.4L2423.8 876.5L2424.4 873.4L2425.0 870.2L2425.6 866.8L2426.2 863.5L2426.8 860.2L2427.3 857.1L2427.9 854.3L2428.5 851.7L2429.1 849.5L2429.7 847.8L2430.3 846.5L2430.8 845.7L2431.4 845.4L2432.0 845.5L2432.6 845.7L2433.2 846.0L2433.8 846.4L2434.4 847.0L2435.0 847.6L2435.6 848.4L2436.2 849.2L2436.8 850.2L2437.4 851.2L2438.0 852.2L2438.6 853.4L2439.2 854.5L2439.8 855.8L2440.4 857.0L2441.0 858.2L2441.6 859.4L2442.2 860.6L2442.8 861.8L2443.3 862.9L2443.9 864.0L2444.5 865.0L2445.1 866.0L2445.7 866.8L2446.3 867.6L2446.9 868.2L2447.5 868.8L2448.1 869.2L2448.7 869.5L2449.3 869.7L2449.9 869.7L2450.5 869.7L2451.1 869.4L2451.6 869.0L2452.2 868.4L2452.8 867.6L2453.4 866.7L2453.9 865.7L2454.5 864.6L2455.1 863.5L2455.6 862.2L2456.2 861.0L2456.8 859.8L2457.4 858.5L2457.9 857.4L2458.5 856.3L2459.1 855.3L2459.7 854.4L2460.2 853.6L2460.8 853.0L2461.4 852.6L2462.0 852.3L2462.5 852.2L2463.1 852.3L2463.7 852.5L2464.3 852.7L2464.9 853.1L2465.5 853.6L2466.1 854.1L2466.7 854.7L2467.3 855.4L2467.9 856.1L2468.5 856.9L2469.1 857.7L2469.6 858.5L2470.2 859.3L2470.8 860.0L2471.4 860.8L2472.0 861.4L2472.6 862.1L2473.2 862.6L2473.8 863.1L2474.4 863.4L2475.0 863.7L2475.6 863.9L2476.2 863.9L2476.8 863.9L2477.4 863.8L2478.0 863.7L2478.6 863.5L2479.1 863.3L2479.7 863.1L2480.3 862.8L2480.9 862.4L2481.5 862.1L2482.1 861.7L2482.7 861.3L2483.3 860.9L2483.9 860.5L2484.5 860.1L2485.1 859.7L2485.7 859.3L2486.3 858.9L2486.9 858.6L2487.5 858.3L2488.1 858.0L2488.7 857.7L2489.3 857.5L2489.9 857.3L2490.5 857.2L2491.1 857.1L2491.7 857.1L2492.3 857.1L2492.9 857.2L2493.5 857.2L2494.1 857.3L2494.7 857.4L2495.3 857.5L2495.9 857.7L2496.5 857.8L2497.1 858.0L2497.7 858.2L2498.3 858.4L2498.9 858.6L2499.5 858.8L2500.1 859.0L2500.7 859.2L2501.3 859.3L2501.9 859.5L2502.5 859.7L2503.1 859.9L2503.7 860.0L2504.3 860.1L2504.9 860.2L2505.5 860.3L2506.1 860.4L2506.7 860.4L2507.3 860.4L2507.9 860.4L2508.5 860.4L2509.1 860.3L2509.7 860.3L2510.3 860.2L2510.9 860.2L2511.5 860.1L2512.1 860.0L2512.7 859.9L2513.3 859.8L2513.9 859.7L2514.5 859.6L2515.1 859.4L2515.7 859.3L2516.2 859.2L2516.8 859.1L2517.4 859.0L2518.0 858.9L2518.6 858.8L2519.2 858.7L2519.8 858.6L2520.4 858.6L2521.0 858.5L2521.6 858.5L2522.2 858.5L2522.8 858.5L2523.4 858.5L2524.0 858.5L2524.6 858.5L2525.2 858.5L2525.8 858.6L2526.4 858.6L2527.0 858.6L2527.6 858.7L2528.1 858.7L2528.7 858.8L2529.3 858.9L2529.9 858.9L2530.5 859.0L2531.1 859.1L2531.7 859.1L2532.3 859.2L2532.9 859.2L2533.5 859.3L2534.0 859.4L2534.6 859.4L2535.2 859.5L2535.8 859.5L2536.4 859.5L2537.0 859.6L2537.6 859.6L2538.2 859.6L2538.8 859.6L2539.4 859.6" stroke="#356058" stroke-width="1.1" fill="none" stroke-linejoin="round" />
<path d="M2229.0 859.2L2229.2 859.6L2229.7 859.6L2230.3 859.6L2230.9 859.6L2231.5 859.6L2232.0 859.6L2232.6 859.6L2233.2 859.6L2233.7 859.6L2234.3 859.6L2234.9 859.6L2235.5 859.6L2236.0 859.6L2236.6 859.6L2237.2 859.6L2237.8 859.6L2238.3 859.6L2238.9 859.6L2239.5 859.7L2240.1 859.8L2240.6 860.1L2241.2 860.4L2241.8 860.8L2242.4 861.3L2243.0 861.9L2243.6 862.5L2244.1 863.1L2244.7 863.7L2245.3 864.3L2245.9 865.0L2246.5 865.6L2247.1 866.4L2247.6 867.0L2248.2 867.1L2248.8 867.4L2249.4 867.1L2250.0 866.8L2250.6 866.7L2251.1 867.1L2251.6 866.6L2252.2 864.7L2252.7 864.0L2253.3 863.8L2253.8 861.1L2254.3 860.9L2254.9 861.6L2255.4 860.0L2256.0 861.3L2256.6 862.8L2257.2 863.6L2257.8 868.1L2258.3 870.7L2258.9 871.7L2259.5 876.2L2260.1 877.4L2260.7 877.9L2261.3 879.7L2261.8 881.5L2262.4 878.4L2262.9 873.2L2263.5 871.8L2264.0 869.2L2264.6 865.4L2265.1 865.0L2265.7 866.8L2266.3 867.8L2266.9 870.0L2267.5 871.6L2268.1 871.2L2268.6 870.3L2269.1 868.2L2269.7 867.0L2270.2 867.4L2270.8 866.1L2271.3 865.0L2271.8 863.8L2272.4 864.8L2272.9 867.8L2273.5 866.0L2274.0 864.7L2274.5 865.8L2275.1 867.8L2275.6 869.7L2276.2 869.5L2276.7 869.8L2277.3 870.4L2277.8 869.8L2278.4 870.7L2278.9 871.7L2279.5 872.9L2280.1 875.4L2280.7 878.1L2281.2 880.3L2281.8 882.9L2282.4 884.9L2282.9 887.4L2283.5 890.9L2284.1 893.2L2284.7 895.9L2285.2 898.6L2285.8 898.6L2286.4 899.5L2286.9 900.7L2287.5 901.6L2288.1 901.0L2288.7 898.5L2289.3 897.1L2289.9 896.6L2290.5 893.9L2291.1 889.5L2291.6 885.9L2292.2 880.4L2292.8 875.5L2293.4 871.1L2294.0 865.3L2294.6 859.2L2295.2 852.6L2295.8 845.6L2296.4 838.8L2296.9 831.9L2297.5 825.6L2298.1 819.2L2298.7 811.5L2299.3 804.1L2299.9 796.7L2300.5 792.4L2301.1 786.2L2301.7 778.0L2302.2 774.0L2302.8 770.0L2303.4 768.7L2304.0 762.6L2304.6 757.4L2305.2 759.6L2305.8 755.7L2306.4 752.6L2307.0 754.7L2307.6 758.6L2308.2 757.5L2308.8 754.3L2309.4 759.6L2310.0 767.4L2310.6 769.1L2311.2 768.0L2311.7 775.6L2312.3 783.9L2312.9 789.4L2313.5 796.0L2314.1 801.1L2314.7 808.1L2315.3 817.7L2315.9 827.3L2316.5 832.3L2317.1 839.3L2317.7 850.4L2318.3 859.1L2318.9 867.3L2319.5 876.0L2320.1 884.5L2320.7 893.0L2321.3 901.2L2321.9 909.2L2322.5 916.9L2323.1 924.3L2323.7 931.2L2324.3 937.7L2324.9 943.7L2325.5 949.2L2326.1 954.2L2326.7 958.5L2327.3 962.2L2327.9 965.3L2328.5 967.7L2329.1 969.5L2329.7 970.5L2330.3 970.9L2330.9 970.6L2331.5 969.8L2332.1 968.4L2332.7 966.5L2333.3 964.0L2333.9 961.1L2334.4 957.6L2335.0 953.7L2335.6 949.3L2336.2 944.5L2336.8 939.3L2337.4 933.7L2338.0 927.8L2338.6 921.6L2339.2 915.1L2339.8 908.4L2340.4 901.5L2341.0 894.5L2341.6 887.4L2342.2 880.2L2342.8 872.9L2343.3 865.7L2343.9 858.6L2344.5 851.6L2345.1 844.7L2345.7 838.0L2346.3 831.5L2346.9 825.3L2347.5 819.4L2348.1 813.8L2348.7 808.6L2349.3 803.8L2349.9 799.4L2350.5 795.5L2351.1 792.0L2351.6 789.1L2352.2 786.6L2352.8 784.7L2353.4 783.3L2354.0 782.5L2354.6 782.2L2355.2 782.5L2355.8 783.2L2356.4 784.5L2356.9 786.2L2357.5 788.3L2358.1 791.0L2358.7 794.0L2359.3 797.5L2359.9 801.3L2360.4 805.5L2361.0 810.0L2361.6 814.7L2362.2 819.7L2362.8 824.9L2363.4 830.2L2363.9 835.7L2364.5 841.2L2365.1 846.7L2365.7 852.3L2366.3 857.7L2366.9 863.1L2367.4 868.2L2368.0 873.2L2368.6 878.0L2369.2 882.5L2369.8 886.6L2370.4 890.5L2370.9 893.9L2371.5 897.0L2372.1 899.6L2372.7 901.8L2373.3 903.5L2373.9 904.7L2374.4 905.5L2375.0 905.7L2375.6 905.6L2376.2 905.1L2376.8 904.3L2377.4 903.3L2378.0 901.9L2378.6 900.2L2379.2 898.3L2379.7 896.2L2380.3 893.8L2380.9 891.2L2381.5 888.5L2382.1 885.5L2382.7 882.5L2383.3 879.3L2383.9 876.1L2384.5 872.8L2385.0 869.6L2385.6 866.3L2386.2 863.1L2386.8 859.9L2387.4 856.9L2388.0 853.9L2388.6 851.2L2389.2 848.6L2389.8 846.2L2390.4 844.1L2390.9 842.2L2391.5 840.5L2392.1 839.2L2392.7 838.1L2393.3 837.3L2393.9 836.8L2394.5 836.7L2395.1 836.8L2395.7 837.1L2396.3 837.6L2396.9 838.3L2397.4 839.2L2398.0 840.3L2398.6 841.5L2399.2 842.9L2399.8 844.5L2400.4 846.2L2401.0 848.1L2401.6 850.1L2402.2 852.1L2402.8 854.3L2403.4 856.5L2404.0 858.8L2404.6 861.1L2405.2 863.4L2405.8 865.8L2406.4 868.1L2407.0 870.3L2407.6 872.6L2408.1 874.7L2408.7 876.8L2409.3 878.8L2409.9 880.6L2410.5 882.3L2411.1 883.9L2411.7 885.3L2412.3 886.6L2412.9 887.7L2413.5 888.6L2414.1 889.3L2414.7 889.8L2415.3 890.1L2415.9 890.2L2416.5 889.8L2417.0 888.9L2417.6 887.3L2418.2 885.1L2418.8 882.3L2419.4 879.1L2420.0 875.6L2420.5 871.7L2421.1 867.6L2421.7 863.4L2422.3 859.2L2422.9 855.2L2423.5 851.3L2424.0 847.7L2424.6 844.5L2425.2 841.8L2425.8 839.6L2426.4 838.0L2427.0 837.0L2427.5 836.7L2428.1 836.8L2428.7 837.1L2429.3 837.7L2429.9 838.4L2430.5 839.3L2431.1 840.4L2431.7 841.6L2432.3 843.0L2432.9 844.4L2433.5 846.0L2434.0 847.6L2434.6 849.2L2435.2 850.7L2435.8 852.3L2436.4 853.7L2437.0 855.1L2437.6 856.3L2438.2 857.4L2438.8 858.3L2439.4 859.1L2440.0 859.6L2440.6 859.9L2441.2 860.0L2441.7 860.1L2442.3 860.4L2442.9 860.9L2443.5 861.5L2444.1 862.2L2444.7 863.0L2445.2 863.9L2445.8 864.9L2446.4 865.8L2447.0 866.6L2447.6 867.3L2448.2 867.9L2448.7 868.4L2449.3 868.7L2449.9 868.8L2450.5 868.7L2451.1 868.4L2451.6 867.9L2452.2 867.3L2452.8 866.5L2453.4 865.6L2453.9 864.5L2454.5 863.4L2455.1 862.1L2455.6 860.9L2456.2 859.5L2456.8 858.2L2457.4 856.9L2457.9 855.7L2458.5 854.5L2459.1 853.5L2459.7 852.6L2460.2 851.8L2460.8 851.1L2461.4 850.7L2462.0 850.4L2462.5 850.3L2463.1 850.4L2463.7 850.7L2464.3 851.1L2464.8 851.8L2465.4 852.6L2466.0 853.5L2466.6 854.5L2467.1 855.7L2467.7 856.9L2468.3 858.2L2468.9 859.5L2469.4 860.9L2470.0 862.1L2470.6 863.4L2471.2 864.5L2471.7 865.6L2472.3 866.5L2472.9 867.3L2473.5 867.9L2474.0 868.4L2474.6 868.7L2475.2 868.8L2475.8 868.7L2476.4 868.5L2477.0 868.2L2477.6 867.8L2478.2 867.3L2478.8 866.7L2479.4 866.0L2480.0 865.2L2480.6 864.4L2481.2 863.4L2481.8 862.5L2482.4 861.5L2483.0 860.5L2483.6 859.5L2484.2 858.5L2484.8 857.6L2485.4 856.7L2486.0 855.8L2486.6 855.0L2487.2 854.3L2487.8 853.7L2488.3 853.2L2488.9 852.8L2489.5 852.5L2490.1 852.3L2490.7 852.2L2491.3 852.3L2491.9 852.4L2492.5 852.6L2493.0 852.9L2493.6 853.3L2494.2 853.8L2494.8 854.3L2495.3 854.8L2495.9 855.4L2496.5 856.0L2497.1 856.6L2497.6 857.2L2498.2 857.9L2498.8 858.4L2499.4 859.0L2499.9 859.5L2500.5 859.9L2501.1 860.3L2501.7 860.6L2502.2 860.8L2502.8 861.0L2503.4 861.0L2504.0 861.0L2504.6 861.0L2505.1 860.9L2505.7 860.9L2506.3 860.8L2506.9 860.7L2507.5 860.6L2508.1 860.4L2508.6 860.3L2509.2 860.2L2509.8 860.0L2510.4 859.9L2511.0 859.7L2511.6 859.5L2512.1 859.3L2512.7 859.2L2513.3 859.0L2513.9 858.8L2514.5 858.7L2515.1 858.5L2515.6 858.4L2516.2 858.2L2516.8 858.1L2517.4 858.0L2518.0 857.9L2518.6 857.8L2519.1 857.8L2519.7 857.7L2520.3 857.7L2520.9 857.7L2521.5 857.7L2522.1 857.7L2522.7 857.7L2523.3 857.7L2523.9 857.8L2524.5 857.8L2525.1 857.9L2525.7 857.9L2526.3 858.0L2526.8 858.0L2527.4 858.1L2528.0 858.1L2528.6 858.2L2529.2 858.3L2529.8 858.3L2530.4 858.4L2531.0 858.5L2531.6 858.5L2532.2 858.6L2532.8 858.7L2533.4 858.7L2534.0 858.8L2534.6 858.8L2535.2 858.9L2535.8 858.9L2536.4 859.0L2537.0 859.0L2537.6 859.0L2538.2 859.0L2538.8 859.0L2539.4 859.1" stroke="#fdebd0" stroke-width="1.2" fill="none" stroke-linejoin="round" /></g>
<rect x="1333.5" y="729.5" width="279" height="112" fill="#161616" fill-opacity="0.8" stroke="#383838"/>
<rect x="1342" y="738" width="19" height="19" fill="#f48b7f"/>
<text x="1367.3" y="752.7" font-size="13" fill="#e4e4e4" textLength="233.8" lengthAdjust="spacing">H1:SUS-ITMY_L2_MASTER_OUT_UL_DQ</text>
<rect x="1342" y="763" width="19" height="19" fill="#b83db8"/>
<text x="1367.3" y="777.7" font-size="13" fill="#e4e4e4" textLength="231.0" lengthAdjust="spacing">H1:SUS-ITMY_L2_MASTER_OUT_LL_DQ</text>
<rect x="1342" y="788" width="19" height="19" fill="#fdebd0"/>
<text x="1367.3" y="802.7" font-size="13" fill="#e4e4e4" textLength="235.0" lengthAdjust="spacing">H1:SUS-ITMY_L2_MASTER_OUT_UR_DQ</text>
<rect x="1342" y="813" width="19" height="19" fill="#356058"/>
<text x="1367.3" y="827.7" font-size="13" fill="#e4e4e4" textLength="232.3" lengthAdjust="spacing">H1:SUS-ITMY_L2_MASTER_OUT_LR_DQ</text>
<path d="M1828.3 719V998" stroke="#fff" stroke-width="2.4" stroke-dasharray="10.2 1.8" stroke-dashoffset="5.5"/>
<path d="M2504.1 719V998" stroke="#e2e2e2" stroke-width="2.4" stroke-dasharray="10.2 1.8" stroke-dashoffset="5.5"/>
<rect x="1830.3" y="978" width="122" height="17" fill="#000"/>
<text x="1832.5" y="989.8" font-size="13" fill="#f0f0f0" textLength="116.0" lengthAdjust="spacing">T1=-2s,89ms,725µs</text>
<text x="2478.2" y="989.8" font-size="13" fill="#f0f0f0" textLength="22.1" lengthAdjust="spacing">T2=</text>
<rect x="2101.3" y="730" width="128.8" height="35" fill="#000"/>
<text x="2107.3" y="749.9" font-size="13" fill="#f0f0f0" textLength="22.1" lengthAdjust="spacing">ΔT=</text>
<text x="2133.3" y="739.8" font-size="13" fill="#f0f0f0" textLength="89.8" lengthAdjust="spacing">2s,89ms,725µs</text>
<text x="2133.3" y="759.8" font-size="13" fill="#f0f0f0" textLength="74.6" lengthAdjust="spacing">0.478532 Hz</text>
<g shape-rendering="crispEdges"><path d="M1372.5 719V998" stroke="#fff" stroke-opacity="0.078"/>
<path d="M1453.5 719V998" stroke="#fff" stroke-opacity="0.078"/>
<path d="M1534.5 719V998" stroke="#fff" stroke-opacity="0.115"/>
<path d="M1614.5 719V998" stroke="#fff" stroke-opacity="0.078"/>
<path d="M1695.5 719V998" stroke="#fff" stroke-opacity="0.078"/>
<path d="M1776.5 719V998" stroke="#fff" stroke-opacity="0.078"/>
<path d="M1857.5 719V998" stroke="#fff" stroke-opacity="0.115"/>
<path d="M1938.5 719V998" stroke="#fff" stroke-opacity="0.078"/>
<path d="M2019.5 719V998" stroke="#fff" stroke-opacity="0.078"/>
<path d="M2100.5 719V998" stroke="#fff" stroke-opacity="0.078"/>
<path d="M2180.5 719V998" stroke="#fff" stroke-opacity="0.115"/>
<path d="M2261.5 719V998" stroke="#fff" stroke-opacity="0.078"/>
<path d="M2342.5 719V998" stroke="#fff" stroke-opacity="0.078"/>
<path d="M2423.5 719V998" stroke="#fff" stroke-opacity="0.078"/>
<path d="M2504.5 719V998" stroke="#fff" stroke-opacity="0.115"/>
<path d="M1324 737.5H2540" stroke="#fff" stroke-opacity="0.072"/>
<path d="M1324 768.5H2540" stroke="#fff" stroke-opacity="0.072"/>
<path d="M1324 798.5H2540" stroke="#fff" stroke-opacity="0.072"/>
<path d="M1324 829.5H2540" stroke="#fff" stroke-opacity="0.072"/>
<path d="M1324 859.5H2540" stroke="#fff" stroke-opacity="0.072"/>
<path d="M1324 890.5H2540" stroke="#fff" stroke-opacity="0.072"/>
<path d="M1324 920.5H2540" stroke="#fff" stroke-opacity="0.072"/>
<path d="M1324 951.5H2540" stroke="#fff" stroke-opacity="0.072"/>
<path d="M1324 981.5H2540" stroke="#fff" stroke-opacity="0.072"/></g>
<g><path d="M1323.5 719V998.5H2540" stroke="#969696" fill="none"/>
<text x="1524.6" y="1013.8" font-size="13" fill="#d8d8d8" textLength="17.8" lengthAdjust="spacing">-3s</text>
<text x="1848.0" y="1013.8" font-size="13" fill="#d8d8d8" textLength="17.8" lengthAdjust="spacing">-2s</text>
<text x="2171.4" y="1013.8" font-size="13" fill="#d8d8d8" textLength="17.8" lengthAdjust="spacing">-1s</text>
<text x="2500.0" y="1013.8" font-size="13" fill="#d8d8d8">0</text>
<text x="1310.6" y="742.2" font-size="13" fill="#d8d8d8">8</text>
<text x="1310.6" y="773.2" font-size="13" fill="#d8d8d8">6</text>
<text x="1310.6" y="803.2" font-size="13" fill="#d8d8d8">4</text>
<text x="1310.6" y="834.2" font-size="13" fill="#d8d8d8">2</text>
<text x="1310.6" y="864.2" font-size="13" fill="#d8d8d8">0</text>
<text x="1306.4" y="895.2" font-size="13" fill="#d8d8d8" textLength="11.6" lengthAdjust="spacing">-2</text>
<text x="1306.4" y="925.2" font-size="13" fill="#d8d8d8" textLength="11.6" lengthAdjust="spacing">-4</text>
<text x="1306.4" y="956.2" font-size="13" fill="#d8d8d8" textLength="11.6" lengthAdjust="spacing">-6</text>
<text x="1306.4" y="986.2" font-size="13" fill="#d8d8d8" textLength="11.6" lengthAdjust="spacing">-8</text>
<text x="1249.7" y="859.0" font-size="13" fill="#d8d8d8" textLength="95.7" lengthAdjust="spacing" transform="rotate(-90 1297.6 859.0)">counts (x1e+06)</text></g>
</g>
<g id="plot7">
<clipPath id="c6"><rect x="66" y="1026" width="1211" height="279"/></clipPath>
<g clip-path="url(#c6)"><path d="M65.5 1165.5H304" stroke="#5cafa7" stroke-width="1"/>
<path d="M65.5 1166.5H304" stroke="#8fa83c" stroke-width="1"/>
<path d="M304 1165.5H969" stroke="#7f8f2a" stroke-width="1"/>
<path d="M304 1166.5H969" stroke="#cfe64a" stroke-width="1"/>
<path d="M377 1166.5H396" stroke="#3c5488" stroke-width="1"/>
<path d="M969.0 1166.0L969.2 1165.5L969.8 1165.5L970.4 1165.5L970.9 1165.5L971.5 1165.5L972.1 1165.5L972.7 1165.5L973.3 1165.5L973.9 1165.5L974.5 1165.5L975.1 1165.5L975.7 1165.5L976.3 1165.5L976.9 1165.5L977.5 1165.5L978.1 1165.5L978.7 1165.5L979.3 1165.5L979.9 1165.5L980.4 1165.2L980.9 1164.5L981.5 1163.2L982.0 1161.7L982.6 1160.2L983.1 1158.7L983.6 1157.5L984.2 1156.7L984.7 1156.4L985.3 1157.1L985.8 1158.9L986.4 1161.7L986.9 1164.7L987.5 1167.4L988.1 1169.3L988.6 1170.0L989.2 1168.6L989.7 1164.7L990.3 1158.3L990.9 1150.1L991.4 1140.5L992.0 1130.1L992.6 1119.8L993.1 1110.2L993.7 1102.0L994.3 1095.6L994.8 1091.6L995.4 1090.3L996.0 1098.5L996.6 1118.5L997.2 1138.4L997.7 1146.7L998.3 1144.8L998.8 1139.9L999.3 1133.9L999.8 1129.1L1000.3 1127.2L1000.9 1129.8L1001.4 1136.6L1002.0 1145.0L1002.6 1151.8L1003.2 1154.4L1003.7 1153.1L1004.3 1149.3L1004.9 1143.9L1005.4 1137.8L1006.0 1132.3L1006.5 1128.6L1007.1 1127.2L1007.6 1127.9L1008.2 1129.8L1008.8 1132.9L1009.3 1136.9L1009.9 1141.6L1010.5 1146.7L1011.1 1151.7L1011.6 1156.4L1012.2 1160.4L1012.8 1163.5L1013.3 1165.4L1013.9 1165.9L1014.5 1165.5L1015.0 1165.1L1015.6 1163.8L1016.2 1161.9L1016.7 1159.8L1017.3 1157.4L1017.9 1155.1L1018.5 1152.2L1019.0 1149.0L1019.6 1146.6L1020.2 1145.1L1020.7 1143.1L1021.3 1140.1L1021.9 1138.5L1022.5 1137.7L1023.0 1137.4L1023.6 1137.3L1024.2 1137.9L1024.8 1138.7L1025.4 1137.0L1026.0 1135.3L1026.6 1136.1L1027.2 1136.9L1027.8 1135.8L1028.4 1133.8L1029.0 1131.9L1029.6 1133.6L1030.2 1136.2L1030.8 1136.7L1031.4 1134.5L1032.0 1135.0L1032.5 1136.6L1033.1 1137.2L1033.7 1139.9L1034.2 1140.8L1034.8 1142.1L1035.4 1143.3L1036.0 1145.8L1036.5 1148.9L1037.1 1153.3L1037.7 1158.0L1038.2 1161.0L1038.8 1163.5L1039.4 1163.5L1040.0 1164.7L1040.5 1165.8L1041.1 1166.4L1041.7 1167.6L1042.3 1167.2L1042.9 1169.0L1043.4 1172.9L1044.0 1175.6L1044.6 1179.5L1045.2 1184.4L1045.8 1185.1L1046.4 1184.3L1046.9 1182.8L1047.5 1183.0L1048.1 1184.9L1048.7 1182.7L1049.2 1183.3L1049.8 1185.8L1050.4 1184.6L1050.9 1183.4L1051.5 1183.0L1052.1 1183.8L1052.7 1183.0L1053.2 1181.8L1053.8 1184.6L1054.4 1184.7L1054.9 1183.3L1055.5 1183.0L1056.1 1181.7L1056.7 1181.8L1057.2 1182.8L1057.8 1181.9L1058.4 1181.5L1059.0 1182.3L1059.5 1182.0L1060.1 1179.7L1060.7 1177.9L1061.2 1177.1L1061.8 1177.1L1062.4 1177.0L1063.0 1176.0L1063.5 1174.8L1064.1 1173.9L1064.7 1173.6L1065.2 1173.2L1065.8 1173.0L1066.4 1172.9L1067.0 1172.8L1067.6 1172.6L1068.1 1172.1L1068.7 1171.5L1069.3 1170.8L1069.9 1169.8L1070.5 1168.8L1071.1 1167.6L1071.6 1166.3L1072.2 1164.9L1072.8 1163.4L1073.4 1161.8L1074.0 1160.2L1074.6 1158.5L1075.1 1156.9L1075.7 1155.2L1076.3 1153.5L1076.9 1151.9L1077.5 1150.3L1078.1 1148.9L1078.6 1147.4L1079.2 1146.1L1079.8 1145.0L1080.4 1143.9L1081.0 1143.0L1081.6 1142.2L1082.1 1141.6L1082.7 1141.2L1083.3 1140.9L1083.9 1140.8L1084.5 1140.9L1085.1 1141.2L1085.6 1141.6L1086.2 1142.2L1086.8 1143.0L1087.4 1143.9L1088.0 1145.0L1088.6 1146.1L1089.1 1147.4L1089.7 1148.9L1090.3 1150.3L1090.9 1151.9L1091.5 1153.5L1092.1 1155.2L1092.6 1156.9L1093.2 1158.5L1093.8 1160.2L1094.4 1161.8L1095.0 1163.4L1095.6 1164.9L1096.1 1166.3L1096.7 1167.6L1097.3 1168.8L1097.9 1169.8L1098.5 1170.8L1099.1 1171.5L1099.6 1172.1L1100.2 1172.6L1100.8 1172.8L1101.4 1172.9L1102.0 1172.8L1102.6 1172.5L1103.2 1171.9L1103.8 1171.2L1104.4 1170.3L1104.9 1169.3L1105.5 1168.1L1106.1 1166.9L1106.7 1165.6L1107.3 1164.4L1107.9 1163.1L1108.5 1162.0L1109.1 1160.9L1109.7 1160.0L1110.3 1159.3L1110.9 1158.8L1111.5 1158.4L1112.1 1158.3L1112.7 1158.4L1113.3 1158.7L1113.8 1159.1L1114.4 1159.8L1115.0 1160.6L1115.6 1161.5L1116.2 1162.6L1116.8 1163.8L1117.4 1165.2L1118.0 1166.6L1118.6 1168.1L1119.2 1169.7L1119.8 1171.3L1120.3 1172.9L1120.9 1174.5L1121.5 1176.2L1122.1 1177.7L1122.7 1179.2L1123.3 1180.7L1123.9 1182.0L1124.5 1183.2L1125.1 1184.3L1125.7 1185.3L1126.2 1186.1L1126.8 1186.7L1127.4 1187.1L1128.0 1187.4L1128.6 1187.5L1129.2 1187.4L1129.8 1187.2L1130.4 1186.7L1131.0 1186.1L1131.6 1185.4L1132.2 1184.5L1132.8 1183.4L1133.4 1182.2L1134.0 1180.9L1134.6 1179.4L1135.2 1177.8L1135.8 1176.2L1136.4 1174.4L1137.0 1172.5L1137.6 1170.6L1138.2 1168.5L1138.8 1166.5L1139.4 1164.4L1140.0 1162.3L1140.6 1160.2L1141.2 1158.1L1141.8 1156.0L1142.4 1153.9L1143.0 1151.9L1143.6 1150.0L1144.2 1148.1L1144.8 1146.3L1145.4 1144.6L1146.0 1143.1L1146.6 1141.6L1147.2 1140.3L1147.8 1139.1L1148.3 1138.0L1148.9 1137.1L1149.5 1136.3L1150.1 1135.8L1150.7 1135.3L1151.3 1135.1L1151.9 1135.0L1152.5 1135.2L1153.1 1136.0L1153.7 1137.2L1154.3 1138.9L1154.9 1141.0L1155.5 1143.5L1156.1 1146.3L1156.7 1149.4L1157.3 1152.8L1157.9 1156.3L1158.4 1159.9L1159.0 1163.6L1159.6 1167.2L1160.2 1170.7L1160.8 1174.0L1161.4 1177.2L1162.0 1180.0L1162.6 1182.5L1163.2 1184.6L1163.8 1186.3L1164.4 1187.5L1165.0 1188.2L1165.5 1188.5L1166.1 1188.2L1166.7 1187.5L1167.3 1186.4L1167.9 1184.9L1168.5 1183.1L1169.1 1181.2L1169.7 1179.2L1170.3 1177.3L1170.9 1175.5L1171.5 1174.0L1172.1 1172.9L1172.7 1172.2L1173.3 1171.9L1173.9 1171.9L1174.5 1171.7L1175.0 1171.5L1175.6 1171.2L1176.2 1170.8L1176.8 1170.3L1177.3 1169.8L1177.9 1169.3L1178.5 1168.8L1179.0 1168.2L1179.6 1167.7L1180.2 1167.3L1180.8 1166.9L1181.3 1166.5L1181.9 1166.3L1182.5 1166.2L1183.0 1166.1L1183.6 1166.1L1184.2 1166.1L1184.8 1166.1L1185.4 1166.0L1186.0 1166.0L1186.5 1165.9L1187.1 1165.8L1187.7 1165.8L1188.3 1165.7L1188.9 1165.7L1189.5 1165.6L1190.0 1165.6L1190.6 1165.5L1191.2 1165.5L1191.8 1165.5" stroke="#3c5488" stroke-width="1.1" fill="none" stroke-linejoin="round" />
<path d="M969.0 1166.0L969.2 1165.5L969.8 1165.5L970.4 1165.5L970.9 1165.5L971.5 1165.5L972.1 1165.5L972.7 1165.5L973.3 1165.5L973.9 1165.5L974.5 1165.5L975.1 1165.5L975.7 1165.5L976.3 1165.5L976.9 1165.5L977.5 1165.5L978.1 1165.5L978.7 1165.5L979.3 1165.5L979.9 1165.5L980.4 1165.8L980.9 1166.5L981.5 1167.6L982.0 1169.0L982.6 1170.4L983.1 1171.8L983.6 1172.9L984.2 1173.6L984.7 1173.9L985.3 1173.1L985.9 1171.2L986.5 1168.8L987.1 1166.9L987.6 1166.1L988.2 1170.2L988.8 1180.9L989.4 1194.1L990.0 1204.8L990.6 1208.9L991.1 1199.8L991.7 1177.8L992.3 1155.8L992.9 1146.7L993.4 1153.2L993.9 1170.2L994.4 1191.2L994.9 1208.2L995.4 1214.7L996.0 1206.4L996.6 1184.5L997.2 1157.4L997.7 1135.6L998.3 1127.2L998.9 1132.8L999.5 1147.4L1000.1 1165.4L1000.7 1180.0L1001.2 1185.6L1001.8 1175.3L1002.4 1148.6L1003.0 1115.6L1003.6 1088.8L1004.2 1078.6L1004.7 1091.4L1005.3 1122.4L1005.9 1153.3L1006.5 1166.1L1007.0 1160.3L1007.5 1148.6L1008.1 1142.8L1008.6 1143.2L1009.1 1144.6L1009.7 1146.7L1010.2 1149.2L1010.8 1151.9L1011.3 1154.4L1011.8 1156.5L1012.4 1157.9L1012.9 1158.3L1013.5 1158.6L1014.0 1159.3L1014.5 1160.3L1015.1 1161.3L1015.6 1162.6L1016.2 1164.5L1016.7 1165.6L1017.2 1165.5L1017.8 1164.4L1018.4 1165.0L1018.9 1166.9L1019.5 1167.8L1020.1 1168.7L1020.7 1169.7L1021.3 1171.9L1021.9 1173.6L1022.4 1174.1L1023.0 1174.0L1023.6 1173.5L1024.2 1174.6L1024.8 1174.6L1025.4 1173.9L1025.9 1175.3L1026.5 1178.7L1027.1 1180.4L1027.7 1182.0L1028.3 1183.2L1028.9 1183.0L1029.4 1183.3L1030.0 1184.6L1030.6 1189.1L1031.2 1191.6L1031.8 1192.2L1032.4 1193.8L1032.9 1194.1L1033.5 1193.9L1034.1 1194.7L1034.7 1196.0L1035.3 1196.5L1035.9 1196.8L1036.4 1197.8L1037.0 1198.4L1037.6 1200.5L1038.2 1203.1L1038.8 1207.4L1039.4 1208.7L1039.9 1209.4L1040.5 1215.7L1041.1 1216.0L1041.7 1211.8L1042.3 1211.3L1042.9 1212.6L1043.4 1210.4L1044.0 1207.3L1044.6 1204.7L1045.2 1200.4L1045.8 1200.3L1046.4 1197.1L1046.9 1189.4L1047.5 1185.1L1048.1 1182.5L1048.7 1179.9L1049.3 1177.1L1049.9 1174.0L1050.4 1169.4L1051.0 1167.9L1051.6 1167.5L1052.2 1165.9L1052.8 1164.6L1053.4 1164.1L1054.0 1164.1L1054.5 1163.3L1055.1 1161.1L1055.7 1159.2L1056.3 1157.9L1056.9 1154.3L1057.5 1150.8L1058.1 1147.7L1058.7 1145.2L1059.3 1140.7L1059.9 1136.5L1060.5 1133.5L1061.1 1130.1L1061.7 1127.9L1062.2 1124.8L1062.8 1121.8L1063.4 1119.3L1064.0 1117.6L1064.6 1115.8L1065.2 1114.6L1065.8 1113.9L1066.4 1113.6L1067.0 1113.7L1067.6 1114.1L1068.1 1114.7L1068.7 1115.6L1069.3 1116.7L1069.9 1118.0L1070.5 1119.5L1071.1 1121.3L1071.7 1123.2L1072.3 1125.4L1072.9 1127.7L1073.4 1130.2L1074.0 1132.9L1074.6 1135.7L1075.2 1138.7L1075.8 1141.7L1076.4 1144.9L1077.0 1148.1L1077.6 1151.4L1078.1 1154.7L1078.7 1158.1L1079.3 1161.5L1079.9 1164.8L1080.5 1168.2L1081.1 1171.5L1081.7 1174.7L1082.3 1177.8L1082.8 1180.9L1083.4 1183.8L1084.0 1186.7L1084.6 1189.3L1085.2 1191.8L1085.8 1194.2L1086.4 1196.3L1087.0 1198.3L1087.5 1200.1L1088.1 1201.6L1088.7 1202.9L1089.3 1204.0L1089.9 1204.9L1090.5 1205.5L1091.1 1205.8L1091.7 1206.0L1092.3 1205.9L1092.9 1205.6L1093.5 1205.1L1094.0 1204.5L1094.6 1203.7L1095.2 1202.7L1095.8 1201.5L1096.4 1200.2L1097.0 1198.7L1097.6 1197.1L1098.2 1195.3L1098.8 1193.4L1099.4 1191.4L1100.0 1189.2L1100.6 1187.0L1101.2 1184.7L1101.8 1182.3L1102.4 1179.8L1103.0 1177.3L1103.6 1174.7L1104.2 1172.1L1104.8 1169.5L1105.4 1166.9L1106.0 1164.3L1106.6 1161.8L1107.2 1159.2L1107.8 1156.8L1108.4 1154.4L1109.0 1152.0L1109.6 1149.8L1110.2 1147.7L1110.8 1145.6L1111.3 1143.7L1111.9 1142.0L1112.5 1140.3L1113.1 1138.8L1113.7 1137.5L1114.3 1136.3L1114.9 1135.4L1115.5 1134.5L1116.1 1133.9L1116.7 1133.4L1117.3 1133.1L1117.9 1133.1L1118.5 1133.1L1119.1 1133.3L1119.7 1133.6L1120.3 1134.0L1120.9 1134.6L1121.5 1135.2L1122.1 1136.0L1122.7 1136.9L1123.3 1137.8L1123.9 1138.9L1124.5 1140.1L1125.1 1141.4L1125.7 1142.7L1126.3 1144.1L1126.9 1145.6L1127.5 1147.2L1128.1 1148.8L1128.7 1150.5L1129.3 1152.2L1129.9 1154.0L1130.5 1155.7L1131.1 1157.5L1131.7 1159.4L1132.3 1161.2L1132.9 1163.0L1133.5 1164.8L1134.1 1166.6L1134.7 1168.3L1135.3 1170.1L1135.9 1171.7L1136.5 1173.4L1137.1 1174.9L1137.7 1176.4L1138.3 1177.8L1138.9 1179.2L1139.5 1180.5L1140.1 1181.6L1140.7 1182.7L1141.3 1183.7L1141.9 1184.6L1142.5 1185.3L1143.1 1186.0L1143.7 1186.5L1144.3 1187.0L1144.9 1187.3L1145.5 1187.4L1146.1 1187.5L1146.7 1187.4L1147.3 1187.2L1147.9 1186.7L1148.4 1186.2L1149.0 1185.4L1149.6 1184.5L1150.2 1183.5L1150.8 1182.3L1151.4 1181.1L1151.9 1179.7L1152.5 1178.3L1153.1 1176.7L1153.7 1175.2L1154.3 1173.6L1154.9 1171.9L1155.4 1170.3L1156.0 1168.7L1156.6 1167.1L1157.2 1165.6L1157.8 1164.2L1158.4 1162.8L1158.9 1161.5L1159.5 1160.4L1160.1 1159.4L1160.7 1158.5L1161.3 1157.7L1161.9 1157.1L1162.4 1156.7L1163.0 1156.5L1163.6 1156.4L1164.2 1156.5L1164.7 1156.6L1165.3 1157.0L1165.9 1157.4L1166.5 1157.9L1167.0 1158.5L1167.6 1159.2L1168.2 1159.9L1168.8 1160.6L1169.3 1161.3L1169.9 1162.0L1170.5 1162.6L1171.0 1163.1L1171.6 1163.6L1172.2 1163.9L1172.8 1164.1L1173.3 1164.2L1173.9 1164.2L1174.5 1164.2L1175.1 1164.3L1175.7 1164.5L1176.3 1164.6L1176.9 1164.8L1177.5 1164.9L1178.1 1165.1L1178.7 1165.2L1179.3 1165.4L1179.9 1165.4L1180.5 1165.5L1181.1 1165.5" stroke="#5cafa7" stroke-width="1.1" fill="none" stroke-linejoin="round" />
<path d="M969.0 1166.0L969.2 1165.5L969.8 1165.5L970.4 1165.5L970.9 1165.5L971.5 1165.5L972.1 1165.5L972.7 1165.5L973.3 1165.5L973.9 1165.5L974.5 1165.5L975.1 1165.5L975.7 1165.5L976.3 1165.5L976.9 1165.5L977.5 1165.5L978.1 1165.5L978.7 1165.5L979.3 1165.5L979.9 1165.5L980.4 1166.0L981.0 1167.5L981.6 1169.9L982.1 1173.0L982.7 1176.5L983.3 1180.4L983.8 1184.2L984.4 1187.8L985.0 1190.9L985.5 1193.3L986.1 1194.8L986.7 1195.3L987.2 1191.9L987.7 1182.1L988.3 1167.1L988.8 1148.7L989.4 1129.1L989.9 1110.7L990.4 1095.7L991.0 1085.9L991.5 1082.5L992.1 1090.5L992.6 1112.9L993.2 1145.2L993.7 1181.1L994.3 1213.5L994.9 1235.9L995.4 1243.9L996.0 1224.8L996.6 1174.7L997.2 1112.8L997.7 1062.7L998.3 1043.6L998.9 1060.9L999.5 1106.1L1000.1 1162.0L1000.7 1207.2L1001.2 1224.4L1001.8 1197.7L1002.4 1133.1L1003.0 1068.4L1003.6 1041.7L1004.1 1057.3L1004.6 1098.1L1005.1 1148.6L1005.6 1189.4L1006.1 1205.0L1006.6 1193.0L1007.1 1164.2L1007.6 1135.3L1008.1 1123.3L1008.6 1127.9L1009.2 1138.9L1009.8 1149.9L1010.4 1154.4L1010.9 1153.0L1011.4 1149.6L1011.8 1146.1L1012.3 1144.7L1012.8 1146.0L1013.4 1149.6L1013.9 1154.6L1014.4 1159.8L1014.9 1162.8L1015.4 1163.3L1016.0 1163.3L1016.6 1161.6L1017.2 1159.0L1017.8 1158.4L1018.4 1158.6L1018.9 1161.2L1019.5 1165.6L1020.1 1170.1L1020.7 1174.7L1021.3 1179.9L1021.9 1184.4L1022.4 1188.4L1023.0 1192.2L1023.6 1193.1L1024.2 1192.8L1024.8 1193.4L1025.4 1191.7L1026.0 1193.5L1026.6 1197.6L1027.2 1198.9L1027.8 1201.0L1028.4 1201.6L1029.0 1203.2L1029.6 1206.8L1030.2 1210.0L1030.8 1209.5L1031.4 1207.3L1032.0 1209.2L1032.5 1208.6L1033.1 1208.1L1033.7 1207.6L1034.2 1202.6L1034.8 1201.5L1035.4 1202.0L1036.0 1196.8L1036.5 1194.2L1037.1 1193.0L1037.7 1190.6L1038.2 1188.3L1038.8 1183.0L1039.4 1182.5L1040.0 1184.2L1040.5 1185.3L1041.1 1186.0L1041.7 1183.4L1042.3 1178.4L1042.9 1172.6L1043.4 1167.0L1044.0 1160.5L1044.6 1154.4L1045.2 1146.9L1045.8 1143.1L1046.4 1142.9L1046.9 1144.5L1047.5 1145.9L1048.1 1144.5L1048.6 1146.8L1049.2 1148.9L1049.7 1150.2L1050.3 1151.4L1050.8 1154.0L1051.4 1156.1L1052.0 1152.9L1052.5 1151.2L1053.1 1151.6L1053.7 1150.3L1054.2 1147.9L1054.8 1144.9L1055.4 1142.3L1055.9 1141.6L1056.5 1141.6L1057.1 1140.2L1057.6 1138.5L1058.2 1140.3L1058.7 1141.5L1059.3 1143.1L1059.8 1145.8L1060.3 1147.9L1060.9 1150.6L1061.4 1152.1L1062.0 1152.7L1062.5 1152.4L1063.1 1152.1L1063.7 1152.7L1064.2 1153.2L1064.8 1153.2L1065.4 1153.5L1066.0 1153.8L1066.6 1154.0L1067.2 1154.3L1067.7 1154.4L1068.3 1154.4L1068.9 1154.6L1069.5 1155.1L1070.1 1155.9L1070.7 1157.0L1071.3 1158.2L1071.9 1159.6L1072.5 1161.0L1073.1 1162.3L1073.7 1163.6L1074.3 1164.6L1074.9 1165.4L1075.5 1165.9L1076.1 1166.1L1076.7 1166.3L1077.3 1166.9L1077.9 1167.9L1078.5 1169.3L1079.1 1170.8L1079.7 1172.5L1080.3 1174.3L1080.9 1176.0L1081.5 1177.5L1082.1 1178.9L1082.7 1179.9L1083.3 1180.5L1083.9 1180.7L1084.5 1180.6L1085.1 1180.5L1085.7 1180.3L1086.3 1180.1L1086.9 1179.7L1087.5 1179.4L1088.1 1179.1L1088.7 1178.7L1089.3 1178.4L1089.9 1178.1L1090.5 1177.9L1091.1 1177.8L1091.7 1177.8L1092.3 1177.6L1092.9 1177.0L1093.5 1176.2L1094.1 1175.0L1094.7 1173.7L1095.3 1172.2L1095.9 1170.7L1096.4 1169.2L1097.0 1167.9L1097.6 1166.7L1098.2 1165.9L1098.8 1165.3L1099.4 1165.1L1100.0 1165.2L1100.6 1165.4L1101.2 1165.7L1101.8 1166.2L1102.4 1166.7L1102.9 1167.3L1103.5 1168.1L1104.1 1168.8L1104.7 1169.6L1105.3 1170.5L1105.9 1171.3L1106.4 1172.1L1107.0 1172.9L1107.6 1173.6L1108.2 1174.3L1108.8 1174.8L1109.4 1175.2L1109.9 1175.6L1110.5 1175.8L1111.1 1175.8L1111.7 1175.7L1112.3 1175.4L1112.9 1174.9L1113.4 1174.2L1114.0 1173.4L1114.6 1172.3L1115.2 1171.1L1115.8 1169.7L1116.4 1168.2L1116.9 1166.6L1117.5 1164.9L1118.1 1163.1L1118.7 1161.2L1119.3 1159.3L1119.9 1157.4L1120.4 1155.4L1121.0 1153.5L1121.6 1151.6L1122.2 1149.8L1122.8 1148.1L1123.4 1146.5L1123.9 1145.0L1124.5 1143.6L1125.1 1142.4L1125.7 1141.4L1126.3 1140.5L1126.9 1139.8L1127.4 1139.3L1128.0 1139.0L1128.6 1138.9L1129.2 1139.0L1129.8 1139.2L1130.4 1139.7L1131.0 1140.3L1131.6 1141.1L1132.2 1142.0L1132.8 1143.1L1133.4 1144.3L1134.0 1145.7L1134.6 1147.3L1135.2 1148.9L1135.8 1150.6L1136.4 1152.5L1137.0 1154.4L1137.6 1156.5L1138.2 1158.5L1138.8 1160.7L1139.4 1162.8L1140.0 1165.0L1140.6 1167.2L1141.2 1169.4L1141.8 1171.6L1142.4 1173.7L1143.0 1175.8L1143.6 1177.8L1144.2 1179.7L1144.8 1181.6L1145.4 1183.3L1146.0 1185.0L1146.6 1186.5L1147.2 1187.9L1147.8 1189.1L1148.3 1190.2L1148.9 1191.2L1149.5 1191.9L1150.1 1192.5L1150.7 1193.0L1151.3 1193.2L1151.9 1193.3L1152.5 1193.1L1153.1 1192.5L1153.7 1191.5L1154.3 1190.1L1154.9 1188.3L1155.5 1186.2L1156.1 1183.9L1156.7 1181.3L1157.3 1178.5L1157.9 1175.5L1158.4 1172.5L1159.0 1169.4L1159.6 1166.4L1160.2 1163.5L1160.8 1160.7L1161.4 1158.1L1162.0 1155.7L1162.6 1153.6L1163.2 1151.9L1163.8 1150.5L1164.4 1149.4L1165.0 1148.8L1165.5 1148.6L1166.1 1148.8L1166.7 1149.4L1167.3 1150.3L1167.9 1151.5L1168.5 1153.0L1169.1 1154.6L1169.7 1156.2L1170.3 1157.8L1170.9 1159.3L1171.5 1160.5L1172.1 1161.4L1172.7 1162.0L1173.3 1162.2L1173.9 1162.3L1174.5 1162.4L1175.1 1162.6L1175.7 1162.9L1176.3 1163.3L1176.9 1163.7L1177.5 1164.1L1178.1 1164.5L1178.7 1164.8L1179.3 1165.1L1179.9 1165.3L1180.5 1165.5L1181.1 1165.5" stroke="#d1e94d" stroke-width="1.2" fill="none" stroke-linejoin="round" />
<path d="M969.0 1166.0L969.2 1165.5L969.8 1165.5L970.4 1165.5L970.9 1165.5L971.5 1165.5L972.1 1165.5L972.7 1165.5L973.3 1165.5L973.9 1165.5L974.5 1165.5L975.1 1165.5L975.7 1165.5L976.3 1165.5L976.9 1165.5L977.5 1165.5L978.1 1165.5L978.7 1165.5L979.3 1165.5L979.9 1165.5L980.4 1165.0L981.0 1163.6L981.6 1161.3L982.1 1158.4L982.7 1154.9L983.3 1151.2L983.8 1147.5L984.4 1144.1L985.0 1141.1L985.5 1138.9L986.1 1137.4L986.7 1136.9L987.2 1140.3L987.7 1150.1L988.3 1165.1L988.8 1183.5L989.4 1203.1L989.9 1221.5L990.4 1236.5L991.0 1246.3L991.5 1249.7L992.1 1242.0L992.6 1220.4L993.2 1189.2L993.7 1154.6L994.3 1123.4L994.9 1101.9L995.4 1094.2L996.0 1112.8L996.6 1161.7L997.2 1222.1L997.7 1270.9L998.3 1289.6L998.9 1272.6L999.4 1228.1L1000.0 1173.1L1000.5 1128.7L1001.1 1111.7L1001.6 1128.7L1002.1 1173.1L1002.6 1228.1L1003.1 1272.6L1003.6 1289.6L1004.1 1265.8L1004.7 1208.4L1005.2 1151.0L1005.7 1127.2L1006.3 1139.7L1006.9 1170.0L1007.5 1200.2L1008.1 1212.8L1008.6 1211.7L1009.2 1208.7L1009.7 1204.5L1010.3 1199.7L1010.8 1195.4L1011.4 1192.4L1011.9 1191.4L1012.5 1191.1L1013.1 1190.1L1013.7 1188.6L1014.3 1186.9L1014.9 1185.4L1015.4 1183.3L1016.0 1180.8L1016.6 1179.6L1017.2 1178.6L1017.8 1177.8L1018.4 1176.8L1018.9 1176.3L1019.5 1174.5L1020.1 1172.0L1020.7 1169.4L1021.3 1167.4L1021.9 1165.5L1022.4 1163.6L1023.0 1162.0L1023.6 1160.6L1024.2 1162.4L1024.8 1160.9L1025.4 1157.9L1026.0 1155.5L1026.6 1150.2L1027.2 1147.5L1027.8 1146.6L1028.4 1141.8L1029.0 1138.8L1029.6 1136.5L1030.2 1132.9L1030.8 1132.4L1031.4 1132.3L1032.0 1134.5L1032.5 1132.7L1033.1 1129.7L1033.7 1130.6L1034.2 1125.4L1034.8 1119.8L1035.4 1119.7L1036.0 1118.1L1036.5 1114.9L1037.1 1113.7L1037.7 1110.0L1038.2 1104.9L1038.8 1100.0L1039.4 1099.6L1040.0 1100.3L1040.5 1099.6L1041.1 1100.6L1041.7 1099.3L1042.3 1102.6L1042.9 1108.0L1043.5 1110.5L1044.1 1112.2L1044.7 1115.4L1045.3 1120.8L1045.9 1125.3L1046.5 1128.9L1047.1 1133.3L1047.7 1137.3L1048.3 1138.9L1048.9 1138.7L1049.5 1140.5L1050.1 1143.6L1050.7 1143.5L1051.3 1147.9L1051.9 1156.4L1052.5 1164.5L1053.1 1171.1L1053.7 1176.6L1054.3 1182.3L1054.9 1188.2L1055.5 1192.2L1056.1 1193.7L1056.7 1194.3L1057.2 1195.4L1057.8 1196.4L1058.4 1196.3L1059.0 1198.9L1059.5 1201.8L1060.1 1204.3L1060.7 1207.6L1061.2 1211.0L1061.8 1214.2L1062.4 1216.5L1063.0 1218.9L1063.5 1221.4L1064.1 1224.1L1064.7 1225.9L1065.2 1227.2L1065.8 1228.0L1066.4 1228.3L1067.0 1228.0L1067.6 1227.1L1068.1 1225.6L1068.7 1223.5L1069.3 1220.9L1069.9 1217.9L1070.5 1214.5L1071.1 1210.9L1071.6 1207.0L1072.2 1203.1L1072.8 1199.1L1073.4 1195.2L1074.0 1191.6L1074.6 1188.2L1075.1 1185.2L1075.7 1182.6L1076.3 1180.5L1076.9 1179.0L1077.5 1178.1L1078.1 1177.8L1078.6 1177.6L1079.2 1177.2L1079.8 1176.4L1080.4 1175.4L1081.0 1174.1L1081.6 1172.6L1082.1 1170.8L1082.7 1168.8L1083.3 1166.6L1083.9 1164.2L1084.5 1161.6L1085.1 1159.0L1085.6 1156.2L1086.2 1153.4L1086.8 1150.6L1087.4 1147.7L1088.0 1144.9L1088.6 1142.1L1089.1 1139.5L1089.7 1136.9L1090.3 1134.6L1090.9 1132.3L1091.5 1130.3L1092.1 1128.5L1092.6 1127.0L1093.2 1125.7L1093.8 1124.7L1094.4 1123.9L1095.0 1123.5L1095.6 1123.3L1096.1 1123.5L1096.7 1123.9L1097.3 1124.5L1097.9 1125.5L1098.5 1126.6L1099.1 1128.1L1099.7 1129.7L1100.3 1131.6L1100.8 1133.7L1101.4 1136.0L1102.0 1138.5L1102.6 1141.2L1103.2 1144.0L1103.8 1146.9L1104.4 1149.9L1105.0 1153.0L1105.6 1156.2L1106.1 1159.5L1106.7 1162.7L1107.3 1166.0L1107.9 1169.2L1108.5 1172.4L1109.1 1175.5L1109.7 1178.5L1110.3 1181.4L1110.9 1184.2L1111.4 1186.9L1112.0 1189.4L1112.6 1191.7L1113.2 1193.8L1113.8 1195.7L1114.4 1197.3L1115.0 1198.8L1115.6 1199.9L1116.1 1200.9L1116.7 1201.5L1117.3 1201.9L1117.9 1202.1L1118.5 1202.0L1119.1 1201.8L1119.7 1201.5L1120.3 1201.0L1120.9 1200.4L1121.5 1199.7L1122.1 1198.9L1122.7 1197.9L1123.3 1196.8L1123.9 1195.7L1124.5 1194.4L1125.1 1193.0L1125.7 1191.6L1126.3 1190.0L1126.9 1188.4L1127.5 1186.7L1128.1 1185.0L1128.7 1183.2L1129.2 1181.4L1129.8 1179.6L1130.4 1177.7L1131.0 1175.8L1131.6 1174.0L1132.2 1172.1L1132.8 1170.2L1133.4 1168.4L1134.0 1166.7L1134.6 1164.9L1135.2 1163.2L1135.8 1161.6L1136.4 1160.1L1137.0 1158.6L1137.6 1157.3L1138.2 1156.0L1138.8 1154.8L1139.4 1153.7L1140.0 1152.8L1140.6 1152.0L1141.2 1151.2L1141.8 1150.6L1142.4 1150.2L1143.0 1149.8L1143.6 1149.6L1144.2 1149.6L1144.7 1149.6L1145.3 1149.8L1145.9 1150.1L1146.5 1150.5L1147.1 1150.9L1147.7 1151.5L1148.2 1152.2L1148.8 1153.0L1149.4 1153.8L1150.0 1154.7L1150.6 1155.6L1151.2 1156.6L1151.7 1157.7L1152.3 1158.7L1152.9 1159.8L1153.5 1160.9L1154.1 1161.9L1154.7 1162.9L1155.2 1163.9L1155.8 1164.9L1156.4 1165.8L1157.0 1166.6L1157.6 1167.4L1158.2 1168.0L1158.7 1168.6L1159.3 1169.1L1159.9 1169.5L1160.5 1169.8L1161.1 1169.9L1161.7 1170.0L1162.2 1170.0L1162.8 1169.9L1163.4 1169.8L1164.0 1169.6L1164.6 1169.3L1165.2 1169.1L1165.7 1168.8L1166.3 1168.5L1166.9 1168.1L1167.5 1167.8L1168.1 1167.4L1168.7 1167.1L1169.2 1166.7L1169.8 1166.4L1170.4 1166.2L1171.0 1166.0L1171.6 1165.8L1172.2 1165.6L1172.7 1165.6L1173.3 1165.5" stroke="#69751d" stroke-width="1.1" fill="none" stroke-linejoin="round" />
<path d="M1181 1165.5H1277" stroke="#4a5414" stroke-width="1"/><path d="M1181 1166.5H1277" stroke="#7f8f2a" stroke-width="1"/></g>
<rect x="75.5" y="1036.5" width="282" height="112" fill="#161616" fill-opacity="0.8" stroke="#383838"/>
<rect x="84" y="1045" width="19" height="19" fill="#3c5488"/>
<text x="109.3" y="1059.7" font-size="13" fill="#e4e4e4" textLength="237.4" lengthAdjust="spacing">H1:SUS-ETMY_L2_MASTER_OUT_UL_DQ</text>
<rect x="84" y="1070" width="19" height="19" fill="#5cafa7"/>
<text x="109.3" y="1084.7" font-size="13" fill="#e4e4e4" textLength="234.6" lengthAdjust="spacing">H1:SUS-ETMY_L2_MASTER_OUT_LL_DQ</text>
<rect x="84" y="1095" width="19" height="19" fill="#d1e94d"/>
<text x="109.3" y="1109.7" font-size="13" fill="#e4e4e4" textLength="238.6" lengthAdjust="spacing">H1:SUS-ETMY_L2_MASTER_OUT_UR_DQ</text>
<rect x="84" y="1120" width="19" height="19" fill="#69751d"/>
<text x="109.3" y="1134.7" font-size="13" fill="#e4e4e4" textLength="235.9" lengthAdjust="spacing">H1:SUS-ETMY_L2_MASTER_OUT_LR_DQ</text>
<path d="M569.0 1026V1305" stroke="#fff" stroke-width="2.4" stroke-dasharray="10.2 1.8" stroke-dashoffset="5.5"/>
<path d="M1241.9 1026V1305" stroke="#e2e2e2" stroke-width="2.4" stroke-dasharray="10.2 1.8" stroke-dashoffset="5.5"/>
<rect x="571.0" y="1285" width="122" height="17" fill="#000"/>
<text x="573.2" y="1296.8" font-size="13" fill="#f0f0f0" textLength="116.0" lengthAdjust="spacing">T1=-2s,89ms,725µs</text>
<text x="1216.0" y="1296.8" font-size="13" fill="#f0f0f0" textLength="22.1" lengthAdjust="spacing">T2=</text>
<rect x="840.5" y="1037" width="128.8" height="35" fill="#000"/>
<text x="846.5" y="1055.8" font-size="13" fill="#f0f0f0" textLength="22.1" lengthAdjust="spacing">ΔT=</text>
<text x="872.6" y="1045.7" font-size="13" fill="#f0f0f0" textLength="89.8" lengthAdjust="spacing">2s,89ms,725µs</text>
<text x="872.6" y="1065.7" font-size="13" fill="#f0f0f0" textLength="74.6" lengthAdjust="spacing">0.478532 Hz</text>
<g shape-rendering="crispEdges"><path d="M115.5 1026V1305" stroke="#fff" stroke-opacity="0.078"/>
<path d="M195.5 1026V1305" stroke="#fff" stroke-opacity="0.078"/>
<path d="M276.5 1026V1305" stroke="#fff" stroke-opacity="0.115"/>
<path d="M356.5 1026V1305" stroke="#fff" stroke-opacity="0.078"/>
<path d="M437.5 1026V1305" stroke="#fff" stroke-opacity="0.078"/>
<path d="M517.5 1026V1305" stroke="#fff" stroke-opacity="0.078"/>
<path d="M598.5 1026V1305" stroke="#fff" stroke-opacity="0.115"/>
<path d="M678.5 1026V1305" stroke="#fff" stroke-opacity="0.078"/>
<path d="M759.5 1026V1305" stroke="#fff" stroke-opacity="0.078"/>
<path d="M839.5 1026V1305" stroke="#fff" stroke-opacity="0.078"/>
<path d="M920.5 1026V1305" stroke="#fff" stroke-opacity="0.115"/>
<path d="M1000.5 1026V1305" stroke="#fff" stroke-opacity="0.078"/>
<path d="M1081.5 1026V1305" stroke="#fff" stroke-opacity="0.078"/>
<path d="M1161.5 1026V1305" stroke="#fff" stroke-opacity="0.078"/>
<path d="M1242.5 1026V1305" stroke="#fff" stroke-opacity="0.115"/>
<path d="M66 1086.5H1277" stroke="#fff" stroke-opacity="0.072"/>
<path d="M66 1165.5H1277" stroke="#fff" stroke-opacity="0.072"/>
<path d="M66 1243.5H1277" stroke="#fff" stroke-opacity="0.072"/>
<path d="M66 1040.5H1277" stroke="#fff" stroke-opacity="0.058"/>
<path d="M66 1056.5H1277" stroke="#fff" stroke-opacity="0.058"/>
<path d="M66 1071.5H1277" stroke="#fff" stroke-opacity="0.058"/>
<path d="M66 1102.5H1277" stroke="#fff" stroke-opacity="0.058"/>
<path d="M66 1118.5H1277" stroke="#fff" stroke-opacity="0.058"/>
<path d="M66 1134.5H1277" stroke="#fff" stroke-opacity="0.058"/>
<path d="M66 1149.5H1277" stroke="#fff" stroke-opacity="0.058"/>
<path d="M66 1181.5H1277" stroke="#fff" stroke-opacity="0.058"/>
<path d="M66 1196.5H1277" stroke="#fff" stroke-opacity="0.058"/>
<path d="M66 1212.5H1277" stroke="#fff" stroke-opacity="0.058"/>
<path d="M66 1228.5H1277" stroke="#fff" stroke-opacity="0.058"/>
<path d="M66 1259.5H1277" stroke="#fff" stroke-opacity="0.058"/>
<path d="M66 1275.5H1277" stroke="#fff" stroke-opacity="0.058"/>
<path d="M66 1290.5H1277" stroke="#fff" stroke-opacity="0.058"/></g>
<g><path d="M65.5 1026V1305.5H1277" stroke="#969696" fill="none"/>
<text x="266.6" y="1320.8" font-size="13" fill="#d8d8d8" textLength="17.8" lengthAdjust="spacing">-3s</text>
<text x="588.6" y="1320.8" font-size="13" fill="#d8d8d8" textLength="17.8" lengthAdjust="spacing">-2s</text>
<text x="910.6" y="1320.8" font-size="13" fill="#d8d8d8" textLength="17.8" lengthAdjust="spacing">-1s</text>
<text x="1237.8" y="1320.8" font-size="13" fill="#d8d8d8">0</text>
<text x="45.1" y="1092.2" font-size="13" fill="#d8d8d8" textLength="14.9" lengthAdjust="spacing">10</text>
<text x="52.6" y="1171.2" font-size="13" fill="#d8d8d8">0</text>
<text x="40.9" y="1249.2" font-size="13" fill="#d8d8d8" textLength="19.1" lengthAdjust="spacing">-10</text>
<text x="-13.3" y="1166.0" font-size="13" fill="#d8d8d8" textLength="95.7" lengthAdjust="spacing" transform="rotate(-90 34.6 1166.0)">counts (x1e+06)</text></g>
</g>
<text x="1074.0" y="1363.2" font-size="16" fill="#e6e6e6" textLength="412.0" lengthAdjust="spacing">t0 = Mon Nov 03 2025 18:37:33 UTC [1446230271.0625]</text>
</svg>
<div id="bottom">
<div class="btn" style="left:2px;width:99px;color:#141414"><svg style="position:absolute;left:9px;top:6.500px" width="9" height="10" viewBox="0 0 9 10"><path d="M1 .8L8 5L1 9.200z" fill="#f4f4f4" stroke="#b0b0b0" stroke-width=".9"/></svg><span style="font-size:12px;letter-spacing:0.401px;left:24px">start online</span></div>
<div class="btn" style="left:104px;width:99px;color:#b8b8b8"><svg style="position:absolute;left:11px;top:7px" width="9" height="9" viewBox="0 0 9 9"><rect x=".5" y=".5" width="7.500" height="7.500" fill="#fafafa" stroke="#d4d4d4"/></svg><span style="font-size:12px;letter-spacing:0.361px;left:25px">stop online</span></div>
<div class="btn" style="left:206px;width:99px;color:#141414"><span style="font-size:12px;letter-spacing:0.166px;left:35px">reset</span></div>
<div class="btn" style="left:308px;width:100px;color:#141414"><span style="font-size:12px;letter-spacing:0.194px;left:11.800000000000011px">add channels</span></div>
<div class="btn" style="left:2448px;width:80px;color:#141414"><span style="font-size:12px;letter-spacing:0.352px;left:13px">snapshot</span></div>
<svg style="position:absolute;left:2537px;top:11px" width="14" height="9" viewBox="0 0 14 9"><path d="M.8 8.200L6.900 .6L13 8.200z" fill="#2a2a2a"/></svg>
<div class="st" style="left:15.500px;top:35.500px;white-space:pre"><span style="font-size:12px;letter-spacing:0.209px;">h1daqnds1:8088  [429233 channels]</span></div>
<div class="st" style="left:2403px;top:35.500px"><a style="text-decoration:underline"><span style="font-size:12px;letter-spacing:0.177px;">ndscope</span></a><span style="font-size:12px"> </span><a style="text-decoration:underline"><span style="font-size:12px;letter-spacing:0.026px;">0.19.3</span></a><span style="font-size:12px"> (</span><a style="text-decoration:underline"><span style="font-size:12px;letter-spacing:0.531px;">report bug</span></a><span style="font-size:12px">)</span></div>
</div>
</body></html>
